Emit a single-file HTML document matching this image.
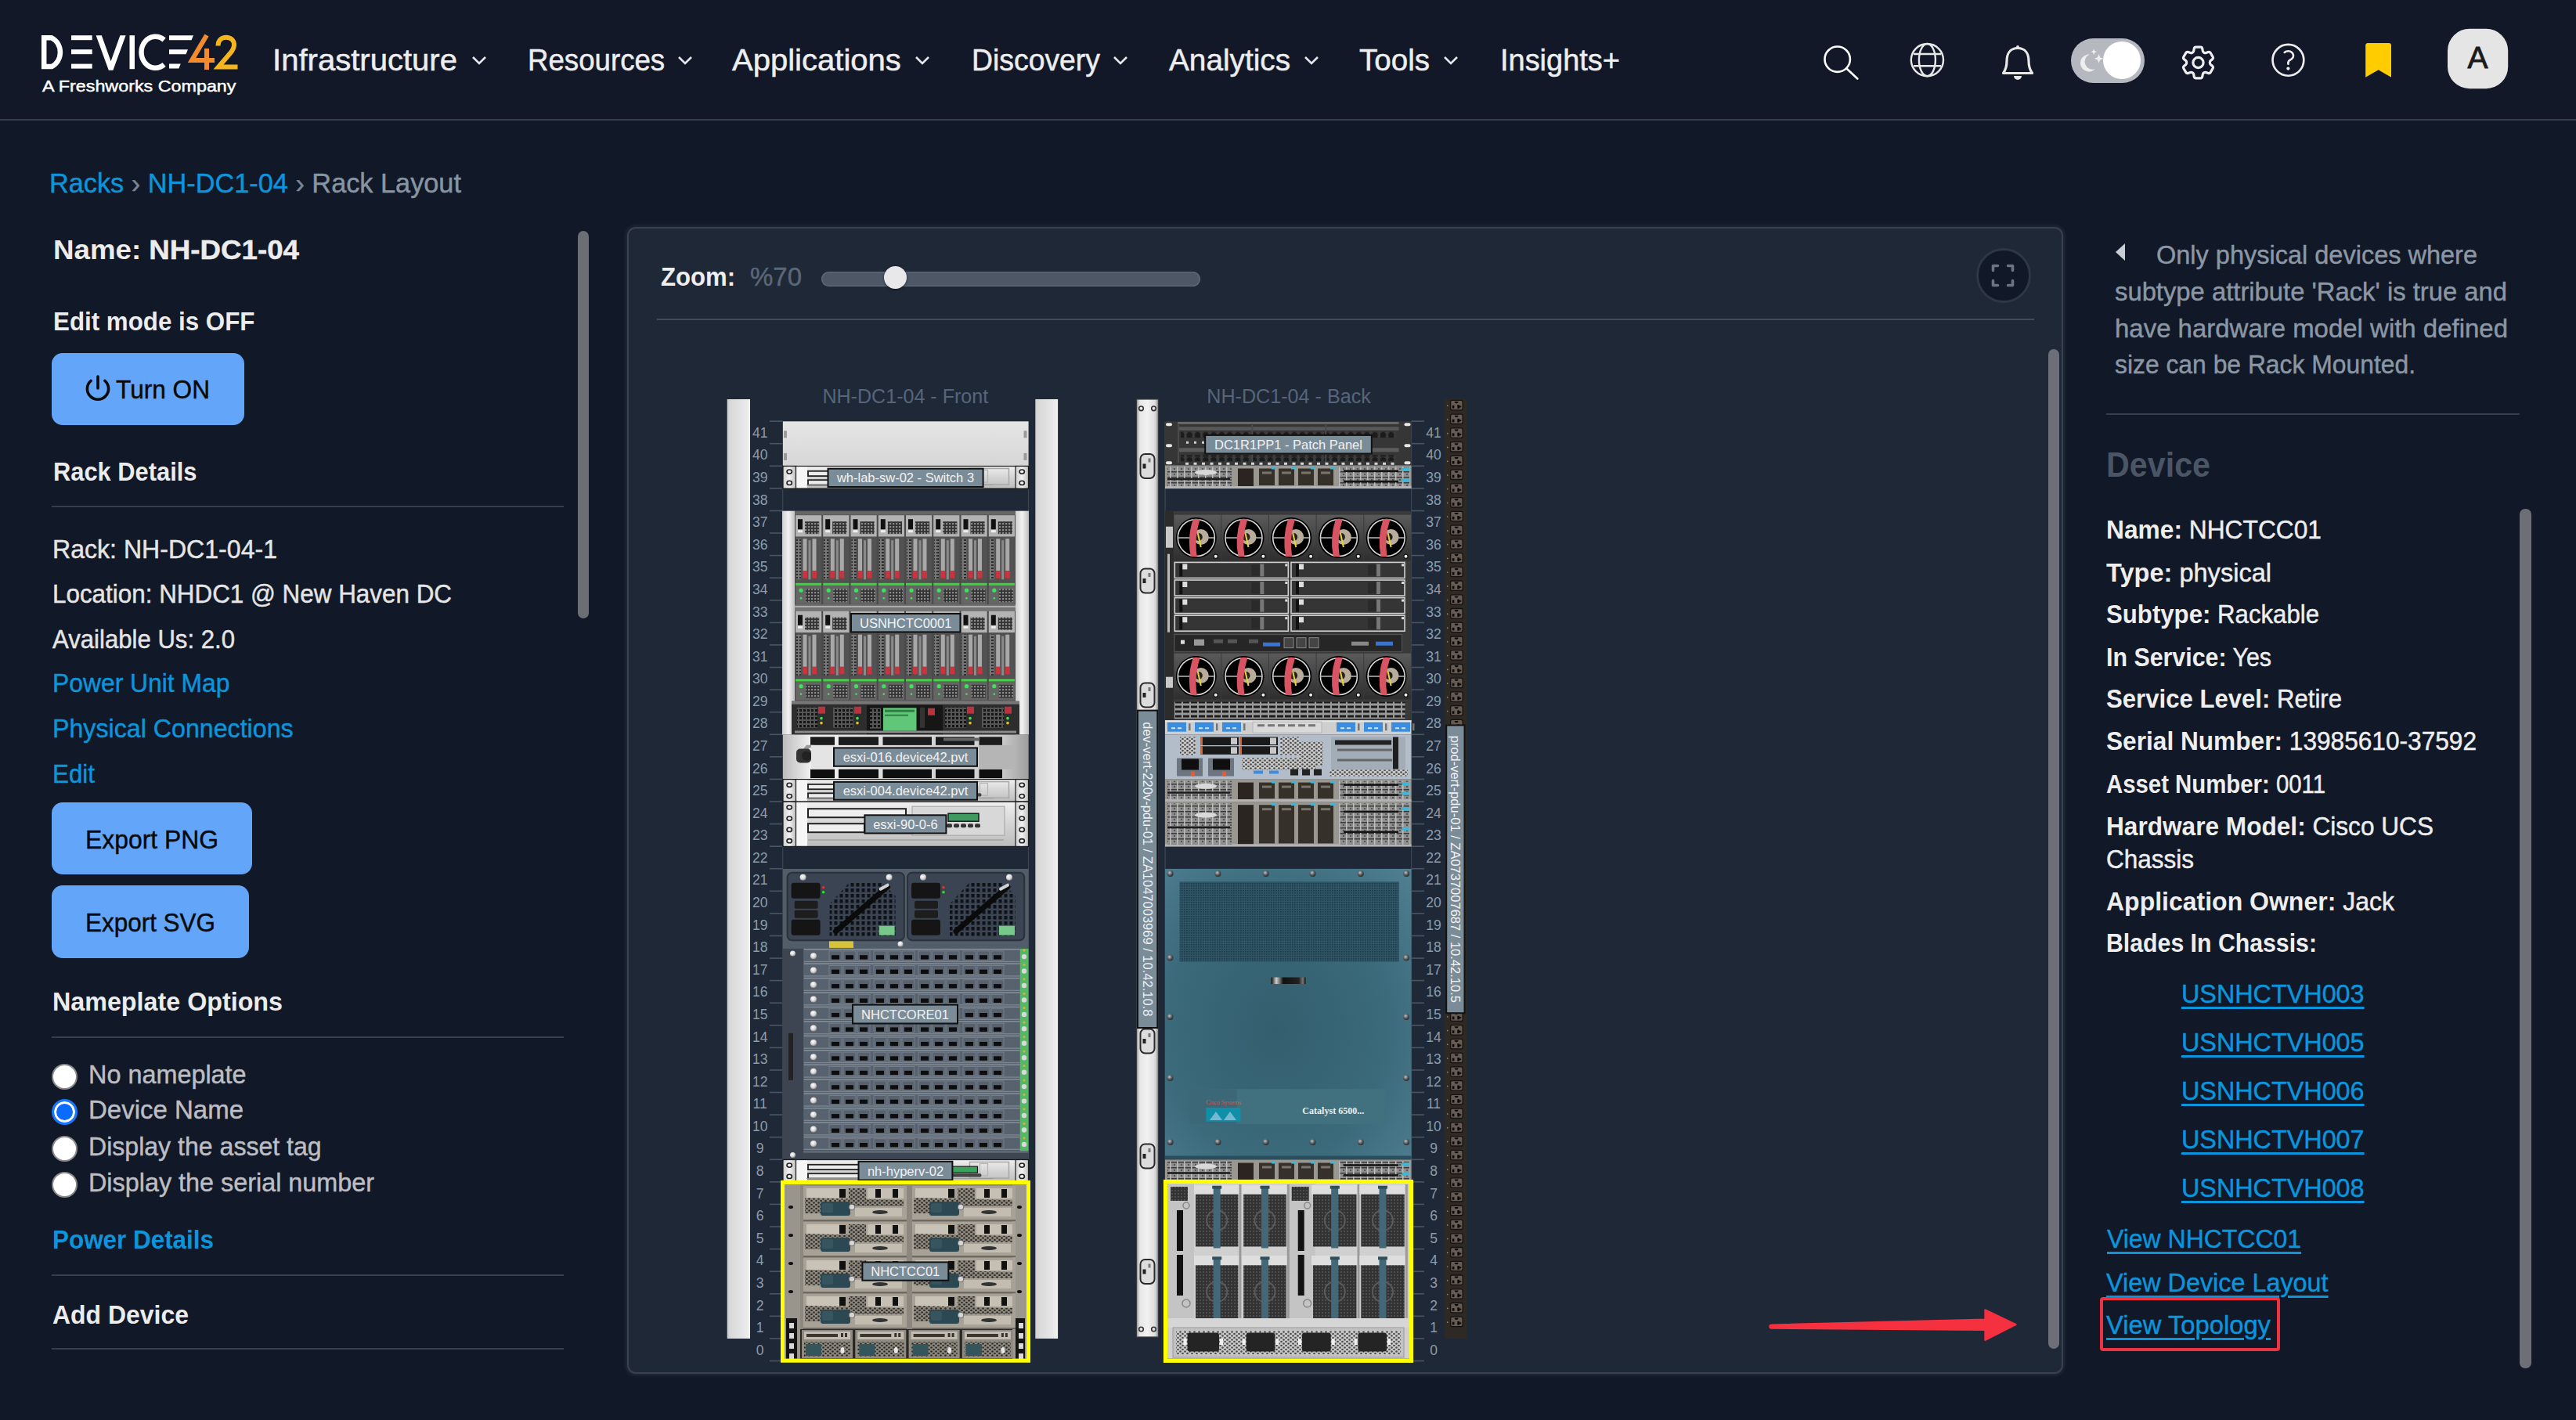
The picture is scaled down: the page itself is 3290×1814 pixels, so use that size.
<!DOCTYPE html><html><head><meta charset="utf-8"><style>
html,body{margin:0;padding:0;}
body{width:3290px;height:1814px;overflow:hidden;background:#111827;position:relative;font-family:"Liberation Sans",sans-serif;}
.abs{position:absolute;}
.t{position:absolute;white-space:nowrap;transform-origin:0 0;-webkit-text-stroke:0.45px currentColor;}
.t b{-webkit-text-stroke:0;}
#hdr{position:absolute;left:0;top:0;width:3290px;height:152px;background:#121828;}
.btn{background:#63a5f9;border-radius:14px;}
.hr{height:2px;background:#363d4b;}
#mid{background:#1f2837;border-radius:11px;box-sizing:border-box;border:2px solid #394150;box-shadow:0 0 4px 2px rgba(58,66,80,.45);}
</style></head><body>
<div id="hdr"></div><svg class="abs" style="left:50px;top:40px" width="260" height="85" viewBox="50 40 260 85">
<defs><linearGradient id="g42" x1="0" x2="1" y1="0" y2="0"><stop offset="0" stop-color="#f47f2f"/><stop offset="0.5" stop-color="#f4902a"/><stop offset="1" stop-color="#f7c218"/></linearGradient></defs>
<g fill="none" stroke="#fff" stroke-width="6.5">
<path d="M56.2 48.3 H66 A19.5 20.5 0 0 1 66 85.1 H56.2 Z" />
</g>
<g fill="#fff">
<rect x="91" y="45.2" width="26.7" height="6"/><rect x="91" y="63.2" width="26.7" height="6"/><rect x="91" y="81.6" width="26.7" height="6"/>
<path d="M122.6 45.2 h7.2 l11.8 33 l11.8 -33 h7.2 l-16.2 44.6 h-5.6 z"/>
<rect x="165.5" y="45.2" width="6.5" height="43"/>
</g>
<path d="M209.6 51 A18 20 0 1 0 209.6 82.5" fill="none" stroke="#fff" stroke-width="6.5"/>
<g fill="#fff"><path d="M216 45.2 h31 l-2.5 6 h-28.5 z"/><path d="M216 63.2 h24 l-2.5 6 h-21.5 z"/><path d="M216 81.6 h14.8 l-2.5 6 h-12.3 z"/></g>
<path d="M264 45 L245 77 H274 M264 62 V89" fill="none" stroke="#f38a2b" stroke-width="6"/>
<path d="M278.5 58.5 C278.5 51.5 283 47.7 288.8 47.7 C295 47.7 299 51.8 299 57.5 C299 61.5 297 64.5 294 68 L279 85.5 H303.5" fill="none" stroke="#f6b51c" stroke-width="6" stroke-linejoin="miter"/>
</svg><div class="t" style="transform:scaleX(1.1103);left:54px;top:98.6px;font-size:21px;line-height:21px;color:#ffffff;font-weight:normal;white-space:nowrap;-webkit-text-stroke:0.45px #fff">A Freshworks Company</div>
<div class="t" style="transform:scaleX(1.0271);left:348px;top:57.4px;font-size:39px;line-height:39px;color:#eeeeee;font-weight:normal;white-space:nowrap;-webkit-text-stroke:0.5px #eeeeee">Infrastructure</div>
<svg class="abs" style="left:602px;top:70px" width="20" height="16" viewBox="0 0 20 16"><path d="M2 3 L10 11 L18 3" fill="none" stroke="#e5e7eb" stroke-width="2.6"/></svg><div class="t" style="transform:scaleX(0.9398);left:673.8px;top:57.4px;font-size:39px;line-height:39px;color:#eeeeee;font-weight:normal;white-space:nowrap;-webkit-text-stroke:0.5px #eeeeee">Resources</div>
<svg class="abs" style="left:864.7px;top:70px" width="20" height="16" viewBox="0 0 20 16"><path d="M2 3 L10 11 L18 3" fill="none" stroke="#e5e7eb" stroke-width="2.6"/></svg><div class="t" style="transform:scaleX(1.0262);left:935.2px;top:57.4px;font-size:39px;line-height:39px;color:#eeeeee;font-weight:normal;white-space:nowrap;-webkit-text-stroke:0.5px #eeeeee">Applications</div>
<svg class="abs" style="left:1167.5px;top:70px" width="20" height="16" viewBox="0 0 20 16"><path d="M2 3 L10 11 L18 3" fill="none" stroke="#e5e7eb" stroke-width="2.6"/></svg><div class="t" style="transform:scaleX(0.9579);left:1241px;top:57.4px;font-size:39px;line-height:39px;color:#eeeeee;font-weight:normal;white-space:nowrap;-webkit-text-stroke:0.5px #eeeeee">Discovery</div>
<svg class="abs" style="left:1421px;top:70px" width="20" height="16" viewBox="0 0 20 16"><path d="M2 3 L10 11 L18 3" fill="none" stroke="#e5e7eb" stroke-width="2.6"/></svg><div class="t" style="transform:scaleX(0.9932);left:1493px;top:57.4px;font-size:39px;line-height:39px;color:#eeeeee;font-weight:normal;white-space:nowrap;-webkit-text-stroke:0.5px #eeeeee">Analytics</div>
<svg class="abs" style="left:1664.5px;top:70px" width="20" height="16" viewBox="0 0 20 16"><path d="M2 3 L10 11 L18 3" fill="none" stroke="#e5e7eb" stroke-width="2.6"/></svg><div class="t" style="transform:scaleX(0.9885);left:1736px;top:57.4px;font-size:39px;line-height:39px;color:#eeeeee;font-weight:normal;white-space:nowrap;-webkit-text-stroke:0.5px #eeeeee">Tools</div>
<svg class="abs" style="left:1843px;top:70px" width="20" height="16" viewBox="0 0 20 16"><path d="M2 3 L10 11 L18 3" fill="none" stroke="#e5e7eb" stroke-width="2.6"/></svg><div class="t" style="transform:scaleX(0.9727);left:1915.6px;top:57.4px;font-size:39px;line-height:39px;color:#eeeeee;font-weight:normal;white-space:nowrap;-webkit-text-stroke:0.5px #eeeeee">Insights+</div>
<svg class="abs" style="left:2320px;top:30px" width="920" height="90" viewBox="2320 30 920 90">
<g fill="none" stroke="#ffffff" stroke-width="2.6">
<circle cx="2346.7" cy="75.7" r="16.2"/><path d="M2358.9 88 L2372.3 100.5" stroke-linecap="round"/>
</g>
<g fill="none" stroke="#e8e8e8" stroke-width="2.4">
<circle cx="2461.4" cy="76.6" r="20.6"/><ellipse cx="2461.4" cy="76.6" rx="10.5" ry="20.6"/><path d="M2444 69 H2479 M2444 84.2 H2479"/>
</g>
<path d="M2577 61.5 C2567 61.5 2563 69 2563 78 C2563 86 2561 90 2558.5 93.5 H2595.5 C2593 90 2591 86 2591 78 C2591 69 2587 61.5 2577 61.5 Z" fill="none" stroke="#e8e8e8" stroke-width="3.2" stroke-linejoin="round"/>
<path d="M2572 97 h10 a5 5 0 0 1 -10 0 z" fill="#e8e8e8"/><rect x="2575" y="58" width="4" height="5" rx="2" fill="#e8e8e8"/>
<rect x="2645" y="49" width="94" height="57" rx="28.5" fill="#b5b8bf"/>
<circle cx="2710" cy="77" r="24" fill="#ffffff"/>
<path d="M2669 69.5 A11 11 0 1 0 2676 88 A9 9 0 0 1 2669 69.5 Z" fill="#eeeeee"/>
<path d="M2680.6 69 l1.6 4.2 4.2 1.6 -4.2 1.6 -1.6 4.2 -1.6 -4.2 -4.2 -1.6 4.2 -1.6 z" fill="#eeeeee"/>
<path d="M2674.2 62.5 l1.1 2.6 2.6 1.1 -2.6 1.1 -1.1 2.6 -1.1 -2.6 -2.6 -1.1 2.6 -1.1 z" fill="#eeeeee"/>
<g transform="translate(2781.1,53.6) scale(2.2)" fill="none" stroke="#eeeeee" stroke-width="1.45" stroke-linejoin="round">
<path d="M9.594 3.94c.09-.542.56-.94 1.11-.94h2.593c.55 0 1.02.398 1.11.94l.213 1.281c.063.374.313.686.645.87.074.04.147.083.22.127.325.196.72.257 1.075.124l1.217-.456a1.125 1.125 0 0 1 1.37.49l1.296 2.247a1.125 1.125 0 0 1-.26 1.431l-1.003.827c-.293.241-.438.613-.43.992a7.723 7.723 0 0 1 0 .255c-.008.378.137.75.43.991l1.004.827c.424.35.534.955.26 1.43l-1.298 2.247a1.125 1.125 0 0 1-1.369.491l-1.217-.456c-.355-.133-.75-.072-1.076.124a6.470 6.470 0 0 1-.22.128c-.331.183-.581.495-.644.869l-.213 1.281c-.09.543-.56.94-1.11.94h-2.594c-.55 0-1.019-.398-1.110-.94l-.213-1.281c-.062-.374-.312-.686-.644-.87a6.520 6.520 0 0 1-.22-.127c-.325-.196-.72-.257-1.076-.124l-1.217.456a1.125 1.125 0 0 1-1.369-.49l-1.297-2.247a1.125 1.125 0 0 1 .26-1.431l1.004-.827c.292-.24.437-.613.43-.991a6.932 6.932 0 0 1 0-.255c.007-.38-.138-.751-.43-.992l-1.004-.827a1.125 1.125 0 0 1-.26-1.43l1.297-2.247a1.125 1.125 0 0 1 1.37-.491l1.216.456c.356.133.751.072 1.076-.124.072-.044.146-.086.22-.128.332-.183.582-.495.644-.869l.214-1.28Z"/>
<circle cx="12" cy="12" r="3"/>
</g>
<g transform="translate(2895.9,50.3) scale(2.21)" fill="none" stroke="#eeeeee" stroke-width="1.2" stroke-linecap="round" stroke-linejoin="round">
<path d="M9.879 7.519c1.171-1.025 3.071-1.025 4.242 0 1.172 1.025 1.172 2.687 0 3.712-.203.179-.43.326-.67.442-.745.361-1.45.999-1.45 1.827v.75"/>
<circle cx="12" cy="12" r="9"/>
</g>
<circle cx="2922.4" cy="87.6" r="2.1" fill="#eeeeee"/>
<path d="M3024.2 54.9 h26.8 a3 3 0 0 1 3 3 v40.9 l-16.3 -9.6 l-16.5 9.6 v-40.9 a3 3 0 0 1 3 -3 z" fill="#ffcc00"/>
<rect x="3126" y="36.7" width="77.2" height="76.5" rx="28" fill="#e5e5e5"/>
</svg><div class="t " style="left:3151.5px;top:54.1px;font-size:39px;line-height:39px;color:#1a1a1a;font-weight:normal;-webkit-text-stroke:0.9px #1a1a1a">A</div>
<div class="abs" style="left:0;top:152px;width:3290px;height:2px;background:#363d4b"></div><div class="t" style="transform:scaleX(0.9797);left:62.8px;top:215.6px;font-size:35px;line-height:35px;white-space:nowrap"><span style="color:#0b95dc">Racks</span> <span style="color:#7a8796">›</span> <span style="color:#0b95dc">NH-DC1-04</span> <span style="color:#7a8796">›</span> <span style="color:#8795a3">Rack Layout</span></div><div class="t" style="transform:scaleX(1.0483);left:67.5px;top:301.2px;font-size:35px;line-height:35px;color:#ececec;font-weight:normal;white-space:nowrap"><b>Name:</b> <span style="font-weight:bold">NH-DC1-04</span></div>
<div class="t" style="transform:scaleX(0.9210);left:67.5px;top:393.1px;font-size:34px;line-height:34px;color:#ececec;font-weight:bold;white-space:nowrap;-webkit-text-stroke:0">Edit mode is OFF</div>
<div class="abs btn" style="left:66px;top:451px;width:246px;height:92px"></div><svg class="abs" style="left:105px;top:476px" width="40" height="40" viewBox="0 0 40 40"><path d="M11 10.5 A13.6 13.6 0 1 0 29 10.5" fill="none" stroke="#0a0a0a" stroke-width="3.6" stroke-linecap="round"/><path d="M20 5 V20" stroke="#0a0a0a" stroke-width="3.6" stroke-linecap="round"/></svg><div class="t" style="transform:scaleX(0.9296);left:148px;top:480.1px;font-size:34px;line-height:34px;color:#0a0a0a;font-weight:normal;white-space:nowrap">Turn ON</div>
<div class="t" style="transform:scaleX(0.9074);left:67.5px;top:584.5px;font-size:34px;line-height:34px;color:#ececec;font-weight:bold;white-space:nowrap;-webkit-text-stroke:0">Rack Details</div>
<div class="abs hr" style="left:66px;top:646px;width:654px"></div><div class="t" style="transform:scaleX(0.9721);left:67.4px;top:685.0px;font-size:33px;line-height:33px;color:#e5e5e5;font-weight:normal;white-space:nowrap">Rack: NH-DC1-04-1</div>
<div class="t" style="transform:scaleX(0.9514);left:67.4px;top:742.0px;font-size:33px;line-height:33px;color:#e5e5e5;font-weight:normal;white-space:nowrap">Location: NHDC1 @ New Haven DC</div>
<div class="t" style="transform:scaleX(0.9431);left:67.4px;top:800.0px;font-size:33px;line-height:33px;color:#e5e5e5;font-weight:normal;white-space:nowrap">Available Us: 2.0</div>
<div class="t" style="transform:scaleX(0.9648);left:67.4px;top:856.0px;font-size:33px;line-height:33px;color:#0b95dc;font-weight:normal;white-space:nowrap">Power Unit Map</div>
<div class="t" style="transform:scaleX(0.9750);left:67.4px;top:914.0px;font-size:33px;line-height:33px;color:#0b95dc;font-weight:normal;white-space:nowrap">Physical Connections</div>
<div class="t" style="transform:scaleX(0.9495);left:67.4px;top:971.7px;font-size:33px;line-height:33px;color:#0b95dc;font-weight:normal;white-space:nowrap">Edit</div>
<div class="abs btn" style="left:66px;top:1025px;width:256px;height:92px"></div><div class="t" style="transform:scaleX(0.9656);left:109px;top:1055.5px;font-size:33px;line-height:33px;color:#0a0a0a;font-weight:normal;white-space:nowrap">Export PNG</div>
<div class="abs btn" style="left:66px;top:1131px;width:252px;height:93px"></div><div class="t" style="transform:scaleX(0.9527);left:109px;top:1162.0px;font-size:33px;line-height:33px;color:#0a0a0a;font-weight:normal;white-space:nowrap">Export SVG</div>
<div class="t" style="transform:scaleX(0.9489);left:67px;top:1262.1px;font-size:34px;line-height:34px;color:#ececec;font-weight:bold;white-space:nowrap;-webkit-text-stroke:0">Nameplate Options</div>
<div class="abs hr" style="left:66px;top:1324px;width:654px"></div><div class="abs" style="left:66px;top:1358.5px;width:33px;height:33px;border-radius:50%;background:#fff;box-sizing:border-box;border:2.5px solid #8a8a8a"></div><div class="t" style="transform:scaleX(0.9812);left:113px;top:1355.5px;font-size:33px;line-height:33px;color:#bdbec3;font-weight:normal;white-space:nowrap">No nameplate</div>
<div class="abs" style="left:66px;top:1404.0px;width:33px;height:33px;border-radius:50%;background:#0a6cff;box-sizing:border-box;border:3px solid #1778ff;box-shadow:inset 0 0 0 3px #fff"></div><div class="t " style="left:113px;top:1401.0px;font-size:33px;line-height:33px;color:#bdbec3;font-weight:normal;white-space:nowrap">Device Name</div>
<div class="abs" style="left:66px;top:1450.5px;width:33px;height:33px;border-radius:50%;background:#fff;box-sizing:border-box;border:2.5px solid #8a8a8a"></div><div class="t" style="transform:scaleX(0.9718);left:113px;top:1448.0px;font-size:33px;line-height:33px;color:#bdbec3;font-weight:normal;white-space:nowrap">Display the asset tag</div>
<div class="abs" style="left:66px;top:1496.5px;width:33px;height:33px;border-radius:50%;background:#fff;box-sizing:border-box;border:2.5px solid #8a8a8a"></div><div class="t" style="transform:scaleX(0.9803);left:113px;top:1494.0px;font-size:33px;line-height:33px;color:#bdbec3;font-weight:normal;white-space:nowrap">Display the serial number</div>
<div class="t" style="transform:scaleX(0.9238);left:66.6px;top:1566.1px;font-size:34px;line-height:34px;color:#0b95dc;font-weight:bold;white-space:nowrap;-webkit-text-stroke:0">Power Details</div>
<div class="abs hr" style="left:66px;top:1628px;width:654px"></div><div class="t" style="transform:scaleX(0.9396);left:66.6px;top:1662.1px;font-size:34px;line-height:34px;color:#ececec;font-weight:bold;white-space:nowrap;-webkit-text-stroke:0">Add Device</div>
<div class="abs hr" style="left:66px;top:1722px;width:654px"></div><div class="abs" style="left:738px;top:295px;width:14px;height:495px;border-radius:7px;background:#6b6e75"></div><div class="abs" id="mid" style="left:801px;top:290px;width:1834px;height:1465px"></div><div class="t" style="transform:scaleX(0.9147);left:843.6px;top:335.7px;font-size:34px;line-height:34px;color:#eeeeee;font-weight:bold;white-space:nowrap;-webkit-text-stroke:0">Zoom:</div>
<div class="t" style="transform:scaleX(0.9697);left:957.5px;top:335.7px;font-size:34px;line-height:34px;color:#5b6778;font-weight:normal;white-space:nowrap">%70</div>
<div class="abs" style="left:1049px;top:347px;width:484px;height:19px;border-radius:10px;background:#4d5766;box-shadow:inset 0 0 0 1.5px #5d6776"></div><div class="abs" style="left:1128.5px;top:340px;width:29px;height:29px;border-radius:50%;background:#e8e8ea;box-shadow:0 1px 3px rgba(0,0,0,.5)"></div><div class="abs" style="left:2523.5px;top:316.5px;width:70px;height:70px;border-radius:50%;background:#111827;box-sizing:border-box;border:3.5px solid #2e3746"></div><svg class="abs" style="left:2540px;top:334px" width="36" height="36" viewBox="0 0 36 36"><g fill="none" stroke="#6b7482" stroke-width="3.6"><path d="M5.5 11.5 V5.5 H11.5 M24.5 5.5 H30.5 V11.5 M30.5 24.5 V30.5 H24.5 M11.5 30.5 H5.5 V24.5" stroke-linecap="round" stroke-linejoin="round"/></g></svg><div class="abs" style="left:839px;top:407px;width:1759px;height:2px;background:#414b59"></div><div class="abs" style="left:2615.5px;top:446px;width:14.5px;height:1277px;border-radius:7px;background:#6c6f78"></div><svg class="abs" style="left:2250px;top:1660px" width="340" height="60" viewBox="2250 1660 340 60"><path d="M2262.5 1692.6 L2535.5 1685.8 L2535.5 1673.5 L2574.5 1692 L2535.5 1711.8 L2535.5 1698.8 L2262.5 1696.6 A2 2 0 0 1 2262.5 1692.6 Z" fill="#f5303f" stroke="#f5303f" stroke-width="2.4" stroke-linejoin="round"/></svg><svg class="abs" style="left:900px;top:480px" width="1000" height="1290" viewBox="900 480 1000 1290">
<defs>
<linearGradient id="rail" x1="0" x2="1"><stop offset="0" stop-color="#cfcfcf"/><stop offset="0.15" stop-color="#d9d9d9"/><stop offset="0.6" stop-color="#e3e3e3"/><stop offset="0.9" stop-color="#ececec"/><stop offset="1" stop-color="#f6f6f6"/></linearGradient>
<linearGradient id="silver" x1="0" x2="0" y1="0" y2="1"><stop offset="0" stop-color="#f0f0f0"/><stop offset="0.5" stop-color="#d4d4d4"/><stop offset="1" stop-color="#bdbdbd"/></linearGradient>
<linearGradient id="silverH" x1="0" x2="1"><stop offset="0" stop-color="#bdbdbd"/><stop offset="0.12" stop-color="#f4f4f4"/><stop offset="0.5" stop-color="#d6d6d6"/><stop offset="0.88" stop-color="#cfcfcf"/><stop offset="1" stop-color="#9e9e9e"/></linearGradient>
<linearGradient id="blank" x1="0" x2="0" y1="0" y2="1"><stop offset="0" stop-color="#e6e6e6"/><stop offset="1" stop-color="#d6d6d6"/></linearGradient>
<linearGradient id="ear" x1="0" x2="1"><stop offset="0" stop-color="#cfcfcf"/><stop offset="0.5" stop-color="#f2f2f2"/><stop offset="1" stop-color="#bfbfbf"/></linearGradient>
<linearGradient id="teal" x1="0" x2="1" y1="0" y2="1"><stop offset="0" stop-color="#467789"/><stop offset="0.5" stop-color="#3c6b7d"/><stop offset="1" stop-color="#355f70"/></linearGradient>
<linearGradient id="pdul" x1="0" x2="1"><stop offset="0" stop-color="#9c9c9c"/><stop offset="0.15" stop-color="#e6e6e6"/><stop offset="0.5" stop-color="#f2f2f2"/><stop offset="0.85" stop-color="#dcdcdc"/><stop offset="1" stop-color="#8c8c8c"/></linearGradient>
<linearGradient id="fanmod" x1="0" x2="0" y1="0" y2="1"><stop offset="0" stop-color="#5a5a5a"/><stop offset="1" stop-color="#2e2e2e"/></linearGradient>
<pattern id="grid4" width="4" height="4" patternUnits="userSpaceOnUse"><rect width="4" height="4" fill="#333"/><rect x="0" y="0" width="2.2" height="2.2" fill="#8a8a8a"/></pattern>
<pattern id="vgridB" width="5" height="4" patternUnits="userSpaceOnUse"><rect width="5" height="4" fill="#777"/><rect x="1" y="1" width="3" height="2" fill="#2a2a2a"/></pattern>
<pattern id="vgrid" width="5" height="5" patternUnits="userSpaceOnUse"><rect width="5" height="5" fill="#555"/><rect x="1" y="1" width="3" height="3" fill="#141414"/></pattern>
<pattern id="psugrid" width="7" height="7" patternUnits="userSpaceOnUse"><rect width="7" height="7" fill="#3a4452"/><rect x="1.5" y="1" width="4" height="4.5" fill="#0e1216"/></pattern>
<pattern id="mesh" width="3" height="3" patternUnits="userSpaceOnUse"><rect width="3" height="3" fill="#2f5566"/><rect x="0" y="0" width="1.6" height="1.6" fill="#1d3a47"/></pattern>
<pattern id="hexmesh" width="6" height="5" patternUnits="userSpaceOnUse"><rect width="6" height="5" fill="#c9c9c9"/><circle cx="1.5" cy="1.5" r="1.3" fill="#4a4a4a"/><circle cx="4.5" cy="4" r="1.3" fill="#4a4a4a"/></pattern>
<pattern id="hexbeige" width="6" height="5" patternUnits="userSpaceOnUse"><rect width="6" height="5" fill="#8d887e"/><circle cx="1.5" cy="1.5" r="1.3" fill="#2e2c28"/><circle cx="4.5" cy="4" r="1.3" fill="#2e2c28"/></pattern>
<pattern id="darkmesh" width="4" height="4" patternUnits="userSpaceOnUse"><rect width="4" height="4" fill="#333"/><rect width="2" height="2" fill="#4e4e4e"/></pattern>
<pattern id="grill" width="10" height="6" patternUnits="userSpaceOnUse"><rect width="10" height="6" fill="#9a9a9a"/><rect x="1" y="1.5" width="8" height="3" fill="#1c1c1c"/></pattern>
<pattern id="photo" width="9" height="7" patternUnits="userSpaceOnUse"><rect width="9" height="7" fill="#8f8f8f"/><rect x="0" y="0" width="9" height="1.5" fill="#3a3a3a"/><rect x="0" y="0" width="1.5" height="7" fill="#bdbdbd"/><rect x="5" y="3" width="2" height="2" fill="#555"/></pattern>
<pattern id="ppRow" width="10.3" height="8" patternUnits="userSpaceOnUse"><rect width="10.3" height="8" fill="#3c3c3c"/><path d="M1.5 7.5 V3 a3.6 3 0 0 1 7.2 0 V7.5 Z" fill="#1c1c1c"/></pattern>
<pattern id="pportsP" width="13" height="12" patternUnits="userSpaceOnUse"><rect width="13" height="12" fill="#252525"/><rect x="2" y="3" width="9" height="7" fill="#4a4a4a"/><rect x="4" y="5" width="5" height="4" fill="#151515"/></pattern>
<radialGradient id="tealR" cx="0.45" cy="0.55" r="0.75"><stop offset="0" stop-color="#335e6e"/><stop offset="0.6" stop-color="#3b6a7b"/><stop offset="1" stop-color="#4e7e90"/></radialGradient>
<linearGradient id="handleG" x1="0" x2="1"><stop offset="0" stop-color="#0a0a0a"/><stop offset="0.15" stop-color="#cfcfcf"/><stop offset="0.35" stop-color="#111"/><stop offset="0.8" stop-color="#222"/><stop offset="0.92" stop-color="#777"/><stop offset="1" stop-color="#111"/></linearGradient>
<radialGradient id="bolt" cx="0.4" cy="0.35" r="0.7"><stop offset="0" stop-color="#bfc5c8"/><stop offset="0.5" stop-color="#5a6064"/><stop offset="1" stop-color="#222"/></radialGradient>
<radialGradient id="screwW" cx="0.4" cy="0.35" r="0.7"><stop offset="0" stop-color="#ffffff"/><stop offset="0.6" stop-color="#d6d6d6"/><stop offset="1" stop-color="#8a8a8a"/></radialGradient>
</defs>
<text x="1050.4" y="514.6" font-size="26" fill="#56657a" font-family="Liberation Sans" textLength="211.8" lengthAdjust="spacingAndGlyphs">NH-DC1-04 - Front</text><text x="1541.3" y="514.6" font-size="26" fill="#56657a" font-family="Liberation Sans" textLength="209.5" lengthAdjust="spacingAndGlyphs">NH-DC1-04 - Back</text><rect x="928.7" y="510.0" width="29.3" height="1200.0" fill="url(#rail)" /><rect x="1322.3" y="510.0" width="28.8" height="1200.0" fill="url(#rail)" /><rect x="983" y="1737.7" width="16.600000000000023" height="1.6" fill="#4a5563"/><rect x="983" y="1709.1" width="16.600000000000023" height="1.6" fill="#4a5563"/><rect x="983" y="1680.5" width="16.600000000000023" height="1.6" fill="#4a5563"/><rect x="983" y="1652.0" width="16.600000000000023" height="1.6" fill="#4a5563"/><rect x="983" y="1623.4" width="16.600000000000023" height="1.6" fill="#4a5563"/><rect x="983" y="1594.8" width="16.600000000000023" height="1.6" fill="#4a5563"/><rect x="983" y="1566.2" width="16.600000000000023" height="1.6" fill="#4a5563"/><rect x="983" y="1537.6" width="16.600000000000023" height="1.6" fill="#4a5563"/><rect x="983" y="1509.1" width="16.600000000000023" height="1.6" fill="#4a5563"/><rect x="983" y="1480.5" width="16.600000000000023" height="1.6" fill="#4a5563"/><rect x="983" y="1451.9" width="16.600000000000023" height="1.6" fill="#4a5563"/><rect x="983" y="1423.3" width="16.600000000000023" height="1.6" fill="#4a5563"/><rect x="983" y="1394.7" width="16.600000000000023" height="1.6" fill="#4a5563"/><rect x="983" y="1366.2" width="16.600000000000023" height="1.6" fill="#4a5563"/><rect x="983" y="1337.6" width="16.600000000000023" height="1.6" fill="#4a5563"/><rect x="983" y="1309.0" width="16.600000000000023" height="1.6" fill="#4a5563"/><rect x="983" y="1280.4" width="16.600000000000023" height="1.6" fill="#4a5563"/><rect x="983" y="1251.8" width="16.600000000000023" height="1.6" fill="#4a5563"/><rect x="983" y="1223.3" width="16.600000000000023" height="1.6" fill="#4a5563"/><rect x="983" y="1194.7" width="16.600000000000023" height="1.6" fill="#4a5563"/><rect x="983" y="1166.1" width="16.600000000000023" height="1.6" fill="#4a5563"/><rect x="983" y="1137.5" width="16.600000000000023" height="1.6" fill="#4a5563"/><rect x="983" y="1108.9" width="16.600000000000023" height="1.6" fill="#4a5563"/><rect x="983" y="1080.4" width="16.600000000000023" height="1.6" fill="#4a5563"/><rect x="983" y="1051.8" width="16.600000000000023" height="1.6" fill="#4a5563"/><rect x="983" y="1023.2" width="16.600000000000023" height="1.6" fill="#4a5563"/><rect x="983" y="994.6" width="16.600000000000023" height="1.6" fill="#4a5563"/><rect x="983" y="966.0" width="16.600000000000023" height="1.6" fill="#4a5563"/><rect x="983" y="937.5" width="16.600000000000023" height="1.6" fill="#4a5563"/><rect x="983" y="908.9" width="16.600000000000023" height="1.6" fill="#4a5563"/><rect x="983" y="880.3" width="16.600000000000023" height="1.6" fill="#4a5563"/><rect x="983" y="851.7" width="16.600000000000023" height="1.6" fill="#4a5563"/><rect x="983" y="823.1" width="16.600000000000023" height="1.6" fill="#4a5563"/><rect x="983" y="794.6" width="16.600000000000023" height="1.6" fill="#4a5563"/><rect x="983" y="766.0" width="16.600000000000023" height="1.6" fill="#4a5563"/><rect x="983" y="737.4" width="16.600000000000023" height="1.6" fill="#4a5563"/><rect x="983" y="708.8" width="16.600000000000023" height="1.6" fill="#4a5563"/><rect x="983" y="680.2" width="16.600000000000023" height="1.6" fill="#4a5563"/><rect x="983" y="651.7" width="16.600000000000023" height="1.6" fill="#4a5563"/><rect x="983" y="623.1" width="16.600000000000023" height="1.6" fill="#4a5563"/><rect x="983" y="594.5" width="16.600000000000023" height="1.6" fill="#4a5563"/><rect x="983" y="565.9" width="16.600000000000023" height="1.6" fill="#4a5563"/><rect x="983" y="537.3" width="16.600000000000023" height="1.6" fill="#4a5563"/><text x="970.7" y="1730.6" font-size="17.5" fill="#8d9cab" text-anchor="middle" font-family="Liberation Sans">0</text><text x="970.7" y="1702.0" font-size="17.5" fill="#8d9cab" text-anchor="middle" font-family="Liberation Sans">1</text><text x="970.7" y="1673.5" font-size="17.5" fill="#8d9cab" text-anchor="middle" font-family="Liberation Sans">2</text><text x="970.7" y="1644.9" font-size="17.5" fill="#8d9cab" text-anchor="middle" font-family="Liberation Sans">3</text><text x="970.7" y="1616.3" font-size="17.5" fill="#8d9cab" text-anchor="middle" font-family="Liberation Sans">4</text><text x="970.7" y="1587.7" font-size="17.5" fill="#8d9cab" text-anchor="middle" font-family="Liberation Sans">5</text><text x="970.7" y="1559.1" font-size="17.5" fill="#8d9cab" text-anchor="middle" font-family="Liberation Sans">6</text><text x="970.7" y="1530.6" font-size="17.5" fill="#8d9cab" text-anchor="middle" font-family="Liberation Sans">7</text><text x="970.7" y="1502.0" font-size="17.5" fill="#8d9cab" text-anchor="middle" font-family="Liberation Sans">8</text><text x="970.7" y="1473.4" font-size="17.5" fill="#8d9cab" text-anchor="middle" font-family="Liberation Sans">9</text><text x="970.7" y="1444.8" font-size="17.5" fill="#8d9cab" text-anchor="middle" font-family="Liberation Sans">10</text><text x="970.7" y="1416.2" font-size="17.5" fill="#8d9cab" text-anchor="middle" font-family="Liberation Sans">11</text><text x="970.7" y="1387.7" font-size="17.5" fill="#8d9cab" text-anchor="middle" font-family="Liberation Sans">12</text><text x="970.7" y="1359.1" font-size="17.5" fill="#8d9cab" text-anchor="middle" font-family="Liberation Sans">13</text><text x="970.7" y="1330.5" font-size="17.5" fill="#8d9cab" text-anchor="middle" font-family="Liberation Sans">14</text><text x="970.7" y="1301.9" font-size="17.5" fill="#8d9cab" text-anchor="middle" font-family="Liberation Sans">15</text><text x="970.7" y="1273.3" font-size="17.5" fill="#8d9cab" text-anchor="middle" font-family="Liberation Sans">16</text><text x="970.7" y="1244.8" font-size="17.5" fill="#8d9cab" text-anchor="middle" font-family="Liberation Sans">17</text><text x="970.7" y="1216.2" font-size="17.5" fill="#8d9cab" text-anchor="middle" font-family="Liberation Sans">18</text><text x="970.7" y="1187.6" font-size="17.5" fill="#8d9cab" text-anchor="middle" font-family="Liberation Sans">19</text><text x="970.7" y="1159.0" font-size="17.5" fill="#8d9cab" text-anchor="middle" font-family="Liberation Sans">20</text><text x="970.7" y="1130.4" font-size="17.5" fill="#8d9cab" text-anchor="middle" font-family="Liberation Sans">21</text><text x="970.7" y="1101.9" font-size="17.5" fill="#8d9cab" text-anchor="middle" font-family="Liberation Sans">22</text><text x="970.7" y="1073.3" font-size="17.5" fill="#8d9cab" text-anchor="middle" font-family="Liberation Sans">23</text><text x="970.7" y="1044.7" font-size="17.5" fill="#8d9cab" text-anchor="middle" font-family="Liberation Sans">24</text><text x="970.7" y="1016.1" font-size="17.5" fill="#8d9cab" text-anchor="middle" font-family="Liberation Sans">25</text><text x="970.7" y="987.5" font-size="17.5" fill="#8d9cab" text-anchor="middle" font-family="Liberation Sans">26</text><text x="970.7" y="959.0" font-size="17.5" fill="#8d9cab" text-anchor="middle" font-family="Liberation Sans">27</text><text x="970.7" y="930.4" font-size="17.5" fill="#8d9cab" text-anchor="middle" font-family="Liberation Sans">28</text><text x="970.7" y="901.8" font-size="17.5" fill="#8d9cab" text-anchor="middle" font-family="Liberation Sans">29</text><text x="970.7" y="873.2" font-size="17.5" fill="#8d9cab" text-anchor="middle" font-family="Liberation Sans">30</text><text x="970.7" y="844.6" font-size="17.5" fill="#8d9cab" text-anchor="middle" font-family="Liberation Sans">31</text><text x="970.7" y="816.1" font-size="17.5" fill="#8d9cab" text-anchor="middle" font-family="Liberation Sans">32</text><text x="970.7" y="787.5" font-size="17.5" fill="#8d9cab" text-anchor="middle" font-family="Liberation Sans">33</text><text x="970.7" y="758.9" font-size="17.5" fill="#8d9cab" text-anchor="middle" font-family="Liberation Sans">34</text><text x="970.7" y="730.3" font-size="17.5" fill="#8d9cab" text-anchor="middle" font-family="Liberation Sans">35</text><text x="970.7" y="701.7" font-size="17.5" fill="#8d9cab" text-anchor="middle" font-family="Liberation Sans">36</text><text x="970.7" y="673.2" font-size="17.5" fill="#8d9cab" text-anchor="middle" font-family="Liberation Sans">37</text><text x="970.7" y="644.6" font-size="17.5" fill="#8d9cab" text-anchor="middle" font-family="Liberation Sans">38</text><text x="970.7" y="616.0" font-size="17.5" fill="#8d9cab" text-anchor="middle" font-family="Liberation Sans">39</text><text x="970.7" y="587.4" font-size="17.5" fill="#8d9cab" text-anchor="middle" font-family="Liberation Sans">40</text><text x="970.7" y="558.8" font-size="17.5" fill="#8d9cab" text-anchor="middle" font-family="Liberation Sans">41</text><rect x="999.1" y="538.3" width="1.2" height="1200.4" fill="#3b4655"/><rect x="1312.9" y="538.3" width="1.2" height="1200.4" fill="#3b4655"/><rect x="1000.0" y="538.3" width="313.5" height="57.2" fill="url(#blank)" /><rect x="1001" y="550.3" width="4" height="9" fill="#9a9a9a"/><rect x="1307.5" y="550.3" width="4" height="9" fill="#9a9a9a"/><rect x="1001" y="578.9" width="4" height="9" fill="#9a9a9a"/><rect x="1307.5" y="578.9" width="4" height="9" fill="#9a9a9a"/><rect x="1000.0" y="595.5" width="313.5" height="28.6" fill="url(#silver)" stroke="#1b1b1b" stroke-width="1.2"/><rect x="1017.0" y="596.5" width="14.0" height="26.6" fill="#f6f6f6" /><rect x="1000.0" y="595.5" width="16.5" height="28.6" fill="url(#ear)" stroke="#1b1b1b" stroke-width="1.2"/><ellipse cx="1008.2" cy="602.6" rx="3.2" ry="2.6" fill="none" stroke="#222" stroke-width="1.6"/><ellipse cx="1008.2" cy="616.9" rx="3.2" ry="2.6" fill="none" stroke="#222" stroke-width="1.6"/><rect x="1297.0" y="595.5" width="16.5" height="28.6" fill="url(#ear)" stroke="#1b1b1b" stroke-width="1.2"/><ellipse cx="1305.2" cy="602.6" rx="3.2" ry="2.6" fill="none" stroke="#222" stroke-width="1.6"/><ellipse cx="1305.2" cy="616.9" rx="3.2" ry="2.6" fill="none" stroke="#222" stroke-width="1.6"/><rect x="1032" y="601.8" width="45" height="6.3" fill="#ececec" stroke="#222" stroke-width="1.8"/><rect x="1032" y="613.2" width="45" height="6.3" fill="#ececec" stroke="#222" stroke-width="1.8"/><rect x="1238.5" y="598.5000000000002" width="50" height="20.6" fill="none" stroke="#a8a8a8" stroke-width="1.5"/><rect x="1251.5" y="600.5000000000002" width="10" height="15.6" fill="none" stroke="#b5b5b5" stroke-width="1.2"/><rect x="1030" y="619.1" width="238.5" height="1" fill="#9a9a9a"/><rect x="1057.5" y="598.7" width="198.1" height="23.3" fill="#7b8c99" stroke="#111" stroke-width="2"/><text x="1156.5" y="616.3" font-size="16.5" fill="#f2f2f2" text-anchor="middle" font-family="Liberation Sans">wh-lab-sw-02 - Switch 3</text><rect x="999.0" y="652.7" width="315.0" height="285.8" fill="#4a4a4a" /><rect x="999.0" y="652.7" width="16.0" height="285.8" fill="url(#ear)" /><rect x="1297.0" y="652.7" width="17.0" height="285.8" fill="url(#ear)" /><rect x="1015.0" y="652.7" width="282.0" height="5.0" fill="#666" /><rect x="1016.0" y="658.2" width="33.2" height="27.5" fill="#b3b3b3" /><rect x="1019.0" y="663.2" width="6.0" height="13.0" fill="#111" /><rect x="1019.0" y="677.2" width="6.0" height="3.0" fill="#eee" /><rect x="1028.0" y="666.1600000000001" width="18.2" height="16" fill="url(#grid4)"/><rect x="1016.0" y="685.7" width="33.2" height="58.0" fill="#525252" /><rect x="1017.0" y="688.1600000000001" width="6" height="52" fill="url(#vgridB)"/><rect x="1025.5" y="688.2" width="5.0" height="41.0" fill="#a8a8a8" /><rect x="1037.5" y="688.2" width="5.0" height="41.0" fill="#a8a8a8" /><rect x="1032.5" y="690.2" width="3.0" height="50.0" fill="#8a8a8a" /><rect x="1025.0" y="729.7" width="6.0" height="9.0" fill="#c9343f" /><rect x="1037.0" y="729.7" width="6.0" height="9.0" fill="#c9343f" /><rect x="1016.0" y="744.7" width="33.2" height="3.4" fill="#40d040" /><rect x="1016.0" y="748.7" width="33.2" height="23.0" fill="#666666" /><circle cx="1023.0" cy="754.1600000000001" r="2.6" fill="#3fe05a"/><circle cx="1023.0" cy="764.1600000000001" r="1.3" fill="#3fe05a"/><rect x="1029.0" y="752.1600000000001" width="18.2" height="17" fill="url(#grid4)"/><rect x="1051.2" y="658.2" width="33.2" height="27.5" fill="#b3b3b3" /><rect x="1054.2" y="663.2" width="6.0" height="13.0" fill="#111" /><rect x="1054.2" y="677.2" width="6.0" height="3.0" fill="#eee" /><rect x="1063.2" y="666.1600000000001" width="18.2" height="16" fill="url(#grid4)"/><rect x="1051.2" y="685.7" width="33.2" height="58.0" fill="#525252" /><rect x="1052.2" y="688.1600000000001" width="6" height="52" fill="url(#vgridB)"/><rect x="1060.8" y="688.2" width="5.0" height="41.0" fill="#a8a8a8" /><rect x="1072.8" y="688.2" width="5.0" height="41.0" fill="#a8a8a8" /><rect x="1067.8" y="690.2" width="3.0" height="50.0" fill="#8a8a8a" /><rect x="1060.2" y="729.7" width="6.0" height="9.0" fill="#c9343f" /><rect x="1072.2" y="729.7" width="6.0" height="9.0" fill="#c9343f" /><rect x="1051.2" y="744.7" width="33.2" height="3.4" fill="#40d040" /><rect x="1051.2" y="748.7" width="33.2" height="23.0" fill="#666666" /><circle cx="1058.2" cy="754.1600000000001" r="2.6" fill="#3fe05a"/><circle cx="1058.2" cy="764.1600000000001" r="1.3" fill="#3fe05a"/><rect x="1064.2" y="752.1600000000001" width="18.2" height="17" fill="url(#grid4)"/><rect x="1086.5" y="658.2" width="33.2" height="27.5" fill="#b3b3b3" /><rect x="1089.5" y="663.2" width="6.0" height="13.0" fill="#111" /><rect x="1089.5" y="677.2" width="6.0" height="3.0" fill="#eee" /><rect x="1098.5" y="666.1600000000001" width="18.2" height="16" fill="url(#grid4)"/><rect x="1086.5" y="685.7" width="33.2" height="58.0" fill="#525252" /><rect x="1087.5" y="688.1600000000001" width="6" height="52" fill="url(#vgridB)"/><rect x="1096.0" y="688.2" width="5.0" height="41.0" fill="#a8a8a8" /><rect x="1108.0" y="688.2" width="5.0" height="41.0" fill="#a8a8a8" /><rect x="1103.0" y="690.2" width="3.0" height="50.0" fill="#8a8a8a" /><rect x="1095.5" y="729.7" width="6.0" height="9.0" fill="#c9343f" /><rect x="1107.5" y="729.7" width="6.0" height="9.0" fill="#c9343f" /><rect x="1086.5" y="744.7" width="33.2" height="3.4" fill="#40d040" /><rect x="1086.5" y="748.7" width="33.2" height="23.0" fill="#666666" /><circle cx="1093.5" cy="754.1600000000001" r="2.6" fill="#3fe05a"/><circle cx="1093.5" cy="764.1600000000001" r="1.3" fill="#3fe05a"/><rect x="1099.5" y="752.1600000000001" width="18.2" height="17" fill="url(#grid4)"/><rect x="1121.8" y="658.2" width="33.2" height="27.5" fill="#b3b3b3" /><rect x="1124.8" y="663.2" width="6.0" height="13.0" fill="#111" /><rect x="1124.8" y="677.2" width="6.0" height="3.0" fill="#eee" /><rect x="1133.8" y="666.1600000000001" width="18.2" height="16" fill="url(#grid4)"/><rect x="1121.8" y="685.7" width="33.2" height="58.0" fill="#525252" /><rect x="1122.8" y="688.1600000000001" width="6" height="52" fill="url(#vgridB)"/><rect x="1131.2" y="688.2" width="5.0" height="41.0" fill="#a8a8a8" /><rect x="1143.2" y="688.2" width="5.0" height="41.0" fill="#a8a8a8" /><rect x="1138.2" y="690.2" width="3.0" height="50.0" fill="#8a8a8a" /><rect x="1130.8" y="729.7" width="6.0" height="9.0" fill="#c9343f" /><rect x="1142.8" y="729.7" width="6.0" height="9.0" fill="#c9343f" /><rect x="1121.8" y="744.7" width="33.2" height="3.4" fill="#40d040" /><rect x="1121.8" y="748.7" width="33.2" height="23.0" fill="#666666" /><circle cx="1128.8" cy="754.1600000000001" r="2.6" fill="#3fe05a"/><circle cx="1128.8" cy="764.1600000000001" r="1.3" fill="#3fe05a"/><rect x="1134.8" y="752.1600000000001" width="18.2" height="17" fill="url(#grid4)"/><rect x="1157.0" y="658.2" width="33.2" height="27.5" fill="#b3b3b3" /><rect x="1160.0" y="663.2" width="6.0" height="13.0" fill="#111" /><rect x="1160.0" y="677.2" width="6.0" height="3.0" fill="#eee" /><rect x="1169.0" y="666.1600000000001" width="18.2" height="16" fill="url(#grid4)"/><rect x="1157.0" y="685.7" width="33.2" height="58.0" fill="#525252" /><rect x="1158.0" y="688.1600000000001" width="6" height="52" fill="url(#vgridB)"/><rect x="1166.5" y="688.2" width="5.0" height="41.0" fill="#a8a8a8" /><rect x="1178.5" y="688.2" width="5.0" height="41.0" fill="#a8a8a8" /><rect x="1173.5" y="690.2" width="3.0" height="50.0" fill="#8a8a8a" /><rect x="1166.0" y="729.7" width="6.0" height="9.0" fill="#c9343f" /><rect x="1178.0" y="729.7" width="6.0" height="9.0" fill="#c9343f" /><rect x="1157.0" y="744.7" width="33.2" height="3.4" fill="#40d040" /><rect x="1157.0" y="748.7" width="33.2" height="23.0" fill="#666666" /><circle cx="1164.0" cy="754.1600000000001" r="2.6" fill="#3fe05a"/><circle cx="1164.0" cy="764.1600000000001" r="1.3" fill="#3fe05a"/><rect x="1170.0" y="752.1600000000001" width="18.2" height="17" fill="url(#grid4)"/><rect x="1192.2" y="658.2" width="33.2" height="27.5" fill="#b3b3b3" /><rect x="1195.2" y="663.2" width="6.0" height="13.0" fill="#111" /><rect x="1195.2" y="677.2" width="6.0" height="3.0" fill="#eee" /><rect x="1204.2" y="666.1600000000001" width="18.2" height="16" fill="url(#grid4)"/><rect x="1192.2" y="685.7" width="33.2" height="58.0" fill="#525252" /><rect x="1193.2" y="688.1600000000001" width="6" height="52" fill="url(#vgridB)"/><rect x="1201.8" y="688.2" width="5.0" height="41.0" fill="#a8a8a8" /><rect x="1213.8" y="688.2" width="5.0" height="41.0" fill="#a8a8a8" /><rect x="1208.8" y="690.2" width="3.0" height="50.0" fill="#8a8a8a" /><rect x="1201.2" y="729.7" width="6.0" height="9.0" fill="#c9343f" /><rect x="1213.2" y="729.7" width="6.0" height="9.0" fill="#c9343f" /><rect x="1192.2" y="744.7" width="33.2" height="3.4" fill="#40d040" /><rect x="1192.2" y="748.7" width="33.2" height="23.0" fill="#666666" /><circle cx="1199.2" cy="754.1600000000001" r="2.6" fill="#3fe05a"/><circle cx="1199.2" cy="764.1600000000001" r="1.3" fill="#3fe05a"/><rect x="1205.2" y="752.1600000000001" width="18.2" height="17" fill="url(#grid4)"/><rect x="1227.5" y="658.2" width="33.2" height="27.5" fill="#b3b3b3" /><rect x="1230.5" y="663.2" width="6.0" height="13.0" fill="#111" /><rect x="1230.5" y="677.2" width="6.0" height="3.0" fill="#eee" /><rect x="1239.5" y="666.1600000000001" width="18.2" height="16" fill="url(#grid4)"/><rect x="1227.5" y="685.7" width="33.2" height="58.0" fill="#525252" /><rect x="1228.5" y="688.1600000000001" width="6" height="52" fill="url(#vgridB)"/><rect x="1237.0" y="688.2" width="5.0" height="41.0" fill="#a8a8a8" /><rect x="1249.0" y="688.2" width="5.0" height="41.0" fill="#a8a8a8" /><rect x="1244.0" y="690.2" width="3.0" height="50.0" fill="#8a8a8a" /><rect x="1236.5" y="729.7" width="6.0" height="9.0" fill="#c9343f" /><rect x="1248.5" y="729.7" width="6.0" height="9.0" fill="#c9343f" /><rect x="1227.5" y="744.7" width="33.2" height="3.4" fill="#40d040" /><rect x="1227.5" y="748.7" width="33.2" height="23.0" fill="#666666" /><circle cx="1234.5" cy="754.1600000000001" r="2.6" fill="#3fe05a"/><circle cx="1234.5" cy="764.1600000000001" r="1.3" fill="#3fe05a"/><rect x="1240.5" y="752.1600000000001" width="18.2" height="17" fill="url(#grid4)"/><rect x="1262.8" y="658.2" width="33.2" height="27.5" fill="#b3b3b3" /><rect x="1265.8" y="663.2" width="6.0" height="13.0" fill="#111" /><rect x="1265.8" y="677.2" width="6.0" height="3.0" fill="#eee" /><rect x="1274.8" y="666.1600000000001" width="18.2" height="16" fill="url(#grid4)"/><rect x="1262.8" y="685.7" width="33.2" height="58.0" fill="#525252" /><rect x="1263.8" y="688.1600000000001" width="6" height="52" fill="url(#vgridB)"/><rect x="1272.2" y="688.2" width="5.0" height="41.0" fill="#a8a8a8" /><rect x="1284.2" y="688.2" width="5.0" height="41.0" fill="#a8a8a8" /><rect x="1279.2" y="690.2" width="3.0" height="50.0" fill="#8a8a8a" /><rect x="1271.8" y="729.7" width="6.0" height="9.0" fill="#c9343f" /><rect x="1283.8" y="729.7" width="6.0" height="9.0" fill="#c9343f" /><rect x="1262.8" y="744.7" width="33.2" height="3.4" fill="#40d040" /><rect x="1262.8" y="748.7" width="33.2" height="23.0" fill="#666666" /><circle cx="1269.8" cy="754.1600000000001" r="2.6" fill="#3fe05a"/><circle cx="1269.8" cy="764.1600000000001" r="1.3" fill="#3fe05a"/><rect x="1275.8" y="752.1600000000001" width="18.2" height="17" fill="url(#grid4)"/><rect x="1015.0" y="772.2" width="282.0" height="8.5" fill="#747474" /><rect x="1015.0" y="774.2" width="282.0" height="1.5" fill="#bdbdbd" /><rect x="1016.0" y="780.7" width="33.2" height="27.5" fill="#b3b3b3" /><rect x="1019.0" y="785.7" width="6.0" height="13.0" fill="#111" /><rect x="1019.0" y="799.7" width="6.0" height="3.0" fill="#eee" /><rect x="1028.0" y="788.6600000000001" width="18.2" height="16" fill="url(#grid4)"/><rect x="1016.0" y="808.2" width="33.2" height="58.0" fill="#525252" /><rect x="1017.0" y="810.6600000000001" width="6" height="52" fill="url(#vgridB)"/><rect x="1025.5" y="810.7" width="5.0" height="41.0" fill="#a8a8a8" /><rect x="1037.5" y="810.7" width="5.0" height="41.0" fill="#a8a8a8" /><rect x="1032.5" y="812.7" width="3.0" height="50.0" fill="#8a8a8a" /><rect x="1025.0" y="852.2" width="6.0" height="9.0" fill="#c9343f" /><rect x="1037.0" y="852.2" width="6.0" height="9.0" fill="#c9343f" /><rect x="1016.0" y="867.2" width="33.2" height="3.4" fill="#40d040" /><rect x="1016.0" y="871.2" width="33.2" height="23.0" fill="#666666" /><circle cx="1023.0" cy="876.6600000000001" r="2.6" fill="#3fe05a"/><circle cx="1023.0" cy="886.6600000000001" r="1.3" fill="#3fe05a"/><rect x="1029.0" y="874.6600000000001" width="18.2" height="17" fill="url(#grid4)"/><rect x="1051.2" y="780.7" width="33.2" height="27.5" fill="#b3b3b3" /><rect x="1054.2" y="785.7" width="6.0" height="13.0" fill="#111" /><rect x="1054.2" y="799.7" width="6.0" height="3.0" fill="#eee" /><rect x="1063.2" y="788.6600000000001" width="18.2" height="16" fill="url(#grid4)"/><rect x="1051.2" y="808.2" width="33.2" height="58.0" fill="#525252" /><rect x="1052.2" y="810.6600000000001" width="6" height="52" fill="url(#vgridB)"/><rect x="1060.8" y="810.7" width="5.0" height="41.0" fill="#a8a8a8" /><rect x="1072.8" y="810.7" width="5.0" height="41.0" fill="#a8a8a8" /><rect x="1067.8" y="812.7" width="3.0" height="50.0" fill="#8a8a8a" /><rect x="1060.2" y="852.2" width="6.0" height="9.0" fill="#c9343f" /><rect x="1072.2" y="852.2" width="6.0" height="9.0" fill="#c9343f" /><rect x="1051.2" y="867.2" width="33.2" height="3.4" fill="#40d040" /><rect x="1051.2" y="871.2" width="33.2" height="23.0" fill="#666666" /><circle cx="1058.2" cy="876.6600000000001" r="2.6" fill="#3fe05a"/><circle cx="1058.2" cy="886.6600000000001" r="1.3" fill="#3fe05a"/><rect x="1064.2" y="874.6600000000001" width="18.2" height="17" fill="url(#grid4)"/><rect x="1086.5" y="780.7" width="33.2" height="27.5" fill="#b3b3b3" /><rect x="1089.5" y="785.7" width="6.0" height="13.0" fill="#111" /><rect x="1089.5" y="799.7" width="6.0" height="3.0" fill="#eee" /><rect x="1098.5" y="788.6600000000001" width="18.2" height="16" fill="url(#grid4)"/><rect x="1086.5" y="808.2" width="33.2" height="58.0" fill="#525252" /><rect x="1087.5" y="810.6600000000001" width="6" height="52" fill="url(#vgridB)"/><rect x="1096.0" y="810.7" width="5.0" height="41.0" fill="#a8a8a8" /><rect x="1108.0" y="810.7" width="5.0" height="41.0" fill="#a8a8a8" /><rect x="1103.0" y="812.7" width="3.0" height="50.0" fill="#8a8a8a" /><rect x="1095.5" y="852.2" width="6.0" height="9.0" fill="#c9343f" /><rect x="1107.5" y="852.2" width="6.0" height="9.0" fill="#c9343f" /><rect x="1086.5" y="867.2" width="33.2" height="3.4" fill="#40d040" /><rect x="1086.5" y="871.2" width="33.2" height="23.0" fill="#666666" /><circle cx="1093.5" cy="876.6600000000001" r="2.6" fill="#3fe05a"/><circle cx="1093.5" cy="886.6600000000001" r="1.3" fill="#3fe05a"/><rect x="1099.5" y="874.6600000000001" width="18.2" height="17" fill="url(#grid4)"/><rect x="1121.8" y="780.7" width="33.2" height="27.5" fill="#b3b3b3" /><rect x="1124.8" y="785.7" width="6.0" height="13.0" fill="#111" /><rect x="1124.8" y="799.7" width="6.0" height="3.0" fill="#eee" /><rect x="1133.8" y="788.6600000000001" width="18.2" height="16" fill="url(#grid4)"/><rect x="1121.8" y="808.2" width="33.2" height="58.0" fill="#525252" /><rect x="1122.8" y="810.6600000000001" width="6" height="52" fill="url(#vgridB)"/><rect x="1131.2" y="810.7" width="5.0" height="41.0" fill="#a8a8a8" /><rect x="1143.2" y="810.7" width="5.0" height="41.0" fill="#a8a8a8" /><rect x="1138.2" y="812.7" width="3.0" height="50.0" fill="#8a8a8a" /><rect x="1130.8" y="852.2" width="6.0" height="9.0" fill="#c9343f" /><rect x="1142.8" y="852.2" width="6.0" height="9.0" fill="#c9343f" /><rect x="1121.8" y="867.2" width="33.2" height="3.4" fill="#40d040" /><rect x="1121.8" y="871.2" width="33.2" height="23.0" fill="#666666" /><circle cx="1128.8" cy="876.6600000000001" r="2.6" fill="#3fe05a"/><circle cx="1128.8" cy="886.6600000000001" r="1.3" fill="#3fe05a"/><rect x="1134.8" y="874.6600000000001" width="18.2" height="17" fill="url(#grid4)"/><rect x="1157.0" y="780.7" width="33.2" height="27.5" fill="#b3b3b3" /><rect x="1160.0" y="785.7" width="6.0" height="13.0" fill="#111" /><rect x="1160.0" y="799.7" width="6.0" height="3.0" fill="#eee" /><rect x="1169.0" y="788.6600000000001" width="18.2" height="16" fill="url(#grid4)"/><rect x="1157.0" y="808.2" width="33.2" height="58.0" fill="#525252" /><rect x="1158.0" y="810.6600000000001" width="6" height="52" fill="url(#vgridB)"/><rect x="1166.5" y="810.7" width="5.0" height="41.0" fill="#a8a8a8" /><rect x="1178.5" y="810.7" width="5.0" height="41.0" fill="#a8a8a8" /><rect x="1173.5" y="812.7" width="3.0" height="50.0" fill="#8a8a8a" /><rect x="1166.0" y="852.2" width="6.0" height="9.0" fill="#c9343f" /><rect x="1178.0" y="852.2" width="6.0" height="9.0" fill="#c9343f" /><rect x="1157.0" y="867.2" width="33.2" height="3.4" fill="#40d040" /><rect x="1157.0" y="871.2" width="33.2" height="23.0" fill="#666666" /><circle cx="1164.0" cy="876.6600000000001" r="2.6" fill="#3fe05a"/><circle cx="1164.0" cy="886.6600000000001" r="1.3" fill="#3fe05a"/><rect x="1170.0" y="874.6600000000001" width="18.2" height="17" fill="url(#grid4)"/><rect x="1192.2" y="780.7" width="33.2" height="27.5" fill="#b3b3b3" /><rect x="1195.2" y="785.7" width="6.0" height="13.0" fill="#111" /><rect x="1195.2" y="799.7" width="6.0" height="3.0" fill="#eee" /><rect x="1204.2" y="788.6600000000001" width="18.2" height="16" fill="url(#grid4)"/><rect x="1192.2" y="808.2" width="33.2" height="58.0" fill="#525252" /><rect x="1193.2" y="810.6600000000001" width="6" height="52" fill="url(#vgridB)"/><rect x="1201.8" y="810.7" width="5.0" height="41.0" fill="#a8a8a8" /><rect x="1213.8" y="810.7" width="5.0" height="41.0" fill="#a8a8a8" /><rect x="1208.8" y="812.7" width="3.0" height="50.0" fill="#8a8a8a" /><rect x="1201.2" y="852.2" width="6.0" height="9.0" fill="#c9343f" /><rect x="1213.2" y="852.2" width="6.0" height="9.0" fill="#c9343f" /><rect x="1192.2" y="867.2" width="33.2" height="3.4" fill="#40d040" /><rect x="1192.2" y="871.2" width="33.2" height="23.0" fill="#666666" /><circle cx="1199.2" cy="876.6600000000001" r="2.6" fill="#3fe05a"/><circle cx="1199.2" cy="886.6600000000001" r="1.3" fill="#3fe05a"/><rect x="1205.2" y="874.6600000000001" width="18.2" height="17" fill="url(#grid4)"/><rect x="1227.5" y="780.7" width="33.2" height="27.5" fill="#b3b3b3" /><rect x="1230.5" y="785.7" width="6.0" height="13.0" fill="#111" /><rect x="1230.5" y="799.7" width="6.0" height="3.0" fill="#eee" /><rect x="1239.5" y="788.6600000000001" width="18.2" height="16" fill="url(#grid4)"/><rect x="1227.5" y="808.2" width="33.2" height="58.0" fill="#525252" /><rect x="1228.5" y="810.6600000000001" width="6" height="52" fill="url(#vgridB)"/><rect x="1237.0" y="810.7" width="5.0" height="41.0" fill="#a8a8a8" /><rect x="1249.0" y="810.7" width="5.0" height="41.0" fill="#a8a8a8" /><rect x="1244.0" y="812.7" width="3.0" height="50.0" fill="#8a8a8a" /><rect x="1236.5" y="852.2" width="6.0" height="9.0" fill="#c9343f" /><rect x="1248.5" y="852.2" width="6.0" height="9.0" fill="#c9343f" /><rect x="1227.5" y="867.2" width="33.2" height="3.4" fill="#40d040" /><rect x="1227.5" y="871.2" width="33.2" height="23.0" fill="#666666" /><circle cx="1234.5" cy="876.6600000000001" r="2.6" fill="#3fe05a"/><circle cx="1234.5" cy="886.6600000000001" r="1.3" fill="#3fe05a"/><rect x="1240.5" y="874.6600000000001" width="18.2" height="17" fill="url(#grid4)"/><rect x="1262.8" y="780.7" width="33.2" height="27.5" fill="#b3b3b3" /><rect x="1265.8" y="785.7" width="6.0" height="13.0" fill="#111" /><rect x="1265.8" y="799.7" width="6.0" height="3.0" fill="#eee" /><rect x="1274.8" y="788.6600000000001" width="18.2" height="16" fill="url(#grid4)"/><rect x="1262.8" y="808.2" width="33.2" height="58.0" fill="#525252" /><rect x="1263.8" y="810.6600000000001" width="6" height="52" fill="url(#vgridB)"/><rect x="1272.2" y="810.7" width="5.0" height="41.0" fill="#a8a8a8" /><rect x="1284.2" y="810.7" width="5.0" height="41.0" fill="#a8a8a8" /><rect x="1279.2" y="812.7" width="3.0" height="50.0" fill="#8a8a8a" /><rect x="1271.8" y="852.2" width="6.0" height="9.0" fill="#c9343f" /><rect x="1283.8" y="852.2" width="6.0" height="9.0" fill="#c9343f" /><rect x="1262.8" y="867.2" width="33.2" height="3.4" fill="#40d040" /><rect x="1262.8" y="871.2" width="33.2" height="23.0" fill="#666666" /><circle cx="1269.8" cy="876.6600000000001" r="2.6" fill="#3fe05a"/><circle cx="1269.8" cy="886.6600000000001" r="1.3" fill="#3fe05a"/><rect x="1275.8" y="874.6600000000001" width="18.2" height="17" fill="url(#grid4)"/><rect x="1015.0" y="894.7" width="282.0" height="8.5" fill="#747474" /><rect x="1015.0" y="896.7" width="282.0" height="1.5" fill="#bdbdbd" /><rect x="1011.0" y="895.7" width="291.0" height="42.8" fill="#2d2d2d" /><rect x="1011.0" y="895.7" width="291.0" height="4.0" fill="#777" /><rect x="1018" y="903.6600000000001" width="26" height="26" fill="url(#vgrid)"/><rect x="1045.0" y="902.7" width="9.0" height="9.0" fill="#b8333c" /><circle cx="1049" cy="917.6600000000001" r="1.8" fill="#3fe05a"/><circle cx="1049" cy="923.6600000000001" r="1.8" fill="#d9c23a"/><rect x="1064" y="903.6600000000001" width="26" height="26" fill="url(#vgrid)"/><rect x="1091.0" y="902.7" width="9.0" height="9.0" fill="#b8333c" /><circle cx="1095" cy="917.6600000000001" r="1.8" fill="#3fe05a"/><circle cx="1095" cy="923.6600000000001" r="1.8" fill="#d9c23a"/><rect x="1207" y="903.6600000000001" width="27" height="26" fill="url(#vgrid)"/><rect x="1235.0" y="902.7" width="9.0" height="9.0" fill="#b8333c" /><circle cx="1239" cy="917.6600000000001" r="1.8" fill="#3fe05a"/><circle cx="1239" cy="923.6600000000001" r="1.8" fill="#d9c23a"/><rect x="1254" y="903.6600000000001" width="28" height="26" fill="url(#vgrid)"/><rect x="1283.0" y="902.7" width="9.0" height="9.0" fill="#b8333c" /><circle cx="1287" cy="917.6600000000001" r="1.8" fill="#3fe05a"/><circle cx="1287" cy="923.6600000000001" r="1.8" fill="#d9c23a"/><rect x="1107.0" y="900.7" width="97.0" height="37.8" fill="#161616" /><rect x="1111" y="904.6600000000001" width="14" height="26" fill="url(#vgrid)"/><rect x="1128.0" y="904.3" width="42.5" height="29.4" fill="#5fc777" /><rect x="1130.0" y="906.7" width="38.0" height="3.0" fill="#2f7d45" /><rect x="1130.0" y="912.7" width="30.0" height="2.0" fill="#2f7d45" /><rect x="1175.0" y="903.7" width="6.0" height="26.0" fill="#333" /><rect x="1185.0" y="904.7" width="9.0" height="9.0" fill="#b8333c" /><rect x="1015.0" y="933.5" width="283.0" height="3.0" fill="#8a8a8a" /><rect x="1087.0" y="784.0" width="139.4" height="23.4" fill="#7b8c99" stroke="#111" stroke-width="2"/><text x="1156.7" y="801.6" font-size="16.5" fill="#f2f2f2" text-anchor="middle" font-family="Liberation Sans">USNHCTC0001</text><rect x="1000.0" y="938.5" width="313.5" height="57.2" fill="url(#silverH)" /><rect x="1035.0" y="941.3" width="31.0" height="10.6" fill="#1c1c1c" /><rect x="1035.0" y="982.7" width="31.0" height="11.4" fill="#0f0f0f" /><rect x="1071.0" y="941.3" width="51.0" height="10.6" fill="#1c1c1c" /><rect x="1071.0" y="982.7" width="51.0" height="11.4" fill="#0f0f0f" /><rect x="1127.5" y="941.3" width="62.5" height="10.6" fill="#1c1c1c" /><rect x="1127.5" y="982.7" width="62.5" height="11.4" fill="#0f0f0f" /><rect x="1195.0" y="941.3" width="49.5" height="10.6" fill="#1c1c1c" /><rect x="1195.0" y="982.7" width="49.5" height="11.4" fill="#0f0f0f" /><rect x="1250.5" y="941.3" width="29.5" height="10.6" fill="#1c1c1c" /><rect x="1250.5" y="982.7" width="29.5" height="11.4" fill="#0f0f0f" /><path d="M1030 951.86 L1040 951.86 L1018 966.46 Z" fill="#9a9a9a"/><rect x="1017" y="956.46" width="19" height="18" rx="5" fill="#333"/><circle cx="1030" cy="965.46" r="6" fill="#222"/><rect x="1036.0" y="951.9" width="30.0" height="30.8" fill="#e4e4e4" /><rect x="1250.0" y="951.9" width="45.0" height="30.8" fill="#b5b5b5" /><rect x="1205.0" y="942.5" width="45.0" height="4.0" fill="#666" /><rect x="1065.0" y="955.4" width="183.0" height="23.4" fill="#7b8c99" stroke="#111" stroke-width="2"/><text x="1156.5" y="973.0" font-size="16.5" fill="#f2f2f2" text-anchor="middle" font-family="Liberation Sans">esxi-016.device42.pvt</text><rect x="1000.0" y="995.6" width="313.5" height="28.6" fill="url(#silver)" stroke="#1b1b1b" stroke-width="1.2"/><rect x="1017.0" y="996.6" width="14.0" height="26.6" fill="#f6f6f6" /><rect x="1000.0" y="995.6" width="16.5" height="28.6" fill="url(#ear)" stroke="#1b1b1b" stroke-width="1.2"/><ellipse cx="1008.2" cy="1002.8" rx="3.2" ry="2.6" fill="none" stroke="#222" stroke-width="1.6"/><ellipse cx="1008.2" cy="1017.1" rx="3.2" ry="2.6" fill="none" stroke="#222" stroke-width="1.6"/><rect x="1297.0" y="995.6" width="16.5" height="28.6" fill="url(#ear)" stroke="#1b1b1b" stroke-width="1.2"/><ellipse cx="1305.2" cy="1002.8" rx="3.2" ry="2.6" fill="none" stroke="#222" stroke-width="1.6"/><ellipse cx="1305.2" cy="1017.1" rx="3.2" ry="2.6" fill="none" stroke="#222" stroke-width="1.6"/><rect x="1032" y="1001.9" width="65" height="6.3" fill="#ececec" stroke="#222" stroke-width="1.8"/><rect x="1032" y="1013.3" width="65" height="6.3" fill="#ececec" stroke="#222" stroke-width="1.8"/><rect x="1238.5" y="998.6200000000001" width="50" height="20.6" fill="none" stroke="#a8a8a8" stroke-width="1.5"/><rect x="1251.5" y="1000.6200000000001" width="10" height="15.6" fill="none" stroke="#b5b5b5" stroke-width="1.2"/><rect x="1030" y="1019.2" width="238.5" height="1" fill="#9a9a9a"/><rect x="1210.5" y="1004.2" width="38.0" height="8.0" fill="#3aa35a" stroke="#1a1a1a" stroke-width="1.2"/><rect x="1208.5" y="1013.3" width="45" height="4.3" fill="#444" rx="2"/><rect x="1065.0" y="998.9" width="183.0" height="22.8" fill="#7b8c99" stroke="#111" stroke-width="2"/><text x="1156.5" y="1016.2" font-size="16.5" fill="#f2f2f2" text-anchor="middle" font-family="Liberation Sans">esxi-004.device42.pvt</text><rect x="1000.0" y="1024.2" width="313.5" height="57.2" fill="url(#silver)" stroke="#1b1b1b" stroke-width="1.2"/><rect x="1017.0" y="1025.2" width="14.0" height="55.2" fill="#f6f6f6" /><rect x="1000.0" y="1024.2" width="16.5" height="57.2" fill="url(#ear)" stroke="#1b1b1b" stroke-width="1.2"/><ellipse cx="1008.2" cy="1031.3" rx="3.2" ry="2.6" fill="none" stroke="#222" stroke-width="1.6"/><ellipse cx="1008.2" cy="1045.6" rx="3.2" ry="2.6" fill="none" stroke="#222" stroke-width="1.6"/><ellipse cx="1008.2" cy="1059.9" rx="3.2" ry="2.6" fill="none" stroke="#222" stroke-width="1.6"/><ellipse cx="1008.2" cy="1074.2" rx="3.2" ry="2.6" fill="none" stroke="#222" stroke-width="1.6"/><rect x="1297.0" y="1024.2" width="16.5" height="57.2" fill="url(#ear)" stroke="#1b1b1b" stroke-width="1.2"/><ellipse cx="1305.2" cy="1031.3" rx="3.2" ry="2.6" fill="none" stroke="#222" stroke-width="1.6"/><ellipse cx="1305.2" cy="1045.6" rx="3.2" ry="2.6" fill="none" stroke="#222" stroke-width="1.6"/><ellipse cx="1305.2" cy="1059.9" rx="3.2" ry="2.6" fill="none" stroke="#222" stroke-width="1.6"/><ellipse cx="1305.2" cy="1074.2" rx="3.2" ry="2.6" fill="none" stroke="#222" stroke-width="1.6"/><rect x="1032" y="1033.2" width="125" height="11" fill="#efefef" stroke="#222" stroke-width="2"/><rect x="1032" y="1052.2" width="72" height="11" fill="#efefef" stroke="#222" stroke-width="2"/><rect x="1165" y="1030.2" width="118" height="37" fill="#d8d8d8" stroke="#aaa" stroke-width="1.2"/><rect x="1211.0" y="1039.2" width="39.0" height="10.0" fill="#3f9a62" stroke="#1a1a1a" stroke-width="1.5"/><rect x="1209" y="1052.2" width="7" height="5" rx="2" fill="#333"/><rect x="1218" y="1052.2" width="7" height="5" rx="2" fill="#333"/><rect x="1227" y="1052.2" width="7" height="5" rx="2" fill="#333"/><rect x="1236" y="1052.2" width="7" height="5" rx="2" fill="#333"/><rect x="1245" y="1052.2" width="7" height="5" rx="2" fill="#333"/><rect x="1032" y="1072.4" width="250" height="1.2" fill="#999"/><rect x="1104.4" y="1041.3" width="104.0" height="23.2" fill="#7b8c99" stroke="#111" stroke-width="2"/><text x="1156.4" y="1058.8" font-size="16.5" fill="#f2f2f2" text-anchor="middle" font-family="Liberation Sans">esxi-90-0-6</text><rect x="1000.0" y="1109.9" width="313.5" height="371.5" fill="#525d6a" /><rect x="1005.6" y="1114.7" width="149.2" height="86.6" rx="6" fill="#3b4452" stroke="#2a313b" stroke-width="2"/><rect x="1010.6" y="1127.7" width="37" height="20" rx="3" fill="#151515"/><rect x="1014.6" y="1150.7" width="30" height="10" rx="2" fill="#1d1d1d"/><rect x="1014.6" y="1162.7" width="30" height="10" rx="2" fill="#1d1d1d"/><rect x="1010.6" y="1174.7" width="37" height="20" rx="3" fill="#151515"/><path d="M1059.6 1154.7 L1085.6 1126.7 H1125.6 L1143.6 1144.7 V1196.7 H1059.6 Z" fill="url(#psugrid)"/><line x1="1067.6" y1="1189.7" x2="1133.6" y2="1132.7" stroke="#0b0b0b" stroke-width="7" stroke-linecap="round"/><line x1="1124.6" y1="1135.7" x2="1133.6" y2="1130.7" stroke="#cfd2d4" stroke-width="4" stroke-linecap="round"/><rect x="1122.6" y="1182.7" width="20.0" height="12.0" fill="#77c98a" /><circle cx="1025.6" cy="1120.7" r="4" fill="url(#screwW)"/><circle cx="1135.6" cy="1120.7" r="4" fill="url(#screwW)"/><circle cx="1051.6" cy="1133.7" r="1.8" fill="#d33"/><circle cx="1051.6" cy="1139.7" r="1.8" fill="#3d3"/><rect x="1159.0" y="1114.7" width="149.2" height="86.6" rx="6" fill="#3b4452" stroke="#2a313b" stroke-width="2"/><rect x="1164.0" y="1127.7" width="37" height="20" rx="3" fill="#151515"/><rect x="1168.0" y="1150.7" width="30" height="10" rx="2" fill="#1d1d1d"/><rect x="1168.0" y="1162.7" width="30" height="10" rx="2" fill="#1d1d1d"/><rect x="1164.0" y="1174.7" width="37" height="20" rx="3" fill="#151515"/><path d="M1213.0 1154.7 L1239.0 1126.7 H1279.0 L1297.0 1144.7 V1196.7 H1213.0 Z" fill="url(#psugrid)"/><line x1="1221.0" y1="1189.7" x2="1287.0" y2="1132.7" stroke="#0b0b0b" stroke-width="7" stroke-linecap="round"/><line x1="1278.0" y1="1135.7" x2="1287.0" y2="1130.7" stroke="#cfd2d4" stroke-width="4" stroke-linecap="round"/><rect x="1276.0" y="1182.7" width="20.0" height="12.0" fill="#77c98a" /><circle cx="1179.0" cy="1120.7" r="4" fill="url(#screwW)"/><circle cx="1289.0" cy="1120.7" r="4" fill="url(#screwW)"/><circle cx="1205.0" cy="1133.7" r="1.8" fill="#d33"/><circle cx="1205.0" cy="1139.7" r="1.8" fill="#3d3"/><rect x="1059.0" y="1202.4" width="31.0" height="8.5" fill="#d6c53a" /><circle cx="1150" cy="1205.94" r="3.5" fill="url(#screwW)"/><rect x="1000.0" y="1211.9" width="26.0" height="269.5" fill="#3c4551" /><circle cx="1012.5" cy="1217.94" r="3.5" fill="url(#screwW)"/><circle cx="1012.5" cy="1475.48" r="3.5" fill="url(#screwW)"/><rect x="1007.0" y="1319.9" width="6.0" height="60.0" fill="#222" /><rect x="1026.0" y="1471.0" width="287.5" height="10.5" fill="#3d4652" /><rect x="1026.0" y="1471.0" width="287.5" height="1.5" fill="#6a737d" /><rect x="1026.7" y="1211.9" width="276.0" height="17.2" fill="#58626f" /><rect x="1026.7" y="1211.9" width="276.0" height="1.4" fill="#8a949e" /><rect x="1026.7" y="1227.8" width="276.0" height="1.4" fill="#7b858f" /><circle cx="1039" cy="1221.2" r="4" fill="url(#screwW)"/><rect x="1062.0" y="1220.2" width="10.0" height="5.5" fill="#0d0d0d" /><rect x="1059" y="1214.9" width="16" height="11.4" fill="none" stroke="#7c8590" stroke-width="0.8"/><rect x="1080.0" y="1220.2" width="10.0" height="5.5" fill="#0d0d0d" /><rect x="1077" y="1214.9" width="16" height="11.4" fill="none" stroke="#7c8590" stroke-width="0.8"/><rect x="1098.0" y="1220.2" width="10.0" height="5.5" fill="#0d0d0d" /><rect x="1095" y="1214.9" width="16" height="11.4" fill="none" stroke="#7c8590" stroke-width="0.8"/><rect x="1119.0" y="1220.2" width="10.0" height="5.5" fill="#0d0d0d" /><rect x="1116" y="1214.9" width="16" height="11.4" fill="none" stroke="#7c8590" stroke-width="0.8"/><rect x="1137.0" y="1220.2" width="10.0" height="5.5" fill="#0d0d0d" /><rect x="1134" y="1214.9" width="16" height="11.4" fill="none" stroke="#7c8590" stroke-width="0.8"/><rect x="1155.0" y="1220.2" width="10.0" height="5.5" fill="#0d0d0d" /><rect x="1152" y="1214.9" width="16" height="11.4" fill="none" stroke="#7c8590" stroke-width="0.8"/><rect x="1176.0" y="1220.2" width="10.0" height="5.5" fill="#0d0d0d" /><rect x="1173" y="1214.9" width="16" height="11.4" fill="none" stroke="#7c8590" stroke-width="0.8"/><rect x="1194.0" y="1220.2" width="10.0" height="5.5" fill="#0d0d0d" /><rect x="1191" y="1214.9" width="16" height="11.4" fill="none" stroke="#7c8590" stroke-width="0.8"/><rect x="1212.0" y="1220.2" width="10.0" height="5.5" fill="#0d0d0d" /><rect x="1209" y="1214.9" width="16" height="11.4" fill="none" stroke="#7c8590" stroke-width="0.8"/><rect x="1233.0" y="1220.2" width="10.0" height="5.5" fill="#0d0d0d" /><rect x="1230" y="1214.9" width="16" height="11.4" fill="none" stroke="#7c8590" stroke-width="0.8"/><rect x="1251.0" y="1220.2" width="10.0" height="5.5" fill="#0d0d0d" /><rect x="1248" y="1214.9" width="16" height="11.4" fill="none" stroke="#7c8590" stroke-width="0.8"/><rect x="1269.0" y="1220.2" width="10.0" height="5.5" fill="#0d0d0d" /><rect x="1266" y="1214.9" width="16" height="11.4" fill="none" stroke="#7c8590" stroke-width="0.8"/><rect x="1026.7" y="1230.4" width="276.0" height="17.2" fill="#58626f" /><rect x="1026.7" y="1230.4" width="276.0" height="1.4" fill="#8a949e" /><rect x="1026.7" y="1246.2" width="276.0" height="1.4" fill="#7b858f" /><circle cx="1039" cy="1239.6" r="4" fill="url(#screwW)"/><rect x="1062.0" y="1238.6" width="10.0" height="5.5" fill="#0d0d0d" /><rect x="1059" y="1233.4" width="16" height="11.4" fill="none" stroke="#7c8590" stroke-width="0.8"/><rect x="1080.0" y="1238.6" width="10.0" height="5.5" fill="#0d0d0d" /><rect x="1077" y="1233.4" width="16" height="11.4" fill="none" stroke="#7c8590" stroke-width="0.8"/><rect x="1098.0" y="1238.6" width="10.0" height="5.5" fill="#0d0d0d" /><rect x="1095" y="1233.4" width="16" height="11.4" fill="none" stroke="#7c8590" stroke-width="0.8"/><rect x="1119.0" y="1238.6" width="10.0" height="5.5" fill="#0d0d0d" /><rect x="1116" y="1233.4" width="16" height="11.4" fill="none" stroke="#7c8590" stroke-width="0.8"/><rect x="1137.0" y="1238.6" width="10.0" height="5.5" fill="#0d0d0d" /><rect x="1134" y="1233.4" width="16" height="11.4" fill="none" stroke="#7c8590" stroke-width="0.8"/><rect x="1155.0" y="1238.6" width="10.0" height="5.5" fill="#0d0d0d" /><rect x="1152" y="1233.4" width="16" height="11.4" fill="none" stroke="#7c8590" stroke-width="0.8"/><rect x="1176.0" y="1238.6" width="10.0" height="5.5" fill="#0d0d0d" /><rect x="1173" y="1233.4" width="16" height="11.4" fill="none" stroke="#7c8590" stroke-width="0.8"/><rect x="1194.0" y="1238.6" width="10.0" height="5.5" fill="#0d0d0d" /><rect x="1191" y="1233.4" width="16" height="11.4" fill="none" stroke="#7c8590" stroke-width="0.8"/><rect x="1212.0" y="1238.6" width="10.0" height="5.5" fill="#0d0d0d" /><rect x="1209" y="1233.4" width="16" height="11.4" fill="none" stroke="#7c8590" stroke-width="0.8"/><rect x="1233.0" y="1238.6" width="10.0" height="5.5" fill="#0d0d0d" /><rect x="1230" y="1233.4" width="16" height="11.4" fill="none" stroke="#7c8590" stroke-width="0.8"/><rect x="1251.0" y="1238.6" width="10.0" height="5.5" fill="#0d0d0d" /><rect x="1248" y="1233.4" width="16" height="11.4" fill="none" stroke="#7c8590" stroke-width="0.8"/><rect x="1269.0" y="1238.6" width="10.0" height="5.5" fill="#0d0d0d" /><rect x="1266" y="1233.4" width="16" height="11.4" fill="none" stroke="#7c8590" stroke-width="0.8"/><rect x="1026.7" y="1248.8" width="276.0" height="17.2" fill="#58626f" /><rect x="1026.7" y="1248.8" width="276.0" height="1.4" fill="#8a949e" /><rect x="1026.7" y="1264.7" width="276.0" height="1.4" fill="#7b858f" /><circle cx="1039" cy="1258.1" r="4" fill="url(#screwW)"/><rect x="1062.0" y="1257.1" width="10.0" height="5.5" fill="#0d0d0d" /><rect x="1059" y="1251.8" width="16" height="11.4" fill="none" stroke="#7c8590" stroke-width="0.8"/><rect x="1080.0" y="1257.1" width="10.0" height="5.5" fill="#0d0d0d" /><rect x="1077" y="1251.8" width="16" height="11.4" fill="none" stroke="#7c8590" stroke-width="0.8"/><rect x="1098.0" y="1257.1" width="10.0" height="5.5" fill="#0d0d0d" /><rect x="1095" y="1251.8" width="16" height="11.4" fill="none" stroke="#7c8590" stroke-width="0.8"/><rect x="1119.0" y="1257.1" width="10.0" height="5.5" fill="#0d0d0d" /><rect x="1116" y="1251.8" width="16" height="11.4" fill="none" stroke="#7c8590" stroke-width="0.8"/><rect x="1137.0" y="1257.1" width="10.0" height="5.5" fill="#0d0d0d" /><rect x="1134" y="1251.8" width="16" height="11.4" fill="none" stroke="#7c8590" stroke-width="0.8"/><rect x="1155.0" y="1257.1" width="10.0" height="5.5" fill="#0d0d0d" /><rect x="1152" y="1251.8" width="16" height="11.4" fill="none" stroke="#7c8590" stroke-width="0.8"/><rect x="1176.0" y="1257.1" width="10.0" height="5.5" fill="#0d0d0d" /><rect x="1173" y="1251.8" width="16" height="11.4" fill="none" stroke="#7c8590" stroke-width="0.8"/><rect x="1194.0" y="1257.1" width="10.0" height="5.5" fill="#0d0d0d" /><rect x="1191" y="1251.8" width="16" height="11.4" fill="none" stroke="#7c8590" stroke-width="0.8"/><rect x="1212.0" y="1257.1" width="10.0" height="5.5" fill="#0d0d0d" /><rect x="1209" y="1251.8" width="16" height="11.4" fill="none" stroke="#7c8590" stroke-width="0.8"/><rect x="1233.0" y="1257.1" width="10.0" height="5.5" fill="#0d0d0d" /><rect x="1230" y="1251.8" width="16" height="11.4" fill="none" stroke="#7c8590" stroke-width="0.8"/><rect x="1251.0" y="1257.1" width="10.0" height="5.5" fill="#0d0d0d" /><rect x="1248" y="1251.8" width="16" height="11.4" fill="none" stroke="#7c8590" stroke-width="0.8"/><rect x="1269.0" y="1257.1" width="10.0" height="5.5" fill="#0d0d0d" /><rect x="1266" y="1251.8" width="16" height="11.4" fill="none" stroke="#7c8590" stroke-width="0.8"/><rect x="1026.7" y="1267.3" width="276.0" height="17.2" fill="#58626f" /><rect x="1026.7" y="1267.3" width="276.0" height="1.4" fill="#8a949e" /><rect x="1026.7" y="1283.1" width="276.0" height="1.4" fill="#7b858f" /><circle cx="1039" cy="1276.5" r="4" fill="url(#screwW)"/><rect x="1062.0" y="1275.5" width="10.0" height="5.5" fill="#0d0d0d" /><rect x="1059" y="1270.3" width="16" height="11.4" fill="none" stroke="#7c8590" stroke-width="0.8"/><rect x="1080.0" y="1275.5" width="10.0" height="5.5" fill="#0d0d0d" /><rect x="1077" y="1270.3" width="16" height="11.4" fill="none" stroke="#7c8590" stroke-width="0.8"/><rect x="1098.0" y="1275.5" width="10.0" height="5.5" fill="#0d0d0d" /><rect x="1095" y="1270.3" width="16" height="11.4" fill="none" stroke="#7c8590" stroke-width="0.8"/><rect x="1119.0" y="1275.5" width="10.0" height="5.5" fill="#0d0d0d" /><rect x="1116" y="1270.3" width="16" height="11.4" fill="none" stroke="#7c8590" stroke-width="0.8"/><rect x="1137.0" y="1275.5" width="10.0" height="5.5" fill="#0d0d0d" /><rect x="1134" y="1270.3" width="16" height="11.4" fill="none" stroke="#7c8590" stroke-width="0.8"/><rect x="1155.0" y="1275.5" width="10.0" height="5.5" fill="#0d0d0d" /><rect x="1152" y="1270.3" width="16" height="11.4" fill="none" stroke="#7c8590" stroke-width="0.8"/><rect x="1176.0" y="1275.5" width="10.0" height="5.5" fill="#0d0d0d" /><rect x="1173" y="1270.3" width="16" height="11.4" fill="none" stroke="#7c8590" stroke-width="0.8"/><rect x="1194.0" y="1275.5" width="10.0" height="5.5" fill="#0d0d0d" /><rect x="1191" y="1270.3" width="16" height="11.4" fill="none" stroke="#7c8590" stroke-width="0.8"/><rect x="1212.0" y="1275.5" width="10.0" height="5.5" fill="#0d0d0d" /><rect x="1209" y="1270.3" width="16" height="11.4" fill="none" stroke="#7c8590" stroke-width="0.8"/><rect x="1233.0" y="1275.5" width="10.0" height="5.5" fill="#0d0d0d" /><rect x="1230" y="1270.3" width="16" height="11.4" fill="none" stroke="#7c8590" stroke-width="0.8"/><rect x="1251.0" y="1275.5" width="10.0" height="5.5" fill="#0d0d0d" /><rect x="1248" y="1270.3" width="16" height="11.4" fill="none" stroke="#7c8590" stroke-width="0.8"/><rect x="1269.0" y="1275.5" width="10.0" height="5.5" fill="#0d0d0d" /><rect x="1266" y="1270.3" width="16" height="11.4" fill="none" stroke="#7c8590" stroke-width="0.8"/><rect x="1026.7" y="1285.7" width="276.0" height="17.2" fill="#58626f" /><rect x="1026.7" y="1285.7" width="276.0" height="1.4" fill="#8a949e" /><rect x="1026.7" y="1301.6" width="276.0" height="1.4" fill="#7b858f" /><circle cx="1039" cy="1295.0" r="4" fill="url(#screwW)"/><rect x="1062.0" y="1294.0" width="10.0" height="5.5" fill="#0d0d0d" /><rect x="1059" y="1288.7" width="16" height="11.4" fill="none" stroke="#7c8590" stroke-width="0.8"/><rect x="1080.0" y="1294.0" width="10.0" height="5.5" fill="#0d0d0d" /><rect x="1077" y="1288.7" width="16" height="11.4" fill="none" stroke="#7c8590" stroke-width="0.8"/><rect x="1098.0" y="1294.0" width="10.0" height="5.5" fill="#0d0d0d" /><rect x="1095" y="1288.7" width="16" height="11.4" fill="none" stroke="#7c8590" stroke-width="0.8"/><rect x="1119.0" y="1294.0" width="10.0" height="5.5" fill="#0d0d0d" /><rect x="1116" y="1288.7" width="16" height="11.4" fill="none" stroke="#7c8590" stroke-width="0.8"/><rect x="1137.0" y="1294.0" width="10.0" height="5.5" fill="#0d0d0d" /><rect x="1134" y="1288.7" width="16" height="11.4" fill="none" stroke="#7c8590" stroke-width="0.8"/><rect x="1155.0" y="1294.0" width="10.0" height="5.5" fill="#0d0d0d" /><rect x="1152" y="1288.7" width="16" height="11.4" fill="none" stroke="#7c8590" stroke-width="0.8"/><rect x="1176.0" y="1294.0" width="10.0" height="5.5" fill="#0d0d0d" /><rect x="1173" y="1288.7" width="16" height="11.4" fill="none" stroke="#7c8590" stroke-width="0.8"/><rect x="1194.0" y="1294.0" width="10.0" height="5.5" fill="#0d0d0d" /><rect x="1191" y="1288.7" width="16" height="11.4" fill="none" stroke="#7c8590" stroke-width="0.8"/><rect x="1212.0" y="1294.0" width="10.0" height="5.5" fill="#0d0d0d" /><rect x="1209" y="1288.7" width="16" height="11.4" fill="none" stroke="#7c8590" stroke-width="0.8"/><rect x="1233.0" y="1294.0" width="10.0" height="5.5" fill="#0d0d0d" /><rect x="1230" y="1288.7" width="16" height="11.4" fill="none" stroke="#7c8590" stroke-width="0.8"/><rect x="1251.0" y="1294.0" width="10.0" height="5.5" fill="#0d0d0d" /><rect x="1248" y="1288.7" width="16" height="11.4" fill="none" stroke="#7c8590" stroke-width="0.8"/><rect x="1269.0" y="1294.0" width="10.0" height="5.5" fill="#0d0d0d" /><rect x="1266" y="1288.7" width="16" height="11.4" fill="none" stroke="#7c8590" stroke-width="0.8"/><rect x="1026.7" y="1304.2" width="276.0" height="17.2" fill="#58626f" /><rect x="1026.7" y="1304.2" width="276.0" height="1.4" fill="#8a949e" /><rect x="1026.7" y="1320.0" width="276.0" height="1.4" fill="#7b858f" /><circle cx="1039" cy="1313.4" r="4" fill="url(#screwW)"/><rect x="1062.0" y="1312.4" width="10.0" height="5.5" fill="#0d0d0d" /><rect x="1059" y="1307.2" width="16" height="11.4" fill="none" stroke="#7c8590" stroke-width="0.8"/><rect x="1080.0" y="1312.4" width="10.0" height="5.5" fill="#0d0d0d" /><rect x="1077" y="1307.2" width="16" height="11.4" fill="none" stroke="#7c8590" stroke-width="0.8"/><rect x="1098.0" y="1312.4" width="10.0" height="5.5" fill="#0d0d0d" /><rect x="1095" y="1307.2" width="16" height="11.4" fill="none" stroke="#7c8590" stroke-width="0.8"/><rect x="1119.0" y="1312.4" width="10.0" height="5.5" fill="#0d0d0d" /><rect x="1116" y="1307.2" width="16" height="11.4" fill="none" stroke="#7c8590" stroke-width="0.8"/><rect x="1137.0" y="1312.4" width="10.0" height="5.5" fill="#0d0d0d" /><rect x="1134" y="1307.2" width="16" height="11.4" fill="none" stroke="#7c8590" stroke-width="0.8"/><rect x="1155.0" y="1312.4" width="10.0" height="5.5" fill="#0d0d0d" /><rect x="1152" y="1307.2" width="16" height="11.4" fill="none" stroke="#7c8590" stroke-width="0.8"/><rect x="1176.0" y="1312.4" width="10.0" height="5.5" fill="#0d0d0d" /><rect x="1173" y="1307.2" width="16" height="11.4" fill="none" stroke="#7c8590" stroke-width="0.8"/><rect x="1194.0" y="1312.4" width="10.0" height="5.5" fill="#0d0d0d" /><rect x="1191" y="1307.2" width="16" height="11.4" fill="none" stroke="#7c8590" stroke-width="0.8"/><rect x="1212.0" y="1312.4" width="10.0" height="5.5" fill="#0d0d0d" /><rect x="1209" y="1307.2" width="16" height="11.4" fill="none" stroke="#7c8590" stroke-width="0.8"/><rect x="1233.0" y="1312.4" width="10.0" height="5.5" fill="#0d0d0d" /><rect x="1230" y="1307.2" width="16" height="11.4" fill="none" stroke="#7c8590" stroke-width="0.8"/><rect x="1251.0" y="1312.4" width="10.0" height="5.5" fill="#0d0d0d" /><rect x="1248" y="1307.2" width="16" height="11.4" fill="none" stroke="#7c8590" stroke-width="0.8"/><rect x="1269.0" y="1312.4" width="10.0" height="5.5" fill="#0d0d0d" /><rect x="1266" y="1307.2" width="16" height="11.4" fill="none" stroke="#7c8590" stroke-width="0.8"/><rect x="1026.7" y="1322.6" width="276.0" height="17.2" fill="#58626f" /><rect x="1026.7" y="1322.6" width="276.0" height="1.4" fill="#8a949e" /><rect x="1026.7" y="1338.5" width="276.0" height="1.4" fill="#7b858f" /><circle cx="1039" cy="1331.9" r="4" fill="url(#screwW)"/><rect x="1062.0" y="1330.9" width="10.0" height="5.5" fill="#0d0d0d" /><rect x="1059" y="1325.6" width="16" height="11.4" fill="none" stroke="#7c8590" stroke-width="0.8"/><rect x="1080.0" y="1330.9" width="10.0" height="5.5" fill="#0d0d0d" /><rect x="1077" y="1325.6" width="16" height="11.4" fill="none" stroke="#7c8590" stroke-width="0.8"/><rect x="1098.0" y="1330.9" width="10.0" height="5.5" fill="#0d0d0d" /><rect x="1095" y="1325.6" width="16" height="11.4" fill="none" stroke="#7c8590" stroke-width="0.8"/><rect x="1119.0" y="1330.9" width="10.0" height="5.5" fill="#0d0d0d" /><rect x="1116" y="1325.6" width="16" height="11.4" fill="none" stroke="#7c8590" stroke-width="0.8"/><rect x="1137.0" y="1330.9" width="10.0" height="5.5" fill="#0d0d0d" /><rect x="1134" y="1325.6" width="16" height="11.4" fill="none" stroke="#7c8590" stroke-width="0.8"/><rect x="1155.0" y="1330.9" width="10.0" height="5.5" fill="#0d0d0d" /><rect x="1152" y="1325.6" width="16" height="11.4" fill="none" stroke="#7c8590" stroke-width="0.8"/><rect x="1176.0" y="1330.9" width="10.0" height="5.5" fill="#0d0d0d" /><rect x="1173" y="1325.6" width="16" height="11.4" fill="none" stroke="#7c8590" stroke-width="0.8"/><rect x="1194.0" y="1330.9" width="10.0" height="5.5" fill="#0d0d0d" /><rect x="1191" y="1325.6" width="16" height="11.4" fill="none" stroke="#7c8590" stroke-width="0.8"/><rect x="1212.0" y="1330.9" width="10.0" height="5.5" fill="#0d0d0d" /><rect x="1209" y="1325.6" width="16" height="11.4" fill="none" stroke="#7c8590" stroke-width="0.8"/><rect x="1233.0" y="1330.9" width="10.0" height="5.5" fill="#0d0d0d" /><rect x="1230" y="1325.6" width="16" height="11.4" fill="none" stroke="#7c8590" stroke-width="0.8"/><rect x="1251.0" y="1330.9" width="10.0" height="5.5" fill="#0d0d0d" /><rect x="1248" y="1325.6" width="16" height="11.4" fill="none" stroke="#7c8590" stroke-width="0.8"/><rect x="1269.0" y="1330.9" width="10.0" height="5.5" fill="#0d0d0d" /><rect x="1266" y="1325.6" width="16" height="11.4" fill="none" stroke="#7c8590" stroke-width="0.8"/><rect x="1026.7" y="1341.1" width="276.0" height="17.2" fill="#58626f" /><rect x="1026.7" y="1341.1" width="276.0" height="1.4" fill="#8a949e" /><rect x="1026.7" y="1356.9" width="276.0" height="1.4" fill="#7b858f" /><circle cx="1039" cy="1350.3" r="4" fill="url(#screwW)"/><rect x="1062.0" y="1349.3" width="10.0" height="5.5" fill="#0d0d0d" /><rect x="1059" y="1344.1" width="16" height="11.4" fill="none" stroke="#7c8590" stroke-width="0.8"/><rect x="1080.0" y="1349.3" width="10.0" height="5.5" fill="#0d0d0d" /><rect x="1077" y="1344.1" width="16" height="11.4" fill="none" stroke="#7c8590" stroke-width="0.8"/><rect x="1098.0" y="1349.3" width="10.0" height="5.5" fill="#0d0d0d" /><rect x="1095" y="1344.1" width="16" height="11.4" fill="none" stroke="#7c8590" stroke-width="0.8"/><rect x="1119.0" y="1349.3" width="10.0" height="5.5" fill="#0d0d0d" /><rect x="1116" y="1344.1" width="16" height="11.4" fill="none" stroke="#7c8590" stroke-width="0.8"/><rect x="1137.0" y="1349.3" width="10.0" height="5.5" fill="#0d0d0d" /><rect x="1134" y="1344.1" width="16" height="11.4" fill="none" stroke="#7c8590" stroke-width="0.8"/><rect x="1155.0" y="1349.3" width="10.0" height="5.5" fill="#0d0d0d" /><rect x="1152" y="1344.1" width="16" height="11.4" fill="none" stroke="#7c8590" stroke-width="0.8"/><rect x="1176.0" y="1349.3" width="10.0" height="5.5" fill="#0d0d0d" /><rect x="1173" y="1344.1" width="16" height="11.4" fill="none" stroke="#7c8590" stroke-width="0.8"/><rect x="1194.0" y="1349.3" width="10.0" height="5.5" fill="#0d0d0d" /><rect x="1191" y="1344.1" width="16" height="11.4" fill="none" stroke="#7c8590" stroke-width="0.8"/><rect x="1212.0" y="1349.3" width="10.0" height="5.5" fill="#0d0d0d" /><rect x="1209" y="1344.1" width="16" height="11.4" fill="none" stroke="#7c8590" stroke-width="0.8"/><rect x="1233.0" y="1349.3" width="10.0" height="5.5" fill="#0d0d0d" /><rect x="1230" y="1344.1" width="16" height="11.4" fill="none" stroke="#7c8590" stroke-width="0.8"/><rect x="1251.0" y="1349.3" width="10.0" height="5.5" fill="#0d0d0d" /><rect x="1248" y="1344.1" width="16" height="11.4" fill="none" stroke="#7c8590" stroke-width="0.8"/><rect x="1269.0" y="1349.3" width="10.0" height="5.5" fill="#0d0d0d" /><rect x="1266" y="1344.1" width="16" height="11.4" fill="none" stroke="#7c8590" stroke-width="0.8"/><rect x="1026.7" y="1359.5" width="276.0" height="17.2" fill="#58626f" /><rect x="1026.7" y="1359.5" width="276.0" height="1.4" fill="#8a949e" /><rect x="1026.7" y="1375.4" width="276.0" height="1.4" fill="#7b858f" /><circle cx="1039" cy="1368.8" r="4" fill="url(#screwW)"/><rect x="1062.0" y="1367.8" width="10.0" height="5.5" fill="#0d0d0d" /><rect x="1059" y="1362.5" width="16" height="11.4" fill="none" stroke="#7c8590" stroke-width="0.8"/><rect x="1080.0" y="1367.8" width="10.0" height="5.5" fill="#0d0d0d" /><rect x="1077" y="1362.5" width="16" height="11.4" fill="none" stroke="#7c8590" stroke-width="0.8"/><rect x="1098.0" y="1367.8" width="10.0" height="5.5" fill="#0d0d0d" /><rect x="1095" y="1362.5" width="16" height="11.4" fill="none" stroke="#7c8590" stroke-width="0.8"/><rect x="1119.0" y="1367.8" width="10.0" height="5.5" fill="#0d0d0d" /><rect x="1116" y="1362.5" width="16" height="11.4" fill="none" stroke="#7c8590" stroke-width="0.8"/><rect x="1137.0" y="1367.8" width="10.0" height="5.5" fill="#0d0d0d" /><rect x="1134" y="1362.5" width="16" height="11.4" fill="none" stroke="#7c8590" stroke-width="0.8"/><rect x="1155.0" y="1367.8" width="10.0" height="5.5" fill="#0d0d0d" /><rect x="1152" y="1362.5" width="16" height="11.4" fill="none" stroke="#7c8590" stroke-width="0.8"/><rect x="1176.0" y="1367.8" width="10.0" height="5.5" fill="#0d0d0d" /><rect x="1173" y="1362.5" width="16" height="11.4" fill="none" stroke="#7c8590" stroke-width="0.8"/><rect x="1194.0" y="1367.8" width="10.0" height="5.5" fill="#0d0d0d" /><rect x="1191" y="1362.5" width="16" height="11.4" fill="none" stroke="#7c8590" stroke-width="0.8"/><rect x="1212.0" y="1367.8" width="10.0" height="5.5" fill="#0d0d0d" /><rect x="1209" y="1362.5" width="16" height="11.4" fill="none" stroke="#7c8590" stroke-width="0.8"/><rect x="1233.0" y="1367.8" width="10.0" height="5.5" fill="#0d0d0d" /><rect x="1230" y="1362.5" width="16" height="11.4" fill="none" stroke="#7c8590" stroke-width="0.8"/><rect x="1251.0" y="1367.8" width="10.0" height="5.5" fill="#0d0d0d" /><rect x="1248" y="1362.5" width="16" height="11.4" fill="none" stroke="#7c8590" stroke-width="0.8"/><rect x="1269.0" y="1367.8" width="10.0" height="5.5" fill="#0d0d0d" /><rect x="1266" y="1362.5" width="16" height="11.4" fill="none" stroke="#7c8590" stroke-width="0.8"/><rect x="1026.7" y="1378.0" width="276.0" height="17.2" fill="#58626f" /><rect x="1026.7" y="1378.0" width="276.0" height="1.4" fill="#8a949e" /><rect x="1026.7" y="1393.8" width="276.0" height="1.4" fill="#7b858f" /><circle cx="1039" cy="1387.2" r="4" fill="url(#screwW)"/><rect x="1062.0" y="1386.2" width="10.0" height="5.5" fill="#0d0d0d" /><rect x="1059" y="1381.0" width="16" height="11.4" fill="none" stroke="#7c8590" stroke-width="0.8"/><rect x="1080.0" y="1386.2" width="10.0" height="5.5" fill="#0d0d0d" /><rect x="1077" y="1381.0" width="16" height="11.4" fill="none" stroke="#7c8590" stroke-width="0.8"/><rect x="1098.0" y="1386.2" width="10.0" height="5.5" fill="#0d0d0d" /><rect x="1095" y="1381.0" width="16" height="11.4" fill="none" stroke="#7c8590" stroke-width="0.8"/><rect x="1119.0" y="1386.2" width="10.0" height="5.5" fill="#0d0d0d" /><rect x="1116" y="1381.0" width="16" height="11.4" fill="none" stroke="#7c8590" stroke-width="0.8"/><rect x="1137.0" y="1386.2" width="10.0" height="5.5" fill="#0d0d0d" /><rect x="1134" y="1381.0" width="16" height="11.4" fill="none" stroke="#7c8590" stroke-width="0.8"/><rect x="1155.0" y="1386.2" width="10.0" height="5.5" fill="#0d0d0d" /><rect x="1152" y="1381.0" width="16" height="11.4" fill="none" stroke="#7c8590" stroke-width="0.8"/><rect x="1176.0" y="1386.2" width="10.0" height="5.5" fill="#0d0d0d" /><rect x="1173" y="1381.0" width="16" height="11.4" fill="none" stroke="#7c8590" stroke-width="0.8"/><rect x="1194.0" y="1386.2" width="10.0" height="5.5" fill="#0d0d0d" /><rect x="1191" y="1381.0" width="16" height="11.4" fill="none" stroke="#7c8590" stroke-width="0.8"/><rect x="1212.0" y="1386.2" width="10.0" height="5.5" fill="#0d0d0d" /><rect x="1209" y="1381.0" width="16" height="11.4" fill="none" stroke="#7c8590" stroke-width="0.8"/><rect x="1233.0" y="1386.2" width="10.0" height="5.5" fill="#0d0d0d" /><rect x="1230" y="1381.0" width="16" height="11.4" fill="none" stroke="#7c8590" stroke-width="0.8"/><rect x="1251.0" y="1386.2" width="10.0" height="5.5" fill="#0d0d0d" /><rect x="1248" y="1381.0" width="16" height="11.4" fill="none" stroke="#7c8590" stroke-width="0.8"/><rect x="1269.0" y="1386.2" width="10.0" height="5.5" fill="#0d0d0d" /><rect x="1266" y="1381.0" width="16" height="11.4" fill="none" stroke="#7c8590" stroke-width="0.8"/><rect x="1026.7" y="1396.4" width="276.0" height="17.2" fill="#58626f" /><rect x="1026.7" y="1396.4" width="276.0" height="1.4" fill="#8a949e" /><rect x="1026.7" y="1412.3" width="276.0" height="1.4" fill="#7b858f" /><circle cx="1039" cy="1405.7" r="4" fill="url(#screwW)"/><rect x="1062.0" y="1404.7" width="10.0" height="5.5" fill="#0d0d0d" /><rect x="1059" y="1399.4" width="16" height="11.4" fill="none" stroke="#7c8590" stroke-width="0.8"/><rect x="1080.0" y="1404.7" width="10.0" height="5.5" fill="#0d0d0d" /><rect x="1077" y="1399.4" width="16" height="11.4" fill="none" stroke="#7c8590" stroke-width="0.8"/><rect x="1098.0" y="1404.7" width="10.0" height="5.5" fill="#0d0d0d" /><rect x="1095" y="1399.4" width="16" height="11.4" fill="none" stroke="#7c8590" stroke-width="0.8"/><rect x="1119.0" y="1404.7" width="10.0" height="5.5" fill="#0d0d0d" /><rect x="1116" y="1399.4" width="16" height="11.4" fill="none" stroke="#7c8590" stroke-width="0.8"/><rect x="1137.0" y="1404.7" width="10.0" height="5.5" fill="#0d0d0d" /><rect x="1134" y="1399.4" width="16" height="11.4" fill="none" stroke="#7c8590" stroke-width="0.8"/><rect x="1155.0" y="1404.7" width="10.0" height="5.5" fill="#0d0d0d" /><rect x="1152" y="1399.4" width="16" height="11.4" fill="none" stroke="#7c8590" stroke-width="0.8"/><rect x="1176.0" y="1404.7" width="10.0" height="5.5" fill="#0d0d0d" /><rect x="1173" y="1399.4" width="16" height="11.4" fill="none" stroke="#7c8590" stroke-width="0.8"/><rect x="1194.0" y="1404.7" width="10.0" height="5.5" fill="#0d0d0d" /><rect x="1191" y="1399.4" width="16" height="11.4" fill="none" stroke="#7c8590" stroke-width="0.8"/><rect x="1212.0" y="1404.7" width="10.0" height="5.5" fill="#0d0d0d" /><rect x="1209" y="1399.4" width="16" height="11.4" fill="none" stroke="#7c8590" stroke-width="0.8"/><rect x="1233.0" y="1404.7" width="10.0" height="5.5" fill="#0d0d0d" /><rect x="1230" y="1399.4" width="16" height="11.4" fill="none" stroke="#7c8590" stroke-width="0.8"/><rect x="1251.0" y="1404.7" width="10.0" height="5.5" fill="#0d0d0d" /><rect x="1248" y="1399.4" width="16" height="11.4" fill="none" stroke="#7c8590" stroke-width="0.8"/><rect x="1269.0" y="1404.7" width="10.0" height="5.5" fill="#0d0d0d" /><rect x="1266" y="1399.4" width="16" height="11.4" fill="none" stroke="#7c8590" stroke-width="0.8"/><rect x="1026.7" y="1414.9" width="276.0" height="17.2" fill="#58626f" /><rect x="1026.7" y="1414.9" width="276.0" height="1.4" fill="#8a949e" /><rect x="1026.7" y="1430.7" width="276.0" height="1.4" fill="#7b858f" /><circle cx="1039" cy="1424.1" r="4" fill="url(#screwW)"/><rect x="1062.0" y="1423.1" width="10.0" height="5.5" fill="#0d0d0d" /><rect x="1059" y="1417.9" width="16" height="11.4" fill="none" stroke="#7c8590" stroke-width="0.8"/><rect x="1080.0" y="1423.1" width="10.0" height="5.5" fill="#0d0d0d" /><rect x="1077" y="1417.9" width="16" height="11.4" fill="none" stroke="#7c8590" stroke-width="0.8"/><rect x="1098.0" y="1423.1" width="10.0" height="5.5" fill="#0d0d0d" /><rect x="1095" y="1417.9" width="16" height="11.4" fill="none" stroke="#7c8590" stroke-width="0.8"/><rect x="1119.0" y="1423.1" width="10.0" height="5.5" fill="#0d0d0d" /><rect x="1116" y="1417.9" width="16" height="11.4" fill="none" stroke="#7c8590" stroke-width="0.8"/><rect x="1137.0" y="1423.1" width="10.0" height="5.5" fill="#0d0d0d" /><rect x="1134" y="1417.9" width="16" height="11.4" fill="none" stroke="#7c8590" stroke-width="0.8"/><rect x="1155.0" y="1423.1" width="10.0" height="5.5" fill="#0d0d0d" /><rect x="1152" y="1417.9" width="16" height="11.4" fill="none" stroke="#7c8590" stroke-width="0.8"/><rect x="1176.0" y="1423.1" width="10.0" height="5.5" fill="#0d0d0d" /><rect x="1173" y="1417.9" width="16" height="11.4" fill="none" stroke="#7c8590" stroke-width="0.8"/><rect x="1194.0" y="1423.1" width="10.0" height="5.5" fill="#0d0d0d" /><rect x="1191" y="1417.9" width="16" height="11.4" fill="none" stroke="#7c8590" stroke-width="0.8"/><rect x="1212.0" y="1423.1" width="10.0" height="5.5" fill="#0d0d0d" /><rect x="1209" y="1417.9" width="16" height="11.4" fill="none" stroke="#7c8590" stroke-width="0.8"/><rect x="1233.0" y="1423.1" width="10.0" height="5.5" fill="#0d0d0d" /><rect x="1230" y="1417.9" width="16" height="11.4" fill="none" stroke="#7c8590" stroke-width="0.8"/><rect x="1251.0" y="1423.1" width="10.0" height="5.5" fill="#0d0d0d" /><rect x="1248" y="1417.9" width="16" height="11.4" fill="none" stroke="#7c8590" stroke-width="0.8"/><rect x="1269.0" y="1423.1" width="10.0" height="5.5" fill="#0d0d0d" /><rect x="1266" y="1417.9" width="16" height="11.4" fill="none" stroke="#7c8590" stroke-width="0.8"/><rect x="1026.7" y="1433.3" width="276.0" height="17.2" fill="#58626f" /><rect x="1026.7" y="1433.3" width="276.0" height="1.4" fill="#8a949e" /><rect x="1026.7" y="1449.2" width="276.0" height="1.4" fill="#7b858f" /><circle cx="1039" cy="1442.6" r="4" fill="url(#screwW)"/><rect x="1062.0" y="1441.6" width="10.0" height="5.5" fill="#0d0d0d" /><rect x="1059" y="1436.3" width="16" height="11.4" fill="none" stroke="#7c8590" stroke-width="0.8"/><rect x="1080.0" y="1441.6" width="10.0" height="5.5" fill="#0d0d0d" /><rect x="1077" y="1436.3" width="16" height="11.4" fill="none" stroke="#7c8590" stroke-width="0.8"/><rect x="1098.0" y="1441.6" width="10.0" height="5.5" fill="#0d0d0d" /><rect x="1095" y="1436.3" width="16" height="11.4" fill="none" stroke="#7c8590" stroke-width="0.8"/><rect x="1119.0" y="1441.6" width="10.0" height="5.5" fill="#0d0d0d" /><rect x="1116" y="1436.3" width="16" height="11.4" fill="none" stroke="#7c8590" stroke-width="0.8"/><rect x="1137.0" y="1441.6" width="10.0" height="5.5" fill="#0d0d0d" /><rect x="1134" y="1436.3" width="16" height="11.4" fill="none" stroke="#7c8590" stroke-width="0.8"/><rect x="1155.0" y="1441.6" width="10.0" height="5.5" fill="#0d0d0d" /><rect x="1152" y="1436.3" width="16" height="11.4" fill="none" stroke="#7c8590" stroke-width="0.8"/><rect x="1176.0" y="1441.6" width="10.0" height="5.5" fill="#0d0d0d" /><rect x="1173" y="1436.3" width="16" height="11.4" fill="none" stroke="#7c8590" stroke-width="0.8"/><rect x="1194.0" y="1441.6" width="10.0" height="5.5" fill="#0d0d0d" /><rect x="1191" y="1436.3" width="16" height="11.4" fill="none" stroke="#7c8590" stroke-width="0.8"/><rect x="1212.0" y="1441.6" width="10.0" height="5.5" fill="#0d0d0d" /><rect x="1209" y="1436.3" width="16" height="11.4" fill="none" stroke="#7c8590" stroke-width="0.8"/><rect x="1233.0" y="1441.6" width="10.0" height="5.5" fill="#0d0d0d" /><rect x="1230" y="1436.3" width="16" height="11.4" fill="none" stroke="#7c8590" stroke-width="0.8"/><rect x="1251.0" y="1441.6" width="10.0" height="5.5" fill="#0d0d0d" /><rect x="1248" y="1436.3" width="16" height="11.4" fill="none" stroke="#7c8590" stroke-width="0.8"/><rect x="1269.0" y="1441.6" width="10.0" height="5.5" fill="#0d0d0d" /><rect x="1266" y="1436.3" width="16" height="11.4" fill="none" stroke="#7c8590" stroke-width="0.8"/><rect x="1026.7" y="1451.8" width="276.0" height="17.2" fill="#58626f" /><rect x="1026.7" y="1451.8" width="276.0" height="1.4" fill="#8a949e" /><rect x="1026.7" y="1467.6" width="276.0" height="1.4" fill="#7b858f" /><circle cx="1039" cy="1461.0" r="4" fill="url(#screwW)"/><rect x="1062.0" y="1460.0" width="10.0" height="5.5" fill="#0d0d0d" /><rect x="1059" y="1454.8" width="16" height="11.4" fill="none" stroke="#7c8590" stroke-width="0.8"/><rect x="1080.0" y="1460.0" width="10.0" height="5.5" fill="#0d0d0d" /><rect x="1077" y="1454.8" width="16" height="11.4" fill="none" stroke="#7c8590" stroke-width="0.8"/><rect x="1098.0" y="1460.0" width="10.0" height="5.5" fill="#0d0d0d" /><rect x="1095" y="1454.8" width="16" height="11.4" fill="none" stroke="#7c8590" stroke-width="0.8"/><rect x="1119.0" y="1460.0" width="10.0" height="5.5" fill="#0d0d0d" /><rect x="1116" y="1454.8" width="16" height="11.4" fill="none" stroke="#7c8590" stroke-width="0.8"/><rect x="1137.0" y="1460.0" width="10.0" height="5.5" fill="#0d0d0d" /><rect x="1134" y="1454.8" width="16" height="11.4" fill="none" stroke="#7c8590" stroke-width="0.8"/><rect x="1155.0" y="1460.0" width="10.0" height="5.5" fill="#0d0d0d" /><rect x="1152" y="1454.8" width="16" height="11.4" fill="none" stroke="#7c8590" stroke-width="0.8"/><rect x="1176.0" y="1460.0" width="10.0" height="5.5" fill="#0d0d0d" /><rect x="1173" y="1454.8" width="16" height="11.4" fill="none" stroke="#7c8590" stroke-width="0.8"/><rect x="1194.0" y="1460.0" width="10.0" height="5.5" fill="#0d0d0d" /><rect x="1191" y="1454.8" width="16" height="11.4" fill="none" stroke="#7c8590" stroke-width="0.8"/><rect x="1212.0" y="1460.0" width="10.0" height="5.5" fill="#0d0d0d" /><rect x="1209" y="1454.8" width="16" height="11.4" fill="none" stroke="#7c8590" stroke-width="0.8"/><rect x="1233.0" y="1460.0" width="10.0" height="5.5" fill="#0d0d0d" /><rect x="1230" y="1454.8" width="16" height="11.4" fill="none" stroke="#7c8590" stroke-width="0.8"/><rect x="1251.0" y="1460.0" width="10.0" height="5.5" fill="#0d0d0d" /><rect x="1248" y="1454.8" width="16" height="11.4" fill="none" stroke="#7c8590" stroke-width="0.8"/><rect x="1269.0" y="1460.0" width="10.0" height="5.5" fill="#0d0d0d" /><rect x="1266" y="1454.8" width="16" height="11.4" fill="none" stroke="#7c8590" stroke-width="0.8"/><rect x="1302.7" y="1211.9" width="10.8" height="258.3" fill="#55b865" /><circle cx="1308" cy="1222.1" r="3.2" fill="#d8d8d8"/><circle cx="1308" cy="1213.9" r="1.6" fill="#d4b43a"/><circle cx="1308" cy="1240.5" r="3.2" fill="#d8d8d8"/><circle cx="1308" cy="1232.4" r="1.6" fill="#d4b43a"/><circle cx="1308" cy="1259.0" r="3.2" fill="#d8d8d8"/><circle cx="1308" cy="1250.8" r="1.6" fill="#d4b43a"/><circle cx="1308" cy="1277.4" r="3.2" fill="#d8d8d8"/><circle cx="1308" cy="1269.3" r="1.6" fill="#d4b43a"/><circle cx="1308" cy="1295.9" r="3.2" fill="#d8d8d8"/><circle cx="1308" cy="1287.7" r="1.6" fill="#d4b43a"/><circle cx="1308" cy="1314.3" r="3.2" fill="#d8d8d8"/><circle cx="1308" cy="1306.2" r="1.6" fill="#d4b43a"/><circle cx="1308" cy="1332.8" r="3.2" fill="#d8d8d8"/><circle cx="1308" cy="1324.6" r="1.6" fill="#d4b43a"/><circle cx="1308" cy="1351.2" r="3.2" fill="#d8d8d8"/><circle cx="1308" cy="1343.1" r="1.6" fill="#d4b43a"/><circle cx="1308" cy="1369.7" r="3.2" fill="#d8d8d8"/><circle cx="1308" cy="1361.5" r="1.6" fill="#d4b43a"/><circle cx="1308" cy="1388.1" r="3.2" fill="#d8d8d8"/><circle cx="1308" cy="1380.0" r="1.6" fill="#d4b43a"/><circle cx="1308" cy="1406.6" r="3.2" fill="#d8d8d8"/><circle cx="1308" cy="1398.4" r="1.6" fill="#d4b43a"/><circle cx="1308" cy="1425.0" r="3.2" fill="#d8d8d8"/><circle cx="1308" cy="1416.9" r="1.6" fill="#d4b43a"/><circle cx="1308" cy="1443.5" r="3.2" fill="#d8d8d8"/><circle cx="1308" cy="1435.3" r="1.6" fill="#d4b43a"/><circle cx="1308" cy="1461.9" r="3.2" fill="#d8d8d8"/><circle cx="1308" cy="1453.8" r="1.6" fill="#d4b43a"/><rect x="1089.0" y="1283.6" width="134.0" height="23.9" fill="#7b8c99" stroke="#111" stroke-width="2"/><text x="1156.0" y="1301.5" font-size="16.5" fill="#f2f2f2" text-anchor="middle" font-family="Liberation Sans">NHCTCORE01</text><rect x="1000.0" y="1481.5" width="313.5" height="28.6" fill="url(#silver)" stroke="#1b1b1b" stroke-width="1.2"/><rect x="1017.0" y="1482.5" width="14.0" height="26.6" fill="#f6f6f6" /><rect x="1000.0" y="1481.5" width="16.5" height="28.6" fill="url(#ear)" stroke="#1b1b1b" stroke-width="1.2"/><ellipse cx="1008.2" cy="1488.6" rx="3.2" ry="2.6" fill="none" stroke="#222" stroke-width="1.6"/><ellipse cx="1008.2" cy="1502.9" rx="3.2" ry="2.6" fill="none" stroke="#222" stroke-width="1.6"/><rect x="1297.0" y="1481.5" width="16.5" height="28.6" fill="url(#ear)" stroke="#1b1b1b" stroke-width="1.2"/><ellipse cx="1305.2" cy="1488.6" rx="3.2" ry="2.6" fill="none" stroke="#222" stroke-width="1.6"/><ellipse cx="1305.2" cy="1502.9" rx="3.2" ry="2.6" fill="none" stroke="#222" stroke-width="1.6"/><rect x="1032" y="1487.8" width="65" height="6.3" fill="#ececec" stroke="#222" stroke-width="1.8"/><rect x="1032" y="1499.2" width="65" height="6.3" fill="#ececec" stroke="#222" stroke-width="1.8"/><rect x="1238.5" y="1484.48" width="50" height="20.6" fill="none" stroke="#a8a8a8" stroke-width="1.5"/><rect x="1251.5" y="1486.48" width="10" height="15.6" fill="none" stroke="#b5b5b5" stroke-width="1.2"/><rect x="1030" y="1505.1" width="238.5" height="1" fill="#9a9a9a"/><rect x="1210.5" y="1490.1" width="38.0" height="8.0" fill="#3aa35a" stroke="#1a1a1a" stroke-width="1.2"/><rect x="1208.5" y="1499.2" width="45" height="4.3" fill="#444" rx="2"/><rect x="1096.5" y="1483.8" width="119.9" height="23.7" fill="#7b8c99" stroke="#111" stroke-width="2"/><text x="1156.5" y="1501.6" font-size="16.5" fill="#f2f2f2" text-anchor="middle" font-family="Liberation Sans">nh-hyperv-02</text><rect x="1002.0" y="1512.0" width="309.0" height="223.7" fill="#8d887f" /><rect x="1002.0" y="1512.0" width="20.0" height="223.7" fill="#9a958c" /><rect x="1293.0" y="1512.0" width="18.0" height="223.7" fill="#9c978e" /><ellipse cx="1010" cy="1542" rx="3" ry="2" fill="#111"/><ellipse cx="1302" cy="1542" rx="3" ry="2" fill="#111"/><ellipse cx="1010" cy="1578" rx="3" ry="2" fill="#111"/><ellipse cx="1302" cy="1578" rx="3" ry="2" fill="#111"/><ellipse cx="1010" cy="1614" rx="3" ry="2" fill="#111"/><ellipse cx="1302" cy="1614" rx="3" ry="2" fill="#111"/><ellipse cx="1010" cy="1650" rx="3" ry="2" fill="#111"/><ellipse cx="1302" cy="1650" rx="3" ry="2" fill="#111"/><ellipse cx="1010" cy="1686" rx="3" ry="2" fill="#111"/><ellipse cx="1302" cy="1686" rx="3" ry="2" fill="#111"/><rect x="1004.0" y="1684.0" width="14.0" height="51.7" fill="#151515" /><rect x="1297.0" y="1684.0" width="12.0" height="51.7" fill="#151515" /><rect x="1008.0" y="1690.0" width="6.0" height="7.0" fill="#d8d8d8" /><rect x="1301.0" y="1690.0" width="6.0" height="7.0" fill="#d8d8d8" /><rect x="1008.0" y="1703.0" width="6.0" height="7.0" fill="#d8d8d8" /><rect x="1301.0" y="1703.0" width="6.0" height="7.0" fill="#d8d8d8" /><rect x="1008.0" y="1716.0" width="6.0" height="7.0" fill="#d8d8d8" /><rect x="1301.0" y="1716.0" width="6.0" height="7.0" fill="#d8d8d8" /><rect x="1008.0" y="1729.0" width="6.0" height="7.0" fill="#d8d8d8" /><rect x="1301.0" y="1729.0" width="6.0" height="7.0" fill="#d8d8d8" /><rect x="1026.0" y="1515.0" width="132.0" height="44.0" fill="#a7a196" /><rect x="1030.0" y="1518.0" width="42.0" height="13.0" fill="#c9c3b7" /><rect x="1072.0" y="1519.0" width="8.0" height="11.0" fill="#111" /><rect x="1084" y="1518" width="22" height="14" fill="url(#hexbeige)"/><rect x="1108.0" y="1518.0" width="46.0" height="13.0" fill="#c6c0b4" /><rect x="1118.0" y="1519.0" width="7.0" height="11.0" fill="#111" /><rect x="1140.0" y="1519.0" width="7.0" height="11.0" fill="#111" /><path d="M1028 1530 L1154 1533 V1541 H1088 L1076 1550 H1028 Z" fill="url(#hexbeige)"/><rect x="1048" y="1535" width="38" height="18" rx="3" fill="#2c4853"/><rect x="1050" y="1537" width="14" height="12" rx="2" fill="#36555f"/><circle cx="1088" cy="1542" r="3.8" fill="#d6d6d6" stroke="#555" stroke-width="0.8"/><rect x="1092.0" y="1543.0" width="60.0" height="11.0" fill="#c3bdb1" /><ellipse cx="1124" cy="1548.5" rx="10" ry="2.6" fill="#333"/><rect x="1026.0" y="1558.0" width="132.0" height="2.0" fill="#6e6a62" /><rect x="1165.0" y="1515.0" width="132.0" height="44.0" fill="#a7a196" /><rect x="1169.0" y="1518.0" width="42.0" height="13.0" fill="#c9c3b7" /><rect x="1211.0" y="1519.0" width="8.0" height="11.0" fill="#111" /><rect x="1223" y="1518" width="22" height="14" fill="url(#hexbeige)"/><rect x="1247.0" y="1518.0" width="46.0" height="13.0" fill="#c6c0b4" /><rect x="1257.0" y="1519.0" width="7.0" height="11.0" fill="#111" /><rect x="1279.0" y="1519.0" width="7.0" height="11.0" fill="#111" /><path d="M1167 1530 L1293 1533 V1541 H1227 L1215 1550 H1167 Z" fill="url(#hexbeige)"/><rect x="1187" y="1535" width="38" height="18" rx="3" fill="#2c4853"/><rect x="1189" y="1537" width="14" height="12" rx="2" fill="#36555f"/><circle cx="1227" cy="1542" r="3.8" fill="#d6d6d6" stroke="#555" stroke-width="0.8"/><rect x="1231.0" y="1543.0" width="60.0" height="11.0" fill="#c3bdb1" /><ellipse cx="1263" cy="1548.5" rx="10" ry="2.6" fill="#333"/><rect x="1165.0" y="1558.0" width="132.0" height="2.0" fill="#6e6a62" /><rect x="1026.0" y="1561.0" width="132.0" height="44.0" fill="#a7a196" /><rect x="1030.0" y="1564.0" width="42.0" height="13.0" fill="#c9c3b7" /><rect x="1072.0" y="1565.0" width="8.0" height="11.0" fill="#111" /><rect x="1084" y="1564" width="22" height="14" fill="url(#hexbeige)"/><rect x="1108.0" y="1564.0" width="46.0" height="13.0" fill="#c6c0b4" /><rect x="1118.0" y="1565.0" width="7.0" height="11.0" fill="#111" /><rect x="1140.0" y="1565.0" width="7.0" height="11.0" fill="#111" /><path d="M1028 1576 L1154 1579 V1587 H1088 L1076 1596 H1028 Z" fill="url(#hexbeige)"/><rect x="1048" y="1581" width="38" height="18" rx="3" fill="#2c4853"/><rect x="1050" y="1583" width="14" height="12" rx="2" fill="#36555f"/><circle cx="1088" cy="1588" r="3.8" fill="#d6d6d6" stroke="#555" stroke-width="0.8"/><rect x="1092.0" y="1589.0" width="60.0" height="11.0" fill="#c3bdb1" /><ellipse cx="1124" cy="1594.5" rx="10" ry="2.6" fill="#333"/><rect x="1026.0" y="1604.0" width="132.0" height="2.0" fill="#6e6a62" /><rect x="1165.0" y="1561.0" width="132.0" height="44.0" fill="#a7a196" /><rect x="1169.0" y="1564.0" width="42.0" height="13.0" fill="#c9c3b7" /><rect x="1211.0" y="1565.0" width="8.0" height="11.0" fill="#111" /><rect x="1223" y="1564" width="22" height="14" fill="url(#hexbeige)"/><rect x="1247.0" y="1564.0" width="46.0" height="13.0" fill="#c6c0b4" /><rect x="1257.0" y="1565.0" width="7.0" height="11.0" fill="#111" /><rect x="1279.0" y="1565.0" width="7.0" height="11.0" fill="#111" /><path d="M1167 1576 L1293 1579 V1587 H1227 L1215 1596 H1167 Z" fill="url(#hexbeige)"/><rect x="1187" y="1581" width="38" height="18" rx="3" fill="#2c4853"/><rect x="1189" y="1583" width="14" height="12" rx="2" fill="#36555f"/><circle cx="1227" cy="1588" r="3.8" fill="#d6d6d6" stroke="#555" stroke-width="0.8"/><rect x="1231.0" y="1589.0" width="60.0" height="11.0" fill="#c3bdb1" /><ellipse cx="1263" cy="1594.5" rx="10" ry="2.6" fill="#333"/><rect x="1165.0" y="1604.0" width="132.0" height="2.0" fill="#6e6a62" /><rect x="1026.0" y="1607.0" width="132.0" height="44.0" fill="#a7a196" /><rect x="1030.0" y="1610.0" width="42.0" height="13.0" fill="#c9c3b7" /><rect x="1072.0" y="1611.0" width="8.0" height="11.0" fill="#111" /><rect x="1084" y="1610" width="22" height="14" fill="url(#hexbeige)"/><rect x="1108.0" y="1610.0" width="46.0" height="13.0" fill="#c6c0b4" /><rect x="1118.0" y="1611.0" width="7.0" height="11.0" fill="#111" /><rect x="1140.0" y="1611.0" width="7.0" height="11.0" fill="#111" /><path d="M1028 1622 L1154 1625 V1633 H1088 L1076 1642 H1028 Z" fill="url(#hexbeige)"/><rect x="1048" y="1627" width="38" height="18" rx="3" fill="#2c4853"/><rect x="1050" y="1629" width="14" height="12" rx="2" fill="#36555f"/><circle cx="1088" cy="1634" r="3.8" fill="#d6d6d6" stroke="#555" stroke-width="0.8"/><rect x="1092.0" y="1635.0" width="60.0" height="11.0" fill="#c3bdb1" /><ellipse cx="1124" cy="1640.5" rx="10" ry="2.6" fill="#333"/><rect x="1026.0" y="1650.0" width="132.0" height="2.0" fill="#6e6a62" /><rect x="1165.0" y="1607.0" width="132.0" height="44.0" fill="#a7a196" /><rect x="1169.0" y="1610.0" width="42.0" height="13.0" fill="#c9c3b7" /><rect x="1211.0" y="1611.0" width="8.0" height="11.0" fill="#111" /><rect x="1223" y="1610" width="22" height="14" fill="url(#hexbeige)"/><rect x="1247.0" y="1610.0" width="46.0" height="13.0" fill="#c6c0b4" /><rect x="1257.0" y="1611.0" width="7.0" height="11.0" fill="#111" /><rect x="1279.0" y="1611.0" width="7.0" height="11.0" fill="#111" /><path d="M1167 1622 L1293 1625 V1633 H1227 L1215 1642 H1167 Z" fill="url(#hexbeige)"/><rect x="1187" y="1627" width="38" height="18" rx="3" fill="#2c4853"/><rect x="1189" y="1629" width="14" height="12" rx="2" fill="#36555f"/><circle cx="1227" cy="1634" r="3.8" fill="#d6d6d6" stroke="#555" stroke-width="0.8"/><rect x="1231.0" y="1635.0" width="60.0" height="11.0" fill="#c3bdb1" /><ellipse cx="1263" cy="1640.5" rx="10" ry="2.6" fill="#333"/><rect x="1165.0" y="1650.0" width="132.0" height="2.0" fill="#6e6a62" /><rect x="1026.0" y="1653.0" width="132.0" height="44.0" fill="#a7a196" /><rect x="1030.0" y="1656.0" width="42.0" height="13.0" fill="#c9c3b7" /><rect x="1072.0" y="1657.0" width="8.0" height="11.0" fill="#111" /><rect x="1084" y="1656" width="22" height="14" fill="url(#hexbeige)"/><rect x="1108.0" y="1656.0" width="46.0" height="13.0" fill="#c6c0b4" /><rect x="1118.0" y="1657.0" width="7.0" height="11.0" fill="#111" /><rect x="1140.0" y="1657.0" width="7.0" height="11.0" fill="#111" /><path d="M1028 1668 L1154 1671 V1679 H1088 L1076 1688 H1028 Z" fill="url(#hexbeige)"/><rect x="1048" y="1673" width="38" height="18" rx="3" fill="#2c4853"/><rect x="1050" y="1675" width="14" height="12" rx="2" fill="#36555f"/><circle cx="1088" cy="1680" r="3.8" fill="#d6d6d6" stroke="#555" stroke-width="0.8"/><rect x="1092.0" y="1681.0" width="60.0" height="11.0" fill="#c3bdb1" /><ellipse cx="1124" cy="1686.5" rx="10" ry="2.6" fill="#333"/><rect x="1026.0" y="1696.0" width="132.0" height="2.0" fill="#6e6a62" /><rect x="1165.0" y="1653.0" width="132.0" height="44.0" fill="#a7a196" /><rect x="1169.0" y="1656.0" width="42.0" height="13.0" fill="#c9c3b7" /><rect x="1211.0" y="1657.0" width="8.0" height="11.0" fill="#111" /><rect x="1223" y="1656" width="22" height="14" fill="url(#hexbeige)"/><rect x="1247.0" y="1656.0" width="46.0" height="13.0" fill="#c6c0b4" /><rect x="1257.0" y="1657.0" width="7.0" height="11.0" fill="#111" /><rect x="1279.0" y="1657.0" width="7.0" height="11.0" fill="#111" /><path d="M1167 1668 L1293 1671 V1679 H1227 L1215 1688 H1167 Z" fill="url(#hexbeige)"/><rect x="1187" y="1673" width="38" height="18" rx="3" fill="#2c4853"/><rect x="1189" y="1675" width="14" height="12" rx="2" fill="#36555f"/><circle cx="1227" cy="1680" r="3.8" fill="#d6d6d6" stroke="#555" stroke-width="0.8"/><rect x="1231.0" y="1681.0" width="60.0" height="11.0" fill="#c3bdb1" /><ellipse cx="1263" cy="1686.5" rx="10" ry="2.6" fill="#333"/><rect x="1165.0" y="1696.0" width="132.0" height="2.0" fill="#6e6a62" /><rect x="1022.0" y="1698.0" width="271.0" height="37.7" fill="#2a2826" /><rect x="1024.0" y="1699.0" width="65.0" height="36.0" fill="#8f8a80" /><rect x="1027.0" y="1701.0" width="59.0" height="10.0" fill="#c2bcb1" /><rect x="1030.0" y="1704" width="40" height="4" fill="#3a3733"/><rect x="1074.0" y="1703.0" width="3.0" height="5.0" fill="#333" /><rect x="1079.0" y="1703.0" width="3.0" height="5.0" fill="#333" /><rect x="1027.0" y="1714" width="59" height="19" fill="url(#hexbeige)"/><rect x="1029.0" y="1717.0" width="20.0" height="15.0" fill="#34555c" /><ellipse cx="1076.0" cy="1725" rx="2.5" ry="4" fill="#e6e6e6"/><rect x="1092.3" y="1699.0" width="65.0" height="36.0" fill="#8f8a80" /><rect x="1095.3" y="1701.0" width="59.0" height="10.0" fill="#c2bcb1" /><rect x="1098.3" y="1704" width="40" height="4" fill="#3a3733"/><rect x="1142.3" y="1703.0" width="3.0" height="5.0" fill="#333" /><rect x="1147.3" y="1703.0" width="3.0" height="5.0" fill="#333" /><rect x="1095.3" y="1714" width="59" height="19" fill="url(#hexbeige)"/><rect x="1097.3" y="1717.0" width="20.0" height="15.0" fill="#34555c" /><ellipse cx="1144.3" cy="1725" rx="2.5" ry="4" fill="#e6e6e6"/><rect x="1160.6" y="1699.0" width="65.0" height="36.0" fill="#8f8a80" /><rect x="1163.6" y="1701.0" width="59.0" height="10.0" fill="#c2bcb1" /><rect x="1166.6" y="1704" width="40" height="4" fill="#3a3733"/><rect x="1210.6" y="1703.0" width="3.0" height="5.0" fill="#333" /><rect x="1215.6" y="1703.0" width="3.0" height="5.0" fill="#333" /><rect x="1163.6" y="1714" width="59" height="19" fill="url(#hexbeige)"/><rect x="1165.6" y="1717.0" width="20.0" height="15.0" fill="#34555c" /><ellipse cx="1212.6" cy="1725" rx="2.5" ry="4" fill="#e6e6e6"/><rect x="1228.9" y="1699.0" width="65.0" height="36.0" fill="#8f8a80" /><rect x="1231.9" y="1701.0" width="59.0" height="10.0" fill="#c2bcb1" /><rect x="1234.9" y="1704" width="40" height="4" fill="#3a3733"/><rect x="1278.9" y="1703.0" width="3.0" height="5.0" fill="#333" /><rect x="1283.9" y="1703.0" width="3.0" height="5.0" fill="#333" /><rect x="1231.9" y="1714" width="59" height="19" fill="url(#hexbeige)"/><rect x="1233.9" y="1717.0" width="20.0" height="15.0" fill="#34555c" /><ellipse cx="1280.9" cy="1725" rx="2.5" ry="4" fill="#e6e6e6"/><rect x="999.5" y="1510.4" width="314" height="227.8" fill="none" stroke="#ffff00" stroke-width="5"/><rect x="1101.4" y="1612.4" width="109.9" height="23.3" fill="#7b8c99" stroke="#111" stroke-width="2"/><text x="1156.3" y="1630.0" font-size="16.5" fill="#f2f2f2" text-anchor="middle" font-family="Liberation Sans">NHCTCC01</text><rect x="1451.5" y="510.0" width="28.0" height="1198.0" fill="url(#pdul)" stroke="#3a3a3a" stroke-width="1.2"/><circle cx="1457.5" cy="521.8" r="2.8" fill="none" stroke="#333" stroke-width="1.6"/><circle cx="1473.5" cy="521.8" r="2.8" fill="none" stroke="#333" stroke-width="1.6"/><circle cx="1457.5" cy="1698" r="2.8" fill="none" stroke="#333" stroke-width="1.6"/><circle cx="1473.5" cy="1698" r="2.8" fill="none" stroke="#333" stroke-width="1.6"/><rect x="1456.5" y="580.0" width="18" height="31" rx="6" fill="#dcdcdc" stroke="#2a2a2a" stroke-width="2"/><rect x="1459.5" y="592.5" width="4" height="6" fill="#222"/><rect x="1466.5" y="585.5" width="3" height="5" fill="#777"/><rect x="1456.5" y="726.5" width="18" height="31" rx="6" fill="#dcdcdc" stroke="#2a2a2a" stroke-width="2"/><rect x="1459.5" y="739" width="4" height="6" fill="#222"/><rect x="1466.5" y="732" width="3" height="5" fill="#777"/><rect x="1456.5" y="872.5" width="18" height="31" rx="6" fill="#dcdcdc" stroke="#2a2a2a" stroke-width="2"/><rect x="1459.5" y="885" width="4" height="6" fill="#222"/><rect x="1466.5" y="878" width="3" height="5" fill="#777"/><rect x="1456.5" y="1019.5" width="18" height="31" rx="6" fill="#dcdcdc" stroke="#2a2a2a" stroke-width="2"/><rect x="1459.5" y="1032" width="4" height="6" fill="#222"/><rect x="1466.5" y="1025" width="3" height="5" fill="#777"/><rect x="1456.5" y="1166.5" width="18" height="31" rx="6" fill="#dcdcdc" stroke="#2a2a2a" stroke-width="2"/><rect x="1459.5" y="1179" width="4" height="6" fill="#222"/><rect x="1466.5" y="1172" width="3" height="5" fill="#777"/><rect x="1456.5" y="1314.5" width="18" height="31" rx="6" fill="#dcdcdc" stroke="#2a2a2a" stroke-width="2"/><rect x="1459.5" y="1327" width="4" height="6" fill="#222"/><rect x="1466.5" y="1320" width="3" height="5" fill="#777"/><rect x="1456.5" y="1461.5" width="18" height="31" rx="6" fill="#dcdcdc" stroke="#2a2a2a" stroke-width="2"/><rect x="1459.5" y="1474" width="4" height="6" fill="#222"/><rect x="1466.5" y="1467" width="3" height="5" fill="#777"/><rect x="1456.5" y="1609.0" width="18" height="31" rx="6" fill="#dcdcdc" stroke="#2a2a2a" stroke-width="2"/><rect x="1459.5" y="1621.5" width="4" height="6" fill="#222"/><rect x="1466.5" y="1614.5" width="3" height="5" fill="#777"/><rect x="1453" y="907.6" width="25.3" height="405.4" fill="#7b8c99" stroke="#111" stroke-width="2"/><text transform="translate(1459.7,1110.3) rotate(90)" font-size="16.5" fill="#f2f2f2" text-anchor="middle" font-family="Liberation Sans">dev-vert-220v-pdu-01 / ZA1047003969 / 10.42.10.8</text><rect x="1845.0" y="510.0" width="28.0" height="1200.0" fill="#2f2924" /><rect x="1852.6" y="511.4" width="15.5" height="12.4" rx="2" fill="#655b52" stroke="#141110" stroke-width="1.3"/><path d="M1857.6 513.0 h5 a2.5 2.3 0 0 1 -5 0 z" fill="#0c0a09"/><rect x="1854.8" y="518.0" width="2.6" height="3.6" fill="#0c0a09"/><rect x="1861.3" y="517.2" width="2.8" height="4.6" fill="#0c0a09"/><rect x="1864" y="518.6" width="2.2" height="1.8" fill="#0c0a09"/><path d="M1848 517.0 l2.2 1.6 l-2.2 0.6 z" fill="#8a8078"/><rect x="1852.6" y="529.1" width="15.5" height="12.4" rx="2" fill="#655b52" stroke="#141110" stroke-width="1.3"/><path d="M1857.6 530.7 h5 a2.5 2.3 0 0 1 -5 0 z" fill="#0c0a09"/><rect x="1854.8" y="535.7" width="2.6" height="3.6" fill="#0c0a09"/><rect x="1861.3" y="534.9" width="2.8" height="4.6" fill="#0c0a09"/><rect x="1864" y="536.3" width="2.2" height="1.8" fill="#0c0a09"/><path d="M1848 534.7 l2.2 1.6 l-2.2 0.6 z" fill="#8a8078"/><rect x="1852.6" y="546.9" width="15.5" height="12.4" rx="2" fill="#655b52" stroke="#141110" stroke-width="1.3"/><path d="M1857.6 548.5 h5 a2.5 2.3 0 0 1 -5 0 z" fill="#0c0a09"/><rect x="1854.8" y="553.5" width="2.6" height="3.6" fill="#0c0a09"/><rect x="1861.3" y="552.7" width="2.8" height="4.6" fill="#0c0a09"/><rect x="1864" y="554.1" width="2.2" height="1.8" fill="#0c0a09"/><path d="M1848 552.5 l2.2 1.6 l-2.2 0.6 z" fill="#8a8078"/><rect x="1852.6" y="564.6" width="15.5" height="12.4" rx="2" fill="#655b52" stroke="#141110" stroke-width="1.3"/><path d="M1857.6 566.2 h5 a2.5 2.3 0 0 1 -5 0 z" fill="#0c0a09"/><rect x="1854.8" y="571.2" width="2.6" height="3.6" fill="#0c0a09"/><rect x="1861.3" y="570.4" width="2.8" height="4.6" fill="#0c0a09"/><rect x="1864" y="571.8" width="2.2" height="1.8" fill="#0c0a09"/><path d="M1848 570.2 l2.2 1.6 l-2.2 0.6 z" fill="#8a8078"/><rect x="1852.6" y="582.4" width="15.5" height="12.4" rx="2" fill="#655b52" stroke="#141110" stroke-width="1.3"/><path d="M1857.6 584.0 h5 a2.5 2.3 0 0 1 -5 0 z" fill="#0c0a09"/><rect x="1854.8" y="589.0" width="2.6" height="3.6" fill="#0c0a09"/><rect x="1861.3" y="588.2" width="2.8" height="4.6" fill="#0c0a09"/><rect x="1864" y="589.6" width="2.2" height="1.8" fill="#0c0a09"/><path d="M1848 588.0 l2.2 1.6 l-2.2 0.6 z" fill="#8a8078"/><rect x="1852.6" y="600.1" width="15.5" height="12.4" rx="2" fill="#655b52" stroke="#141110" stroke-width="1.3"/><path d="M1857.6 601.7 h5 a2.5 2.3 0 0 1 -5 0 z" fill="#0c0a09"/><rect x="1854.8" y="606.7" width="2.6" height="3.6" fill="#0c0a09"/><rect x="1861.3" y="605.9" width="2.8" height="4.6" fill="#0c0a09"/><rect x="1864" y="607.3" width="2.2" height="1.8" fill="#0c0a09"/><path d="M1848 605.7 l2.2 1.6 l-2.2 0.6 z" fill="#8a8078"/><rect x="1852.6" y="617.8" width="15.5" height="12.4" rx="2" fill="#655b52" stroke="#141110" stroke-width="1.3"/><path d="M1857.6 619.4 h5 a2.5 2.3 0 0 1 -5 0 z" fill="#0c0a09"/><rect x="1854.8" y="624.4" width="2.6" height="3.6" fill="#0c0a09"/><rect x="1861.3" y="623.6" width="2.8" height="4.6" fill="#0c0a09"/><rect x="1864" y="625.0" width="2.2" height="1.8" fill="#0c0a09"/><path d="M1848 623.4 l2.2 1.6 l-2.2 0.6 z" fill="#8a8078"/><rect x="1852.6" y="635.6" width="15.5" height="12.4" rx="2" fill="#655b52" stroke="#141110" stroke-width="1.3"/><path d="M1857.6 637.2 h5 a2.5 2.3 0 0 1 -5 0 z" fill="#0c0a09"/><rect x="1854.8" y="642.2" width="2.6" height="3.6" fill="#0c0a09"/><rect x="1861.3" y="641.4" width="2.8" height="4.6" fill="#0c0a09"/><rect x="1864" y="642.8" width="2.2" height="1.8" fill="#0c0a09"/><path d="M1848 641.2 l2.2 1.6 l-2.2 0.6 z" fill="#8a8078"/><rect x="1852.6" y="653.3" width="15.5" height="12.4" rx="2" fill="#655b52" stroke="#141110" stroke-width="1.3"/><path d="M1857.6 654.9 h5 a2.5 2.3 0 0 1 -5 0 z" fill="#0c0a09"/><rect x="1854.8" y="659.9" width="2.6" height="3.6" fill="#0c0a09"/><rect x="1861.3" y="659.1" width="2.8" height="4.6" fill="#0c0a09"/><rect x="1864" y="660.5" width="2.2" height="1.8" fill="#0c0a09"/><path d="M1848 658.9 l2.2 1.6 l-2.2 0.6 z" fill="#8a8078"/><rect x="1852.6" y="671.1" width="15.5" height="12.4" rx="2" fill="#655b52" stroke="#141110" stroke-width="1.3"/><path d="M1857.6 672.7 h5 a2.5 2.3 0 0 1 -5 0 z" fill="#0c0a09"/><rect x="1854.8" y="677.7" width="2.6" height="3.6" fill="#0c0a09"/><rect x="1861.3" y="676.9" width="2.8" height="4.6" fill="#0c0a09"/><rect x="1864" y="678.3" width="2.2" height="1.8" fill="#0c0a09"/><path d="M1848 676.7 l2.2 1.6 l-2.2 0.6 z" fill="#8a8078"/><rect x="1852.6" y="688.8" width="15.5" height="12.4" rx="2" fill="#655b52" stroke="#141110" stroke-width="1.3"/><path d="M1857.6 690.4 h5 a2.5 2.3 0 0 1 -5 0 z" fill="#0c0a09"/><rect x="1854.8" y="695.4" width="2.6" height="3.6" fill="#0c0a09"/><rect x="1861.3" y="694.6" width="2.8" height="4.6" fill="#0c0a09"/><rect x="1864" y="696.0" width="2.2" height="1.8" fill="#0c0a09"/><path d="M1848 694.4 l2.2 1.6 l-2.2 0.6 z" fill="#8a8078"/><rect x="1852.6" y="706.5" width="15.5" height="12.4" rx="2" fill="#655b52" stroke="#141110" stroke-width="1.3"/><path d="M1857.6 708.1 h5 a2.5 2.3 0 0 1 -5 0 z" fill="#0c0a09"/><rect x="1854.8" y="713.1" width="2.6" height="3.6" fill="#0c0a09"/><rect x="1861.3" y="712.3" width="2.8" height="4.6" fill="#0c0a09"/><rect x="1864" y="713.7" width="2.2" height="1.8" fill="#0c0a09"/><path d="M1848 712.1 l2.2 1.6 l-2.2 0.6 z" fill="#8a8078"/><rect x="1852.6" y="724.3" width="15.5" height="12.4" rx="2" fill="#655b52" stroke="#141110" stroke-width="1.3"/><path d="M1857.6 725.9 h5 a2.5 2.3 0 0 1 -5 0 z" fill="#0c0a09"/><rect x="1854.8" y="730.9" width="2.6" height="3.6" fill="#0c0a09"/><rect x="1861.3" y="730.1" width="2.8" height="4.6" fill="#0c0a09"/><rect x="1864" y="731.5" width="2.2" height="1.8" fill="#0c0a09"/><path d="M1848 729.9 l2.2 1.6 l-2.2 0.6 z" fill="#8a8078"/><rect x="1852.6" y="742.0" width="15.5" height="12.4" rx="2" fill="#655b52" stroke="#141110" stroke-width="1.3"/><path d="M1857.6 743.6 h5 a2.5 2.3 0 0 1 -5 0 z" fill="#0c0a09"/><rect x="1854.8" y="748.6" width="2.6" height="3.6" fill="#0c0a09"/><rect x="1861.3" y="747.8" width="2.8" height="4.6" fill="#0c0a09"/><rect x="1864" y="749.2" width="2.2" height="1.8" fill="#0c0a09"/><path d="M1848 747.6 l2.2 1.6 l-2.2 0.6 z" fill="#8a8078"/><rect x="1852.6" y="759.8" width="15.5" height="12.4" rx="2" fill="#655b52" stroke="#141110" stroke-width="1.3"/><path d="M1857.6 761.4 h5 a2.5 2.3 0 0 1 -5 0 z" fill="#0c0a09"/><rect x="1854.8" y="766.4" width="2.6" height="3.6" fill="#0c0a09"/><rect x="1861.3" y="765.6" width="2.8" height="4.6" fill="#0c0a09"/><rect x="1864" y="767.0" width="2.2" height="1.8" fill="#0c0a09"/><path d="M1848 765.4 l2.2 1.6 l-2.2 0.6 z" fill="#8a8078"/><rect x="1852.6" y="777.5" width="15.5" height="12.4" rx="2" fill="#655b52" stroke="#141110" stroke-width="1.3"/><path d="M1857.6 779.1 h5 a2.5 2.3 0 0 1 -5 0 z" fill="#0c0a09"/><rect x="1854.8" y="784.1" width="2.6" height="3.6" fill="#0c0a09"/><rect x="1861.3" y="783.3" width="2.8" height="4.6" fill="#0c0a09"/><rect x="1864" y="784.7" width="2.2" height="1.8" fill="#0c0a09"/><path d="M1848 783.1 l2.2 1.6 l-2.2 0.6 z" fill="#8a8078"/><rect x="1852.6" y="795.2" width="15.5" height="12.4" rx="2" fill="#655b52" stroke="#141110" stroke-width="1.3"/><path d="M1857.6 796.8 h5 a2.5 2.3 0 0 1 -5 0 z" fill="#0c0a09"/><rect x="1854.8" y="801.8" width="2.6" height="3.6" fill="#0c0a09"/><rect x="1861.3" y="801.0" width="2.8" height="4.6" fill="#0c0a09"/><rect x="1864" y="802.4" width="2.2" height="1.8" fill="#0c0a09"/><path d="M1848 800.8 l2.2 1.6 l-2.2 0.6 z" fill="#8a8078"/><rect x="1852.6" y="813.0" width="15.5" height="12.4" rx="2" fill="#655b52" stroke="#141110" stroke-width="1.3"/><path d="M1857.6 814.6 h5 a2.5 2.3 0 0 1 -5 0 z" fill="#0c0a09"/><rect x="1854.8" y="819.6" width="2.6" height="3.6" fill="#0c0a09"/><rect x="1861.3" y="818.8" width="2.8" height="4.6" fill="#0c0a09"/><rect x="1864" y="820.2" width="2.2" height="1.8" fill="#0c0a09"/><path d="M1848 818.6 l2.2 1.6 l-2.2 0.6 z" fill="#8a8078"/><rect x="1852.6" y="830.7" width="15.5" height="12.4" rx="2" fill="#655b52" stroke="#141110" stroke-width="1.3"/><path d="M1857.6 832.3 h5 a2.5 2.3 0 0 1 -5 0 z" fill="#0c0a09"/><rect x="1854.8" y="837.3" width="2.6" height="3.6" fill="#0c0a09"/><rect x="1861.3" y="836.5" width="2.8" height="4.6" fill="#0c0a09"/><rect x="1864" y="837.9" width="2.2" height="1.8" fill="#0c0a09"/><path d="M1848 836.3 l2.2 1.6 l-2.2 0.6 z" fill="#8a8078"/><rect x="1852.6" y="848.5" width="15.5" height="12.4" rx="2" fill="#655b52" stroke="#141110" stroke-width="1.3"/><path d="M1857.6 850.1 h5 a2.5 2.3 0 0 1 -5 0 z" fill="#0c0a09"/><rect x="1854.8" y="855.1" width="2.6" height="3.6" fill="#0c0a09"/><rect x="1861.3" y="854.3" width="2.8" height="4.6" fill="#0c0a09"/><rect x="1864" y="855.7" width="2.2" height="1.8" fill="#0c0a09"/><path d="M1848 854.1 l2.2 1.6 l-2.2 0.6 z" fill="#8a8078"/><rect x="1852.6" y="866.2" width="15.5" height="12.4" rx="2" fill="#655b52" stroke="#141110" stroke-width="1.3"/><path d="M1857.6 867.8 h5 a2.5 2.3 0 0 1 -5 0 z" fill="#0c0a09"/><rect x="1854.8" y="872.8" width="2.6" height="3.6" fill="#0c0a09"/><rect x="1861.3" y="872.0" width="2.8" height="4.6" fill="#0c0a09"/><rect x="1864" y="873.4" width="2.2" height="1.8" fill="#0c0a09"/><path d="M1848 871.8 l2.2 1.6 l-2.2 0.6 z" fill="#8a8078"/><rect x="1852.6" y="883.9" width="15.5" height="12.4" rx="2" fill="#655b52" stroke="#141110" stroke-width="1.3"/><path d="M1857.6 885.5 h5 a2.5 2.3 0 0 1 -5 0 z" fill="#0c0a09"/><rect x="1854.8" y="890.5" width="2.6" height="3.6" fill="#0c0a09"/><rect x="1861.3" y="889.7" width="2.8" height="4.6" fill="#0c0a09"/><rect x="1864" y="891.1" width="2.2" height="1.8" fill="#0c0a09"/><path d="M1848 889.5 l2.2 1.6 l-2.2 0.6 z" fill="#8a8078"/><rect x="1852.6" y="901.7" width="15.5" height="12.4" rx="2" fill="#655b52" stroke="#141110" stroke-width="1.3"/><path d="M1857.6 903.3 h5 a2.5 2.3 0 0 1 -5 0 z" fill="#0c0a09"/><rect x="1854.8" y="908.3" width="2.6" height="3.6" fill="#0c0a09"/><rect x="1861.3" y="907.5" width="2.8" height="4.6" fill="#0c0a09"/><rect x="1864" y="908.9" width="2.2" height="1.8" fill="#0c0a09"/><path d="M1848 907.3 l2.2 1.6 l-2.2 0.6 z" fill="#8a8078"/><rect x="1852.6" y="919.4" width="15.5" height="12.4" rx="2" fill="#655b52" stroke="#141110" stroke-width="1.3"/><path d="M1857.6 921.0 h5 a2.5 2.3 0 0 1 -5 0 z" fill="#0c0a09"/><rect x="1854.8" y="926.0" width="2.6" height="3.6" fill="#0c0a09"/><rect x="1861.3" y="925.2" width="2.8" height="4.6" fill="#0c0a09"/><rect x="1864" y="926.6" width="2.2" height="1.8" fill="#0c0a09"/><path d="M1848 925.0 l2.2 1.6 l-2.2 0.6 z" fill="#8a8078"/><rect x="1852.6" y="937.2" width="15.5" height="12.4" rx="2" fill="#655b52" stroke="#141110" stroke-width="1.3"/><path d="M1857.6 938.8 h5 a2.5 2.3 0 0 1 -5 0 z" fill="#0c0a09"/><rect x="1854.8" y="943.8" width="2.6" height="3.6" fill="#0c0a09"/><rect x="1861.3" y="943.0" width="2.8" height="4.6" fill="#0c0a09"/><rect x="1864" y="944.4" width="2.2" height="1.8" fill="#0c0a09"/><path d="M1848 942.8 l2.2 1.6 l-2.2 0.6 z" fill="#8a8078"/><rect x="1852.6" y="954.9" width="15.5" height="12.4" rx="2" fill="#655b52" stroke="#141110" stroke-width="1.3"/><path d="M1857.6 956.5 h5 a2.5 2.3 0 0 1 -5 0 z" fill="#0c0a09"/><rect x="1854.8" y="961.5" width="2.6" height="3.6" fill="#0c0a09"/><rect x="1861.3" y="960.7" width="2.8" height="4.6" fill="#0c0a09"/><rect x="1864" y="962.1" width="2.2" height="1.8" fill="#0c0a09"/><path d="M1848 960.5 l2.2 1.6 l-2.2 0.6 z" fill="#8a8078"/><rect x="1852.6" y="972.6" width="15.5" height="12.4" rx="2" fill="#655b52" stroke="#141110" stroke-width="1.3"/><path d="M1857.6 974.2 h5 a2.5 2.3 0 0 1 -5 0 z" fill="#0c0a09"/><rect x="1854.8" y="979.2" width="2.6" height="3.6" fill="#0c0a09"/><rect x="1861.3" y="978.4" width="2.8" height="4.6" fill="#0c0a09"/><rect x="1864" y="979.8" width="2.2" height="1.8" fill="#0c0a09"/><path d="M1848 978.2 l2.2 1.6 l-2.2 0.6 z" fill="#8a8078"/><rect x="1852.6" y="990.4" width="15.5" height="12.4" rx="2" fill="#655b52" stroke="#141110" stroke-width="1.3"/><path d="M1857.6 992.0 h5 a2.5 2.3 0 0 1 -5 0 z" fill="#0c0a09"/><rect x="1854.8" y="997.0" width="2.6" height="3.6" fill="#0c0a09"/><rect x="1861.3" y="996.2" width="2.8" height="4.6" fill="#0c0a09"/><rect x="1864" y="997.6" width="2.2" height="1.8" fill="#0c0a09"/><path d="M1848 996.0 l2.2 1.6 l-2.2 0.6 z" fill="#8a8078"/><rect x="1852.6" y="1008.1" width="15.5" height="12.4" rx="2" fill="#655b52" stroke="#141110" stroke-width="1.3"/><path d="M1857.6 1009.7 h5 a2.5 2.3 0 0 1 -5 0 z" fill="#0c0a09"/><rect x="1854.8" y="1014.7" width="2.6" height="3.6" fill="#0c0a09"/><rect x="1861.3" y="1013.9" width="2.8" height="4.6" fill="#0c0a09"/><rect x="1864" y="1015.3" width="2.2" height="1.8" fill="#0c0a09"/><path d="M1848 1013.7 l2.2 1.6 l-2.2 0.6 z" fill="#8a8078"/><rect x="1852.6" y="1025.9" width="15.5" height="12.4" rx="2" fill="#655b52" stroke="#141110" stroke-width="1.3"/><path d="M1857.6 1027.5 h5 a2.5 2.3 0 0 1 -5 0 z" fill="#0c0a09"/><rect x="1854.8" y="1032.5" width="2.6" height="3.6" fill="#0c0a09"/><rect x="1861.3" y="1031.7" width="2.8" height="4.6" fill="#0c0a09"/><rect x="1864" y="1033.1" width="2.2" height="1.8" fill="#0c0a09"/><path d="M1848 1031.5 l2.2 1.6 l-2.2 0.6 z" fill="#8a8078"/><rect x="1852.6" y="1043.6" width="15.5" height="12.4" rx="2" fill="#655b52" stroke="#141110" stroke-width="1.3"/><path d="M1857.6 1045.2 h5 a2.5 2.3 0 0 1 -5 0 z" fill="#0c0a09"/><rect x="1854.8" y="1050.2" width="2.6" height="3.6" fill="#0c0a09"/><rect x="1861.3" y="1049.4" width="2.8" height="4.6" fill="#0c0a09"/><rect x="1864" y="1050.8" width="2.2" height="1.8" fill="#0c0a09"/><path d="M1848 1049.2 l2.2 1.6 l-2.2 0.6 z" fill="#8a8078"/><rect x="1852.6" y="1061.3" width="15.5" height="12.4" rx="2" fill="#655b52" stroke="#141110" stroke-width="1.3"/><path d="M1857.6 1062.9 h5 a2.5 2.3 0 0 1 -5 0 z" fill="#0c0a09"/><rect x="1854.8" y="1067.9" width="2.6" height="3.6" fill="#0c0a09"/><rect x="1861.3" y="1067.1" width="2.8" height="4.6" fill="#0c0a09"/><rect x="1864" y="1068.5" width="2.2" height="1.8" fill="#0c0a09"/><path d="M1848 1066.9 l2.2 1.6 l-2.2 0.6 z" fill="#8a8078"/><rect x="1852.6" y="1079.1" width="15.5" height="12.4" rx="2" fill="#655b52" stroke="#141110" stroke-width="1.3"/><path d="M1857.6 1080.7 h5 a2.5 2.3 0 0 1 -5 0 z" fill="#0c0a09"/><rect x="1854.8" y="1085.7" width="2.6" height="3.6" fill="#0c0a09"/><rect x="1861.3" y="1084.9" width="2.8" height="4.6" fill="#0c0a09"/><rect x="1864" y="1086.3" width="2.2" height="1.8" fill="#0c0a09"/><path d="M1848 1084.7 l2.2 1.6 l-2.2 0.6 z" fill="#8a8078"/><rect x="1852.6" y="1096.8" width="15.5" height="12.4" rx="2" fill="#655b52" stroke="#141110" stroke-width="1.3"/><path d="M1857.6 1098.4 h5 a2.5 2.3 0 0 1 -5 0 z" fill="#0c0a09"/><rect x="1854.8" y="1103.4" width="2.6" height="3.6" fill="#0c0a09"/><rect x="1861.3" y="1102.6" width="2.8" height="4.6" fill="#0c0a09"/><rect x="1864" y="1104.0" width="2.2" height="1.8" fill="#0c0a09"/><path d="M1848 1102.4 l2.2 1.6 l-2.2 0.6 z" fill="#8a8078"/><rect x="1852.6" y="1114.6" width="15.5" height="12.4" rx="2" fill="#655b52" stroke="#141110" stroke-width="1.3"/><path d="M1857.6 1116.2 h5 a2.5 2.3 0 0 1 -5 0 z" fill="#0c0a09"/><rect x="1854.8" y="1121.2" width="2.6" height="3.6" fill="#0c0a09"/><rect x="1861.3" y="1120.4" width="2.8" height="4.6" fill="#0c0a09"/><rect x="1864" y="1121.8" width="2.2" height="1.8" fill="#0c0a09"/><path d="M1848 1120.2 l2.2 1.6 l-2.2 0.6 z" fill="#8a8078"/><rect x="1852.6" y="1132.3" width="15.5" height="12.4" rx="2" fill="#655b52" stroke="#141110" stroke-width="1.3"/><path d="M1857.6 1133.9 h5 a2.5 2.3 0 0 1 -5 0 z" fill="#0c0a09"/><rect x="1854.8" y="1138.9" width="2.6" height="3.6" fill="#0c0a09"/><rect x="1861.3" y="1138.1" width="2.8" height="4.6" fill="#0c0a09"/><rect x="1864" y="1139.5" width="2.2" height="1.8" fill="#0c0a09"/><path d="M1848 1137.9 l2.2 1.6 l-2.2 0.6 z" fill="#8a8078"/><rect x="1852.6" y="1150.0" width="15.5" height="12.4" rx="2" fill="#655b52" stroke="#141110" stroke-width="1.3"/><path d="M1857.6 1151.6 h5 a2.5 2.3 0 0 1 -5 0 z" fill="#0c0a09"/><rect x="1854.8" y="1156.6" width="2.6" height="3.6" fill="#0c0a09"/><rect x="1861.3" y="1155.8" width="2.8" height="4.6" fill="#0c0a09"/><rect x="1864" y="1157.2" width="2.2" height="1.8" fill="#0c0a09"/><path d="M1848 1155.6 l2.2 1.6 l-2.2 0.6 z" fill="#8a8078"/><rect x="1852.6" y="1167.8" width="15.5" height="12.4" rx="2" fill="#655b52" stroke="#141110" stroke-width="1.3"/><path d="M1857.6 1169.4 h5 a2.5 2.3 0 0 1 -5 0 z" fill="#0c0a09"/><rect x="1854.8" y="1174.4" width="2.6" height="3.6" fill="#0c0a09"/><rect x="1861.3" y="1173.6" width="2.8" height="4.6" fill="#0c0a09"/><rect x="1864" y="1175.0" width="2.2" height="1.8" fill="#0c0a09"/><path d="M1848 1173.4 l2.2 1.6 l-2.2 0.6 z" fill="#8a8078"/><rect x="1852.6" y="1185.5" width="15.5" height="12.4" rx="2" fill="#655b52" stroke="#141110" stroke-width="1.3"/><path d="M1857.6 1187.1 h5 a2.5 2.3 0 0 1 -5 0 z" fill="#0c0a09"/><rect x="1854.8" y="1192.1" width="2.6" height="3.6" fill="#0c0a09"/><rect x="1861.3" y="1191.3" width="2.8" height="4.6" fill="#0c0a09"/><rect x="1864" y="1192.7" width="2.2" height="1.8" fill="#0c0a09"/><path d="M1848 1191.1 l2.2 1.6 l-2.2 0.6 z" fill="#8a8078"/><rect x="1852.6" y="1203.3" width="15.5" height="12.4" rx="2" fill="#655b52" stroke="#141110" stroke-width="1.3"/><path d="M1857.6 1204.9 h5 a2.5 2.3 0 0 1 -5 0 z" fill="#0c0a09"/><rect x="1854.8" y="1209.9" width="2.6" height="3.6" fill="#0c0a09"/><rect x="1861.3" y="1209.1" width="2.8" height="4.6" fill="#0c0a09"/><rect x="1864" y="1210.5" width="2.2" height="1.8" fill="#0c0a09"/><path d="M1848 1208.9 l2.2 1.6 l-2.2 0.6 z" fill="#8a8078"/><rect x="1852.6" y="1221.0" width="15.5" height="12.4" rx="2" fill="#655b52" stroke="#141110" stroke-width="1.3"/><path d="M1857.6 1222.6 h5 a2.5 2.3 0 0 1 -5 0 z" fill="#0c0a09"/><rect x="1854.8" y="1227.6" width="2.6" height="3.6" fill="#0c0a09"/><rect x="1861.3" y="1226.8" width="2.8" height="4.6" fill="#0c0a09"/><rect x="1864" y="1228.2" width="2.2" height="1.8" fill="#0c0a09"/><path d="M1848 1226.6 l2.2 1.6 l-2.2 0.6 z" fill="#8a8078"/><rect x="1852.6" y="1238.7" width="15.5" height="12.4" rx="2" fill="#655b52" stroke="#141110" stroke-width="1.3"/><path d="M1857.6 1240.3 h5 a2.5 2.3 0 0 1 -5 0 z" fill="#0c0a09"/><rect x="1854.8" y="1245.3" width="2.6" height="3.6" fill="#0c0a09"/><rect x="1861.3" y="1244.5" width="2.8" height="4.6" fill="#0c0a09"/><rect x="1864" y="1245.9" width="2.2" height="1.8" fill="#0c0a09"/><path d="M1848 1244.3 l2.2 1.6 l-2.2 0.6 z" fill="#8a8078"/><rect x="1852.6" y="1256.5" width="15.5" height="12.4" rx="2" fill="#655b52" stroke="#141110" stroke-width="1.3"/><path d="M1857.6 1258.1 h5 a2.5 2.3 0 0 1 -5 0 z" fill="#0c0a09"/><rect x="1854.8" y="1263.1" width="2.6" height="3.6" fill="#0c0a09"/><rect x="1861.3" y="1262.3" width="2.8" height="4.6" fill="#0c0a09"/><rect x="1864" y="1263.7" width="2.2" height="1.8" fill="#0c0a09"/><path d="M1848 1262.1 l2.2 1.6 l-2.2 0.6 z" fill="#8a8078"/><rect x="1852.6" y="1274.2" width="15.5" height="12.4" rx="2" fill="#655b52" stroke="#141110" stroke-width="1.3"/><path d="M1857.6 1275.8 h5 a2.5 2.3 0 0 1 -5 0 z" fill="#0c0a09"/><rect x="1854.8" y="1280.8" width="2.6" height="3.6" fill="#0c0a09"/><rect x="1861.3" y="1280.0" width="2.8" height="4.6" fill="#0c0a09"/><rect x="1864" y="1281.4" width="2.2" height="1.8" fill="#0c0a09"/><path d="M1848 1279.8 l2.2 1.6 l-2.2 0.6 z" fill="#8a8078"/><rect x="1852.6" y="1292.0" width="15.5" height="12.4" rx="2" fill="#655b52" stroke="#141110" stroke-width="1.3"/><path d="M1857.6 1293.6 h5 a2.5 2.3 0 0 1 -5 0 z" fill="#0c0a09"/><rect x="1854.8" y="1298.6" width="2.6" height="3.6" fill="#0c0a09"/><rect x="1861.3" y="1297.8" width="2.8" height="4.6" fill="#0c0a09"/><rect x="1864" y="1299.2" width="2.2" height="1.8" fill="#0c0a09"/><path d="M1848 1297.6 l2.2 1.6 l-2.2 0.6 z" fill="#8a8078"/><rect x="1852.6" y="1309.7" width="15.5" height="12.4" rx="2" fill="#655b52" stroke="#141110" stroke-width="1.3"/><path d="M1857.6 1311.3 h5 a2.5 2.3 0 0 1 -5 0 z" fill="#0c0a09"/><rect x="1854.8" y="1316.3" width="2.6" height="3.6" fill="#0c0a09"/><rect x="1861.3" y="1315.5" width="2.8" height="4.6" fill="#0c0a09"/><rect x="1864" y="1316.9" width="2.2" height="1.8" fill="#0c0a09"/><path d="M1848 1315.3 l2.2 1.6 l-2.2 0.6 z" fill="#8a8078"/><rect x="1852.6" y="1327.4" width="15.5" height="12.4" rx="2" fill="#655b52" stroke="#141110" stroke-width="1.3"/><path d="M1857.6 1329.0 h5 a2.5 2.3 0 0 1 -5 0 z" fill="#0c0a09"/><rect x="1854.8" y="1334.0" width="2.6" height="3.6" fill="#0c0a09"/><rect x="1861.3" y="1333.2" width="2.8" height="4.6" fill="#0c0a09"/><rect x="1864" y="1334.6" width="2.2" height="1.8" fill="#0c0a09"/><path d="M1848 1333.0 l2.2 1.6 l-2.2 0.6 z" fill="#8a8078"/><rect x="1852.6" y="1345.2" width="15.5" height="12.4" rx="2" fill="#655b52" stroke="#141110" stroke-width="1.3"/><path d="M1857.6 1346.8 h5 a2.5 2.3 0 0 1 -5 0 z" fill="#0c0a09"/><rect x="1854.8" y="1351.8" width="2.6" height="3.6" fill="#0c0a09"/><rect x="1861.3" y="1351.0" width="2.8" height="4.6" fill="#0c0a09"/><rect x="1864" y="1352.4" width="2.2" height="1.8" fill="#0c0a09"/><path d="M1848 1350.8 l2.2 1.6 l-2.2 0.6 z" fill="#8a8078"/><rect x="1852.6" y="1362.9" width="15.5" height="12.4" rx="2" fill="#655b52" stroke="#141110" stroke-width="1.3"/><path d="M1857.6 1364.5 h5 a2.5 2.3 0 0 1 -5 0 z" fill="#0c0a09"/><rect x="1854.8" y="1369.5" width="2.6" height="3.6" fill="#0c0a09"/><rect x="1861.3" y="1368.7" width="2.8" height="4.6" fill="#0c0a09"/><rect x="1864" y="1370.1" width="2.2" height="1.8" fill="#0c0a09"/><path d="M1848 1368.5 l2.2 1.6 l-2.2 0.6 z" fill="#8a8078"/><rect x="1852.6" y="1380.7" width="15.5" height="12.4" rx="2" fill="#655b52" stroke="#141110" stroke-width="1.3"/><path d="M1857.6 1382.3 h5 a2.5 2.3 0 0 1 -5 0 z" fill="#0c0a09"/><rect x="1854.8" y="1387.3" width="2.6" height="3.6" fill="#0c0a09"/><rect x="1861.3" y="1386.5" width="2.8" height="4.6" fill="#0c0a09"/><rect x="1864" y="1387.9" width="2.2" height="1.8" fill="#0c0a09"/><path d="M1848 1386.3 l2.2 1.6 l-2.2 0.6 z" fill="#8a8078"/><rect x="1852.6" y="1398.4" width="15.5" height="12.4" rx="2" fill="#655b52" stroke="#141110" stroke-width="1.3"/><path d="M1857.6 1400.0 h5 a2.5 2.3 0 0 1 -5 0 z" fill="#0c0a09"/><rect x="1854.8" y="1405.0" width="2.6" height="3.6" fill="#0c0a09"/><rect x="1861.3" y="1404.2" width="2.8" height="4.6" fill="#0c0a09"/><rect x="1864" y="1405.6" width="2.2" height="1.8" fill="#0c0a09"/><path d="M1848 1404.0 l2.2 1.6 l-2.2 0.6 z" fill="#8a8078"/><rect x="1852.6" y="1416.1" width="15.5" height="12.4" rx="2" fill="#655b52" stroke="#141110" stroke-width="1.3"/><path d="M1857.6 1417.7 h5 a2.5 2.3 0 0 1 -5 0 z" fill="#0c0a09"/><rect x="1854.8" y="1422.7" width="2.6" height="3.6" fill="#0c0a09"/><rect x="1861.3" y="1421.9" width="2.8" height="4.6" fill="#0c0a09"/><rect x="1864" y="1423.3" width="2.2" height="1.8" fill="#0c0a09"/><path d="M1848 1421.7 l2.2 1.6 l-2.2 0.6 z" fill="#8a8078"/><rect x="1852.6" y="1433.9" width="15.5" height="12.4" rx="2" fill="#655b52" stroke="#141110" stroke-width="1.3"/><path d="M1857.6 1435.5 h5 a2.5 2.3 0 0 1 -5 0 z" fill="#0c0a09"/><rect x="1854.8" y="1440.5" width="2.6" height="3.6" fill="#0c0a09"/><rect x="1861.3" y="1439.7" width="2.8" height="4.6" fill="#0c0a09"/><rect x="1864" y="1441.1" width="2.2" height="1.8" fill="#0c0a09"/><path d="M1848 1439.5 l2.2 1.6 l-2.2 0.6 z" fill="#8a8078"/><rect x="1852.6" y="1451.6" width="15.5" height="12.4" rx="2" fill="#655b52" stroke="#141110" stroke-width="1.3"/><path d="M1857.6 1453.2 h5 a2.5 2.3 0 0 1 -5 0 z" fill="#0c0a09"/><rect x="1854.8" y="1458.2" width="2.6" height="3.6" fill="#0c0a09"/><rect x="1861.3" y="1457.4" width="2.8" height="4.6" fill="#0c0a09"/><rect x="1864" y="1458.8" width="2.2" height="1.8" fill="#0c0a09"/><path d="M1848 1457.2 l2.2 1.6 l-2.2 0.6 z" fill="#8a8078"/><rect x="1852.6" y="1469.4" width="15.5" height="12.4" rx="2" fill="#655b52" stroke="#141110" stroke-width="1.3"/><path d="M1857.6 1471.0 h5 a2.5 2.3 0 0 1 -5 0 z" fill="#0c0a09"/><rect x="1854.8" y="1476.0" width="2.6" height="3.6" fill="#0c0a09"/><rect x="1861.3" y="1475.2" width="2.8" height="4.6" fill="#0c0a09"/><rect x="1864" y="1476.6" width="2.2" height="1.8" fill="#0c0a09"/><path d="M1848 1475.0 l2.2 1.6 l-2.2 0.6 z" fill="#8a8078"/><rect x="1852.6" y="1487.1" width="15.5" height="12.4" rx="2" fill="#655b52" stroke="#141110" stroke-width="1.3"/><path d="M1857.6 1488.7 h5 a2.5 2.3 0 0 1 -5 0 z" fill="#0c0a09"/><rect x="1854.8" y="1493.7" width="2.6" height="3.6" fill="#0c0a09"/><rect x="1861.3" y="1492.9" width="2.8" height="4.6" fill="#0c0a09"/><rect x="1864" y="1494.3" width="2.2" height="1.8" fill="#0c0a09"/><path d="M1848 1492.7 l2.2 1.6 l-2.2 0.6 z" fill="#8a8078"/><rect x="1852.6" y="1504.8" width="15.5" height="12.4" rx="2" fill="#655b52" stroke="#141110" stroke-width="1.3"/><path d="M1857.6 1506.4 h5 a2.5 2.3 0 0 1 -5 0 z" fill="#0c0a09"/><rect x="1854.8" y="1511.4" width="2.6" height="3.6" fill="#0c0a09"/><rect x="1861.3" y="1510.6" width="2.8" height="4.6" fill="#0c0a09"/><rect x="1864" y="1512.0" width="2.2" height="1.8" fill="#0c0a09"/><path d="M1848 1510.4 l2.2 1.6 l-2.2 0.6 z" fill="#8a8078"/><rect x="1852.6" y="1522.6" width="15.5" height="12.4" rx="2" fill="#655b52" stroke="#141110" stroke-width="1.3"/><path d="M1857.6 1524.2 h5 a2.5 2.3 0 0 1 -5 0 z" fill="#0c0a09"/><rect x="1854.8" y="1529.2" width="2.6" height="3.6" fill="#0c0a09"/><rect x="1861.3" y="1528.4" width="2.8" height="4.6" fill="#0c0a09"/><rect x="1864" y="1529.8" width="2.2" height="1.8" fill="#0c0a09"/><path d="M1848 1528.2 l2.2 1.6 l-2.2 0.6 z" fill="#8a8078"/><rect x="1852.6" y="1540.3" width="15.5" height="12.4" rx="2" fill="#655b52" stroke="#141110" stroke-width="1.3"/><path d="M1857.6 1541.9 h5 a2.5 2.3 0 0 1 -5 0 z" fill="#0c0a09"/><rect x="1854.8" y="1546.9" width="2.6" height="3.6" fill="#0c0a09"/><rect x="1861.3" y="1546.1" width="2.8" height="4.6" fill="#0c0a09"/><rect x="1864" y="1547.5" width="2.2" height="1.8" fill="#0c0a09"/><path d="M1848 1545.9 l2.2 1.6 l-2.2 0.6 z" fill="#8a8078"/><rect x="1852.6" y="1558.1" width="15.5" height="12.4" rx="2" fill="#655b52" stroke="#141110" stroke-width="1.3"/><path d="M1857.6 1559.7 h5 a2.5 2.3 0 0 1 -5 0 z" fill="#0c0a09"/><rect x="1854.8" y="1564.7" width="2.6" height="3.6" fill="#0c0a09"/><rect x="1861.3" y="1563.9" width="2.8" height="4.6" fill="#0c0a09"/><rect x="1864" y="1565.3" width="2.2" height="1.8" fill="#0c0a09"/><path d="M1848 1563.7 l2.2 1.6 l-2.2 0.6 z" fill="#8a8078"/><rect x="1852.6" y="1575.8" width="15.5" height="12.4" rx="2" fill="#655b52" stroke="#141110" stroke-width="1.3"/><path d="M1857.6 1577.4 h5 a2.5 2.3 0 0 1 -5 0 z" fill="#0c0a09"/><rect x="1854.8" y="1582.4" width="2.6" height="3.6" fill="#0c0a09"/><rect x="1861.3" y="1581.6" width="2.8" height="4.6" fill="#0c0a09"/><rect x="1864" y="1583.0" width="2.2" height="1.8" fill="#0c0a09"/><path d="M1848 1581.4 l2.2 1.6 l-2.2 0.6 z" fill="#8a8078"/><rect x="1852.6" y="1593.5" width="15.5" height="12.4" rx="2" fill="#655b52" stroke="#141110" stroke-width="1.3"/><path d="M1857.6 1595.1 h5 a2.5 2.3 0 0 1 -5 0 z" fill="#0c0a09"/><rect x="1854.8" y="1600.1" width="2.6" height="3.6" fill="#0c0a09"/><rect x="1861.3" y="1599.3" width="2.8" height="4.6" fill="#0c0a09"/><rect x="1864" y="1600.7" width="2.2" height="1.8" fill="#0c0a09"/><path d="M1848 1599.1 l2.2 1.6 l-2.2 0.6 z" fill="#8a8078"/><rect x="1852.6" y="1611.3" width="15.5" height="12.4" rx="2" fill="#655b52" stroke="#141110" stroke-width="1.3"/><path d="M1857.6 1612.9 h5 a2.5 2.3 0 0 1 -5 0 z" fill="#0c0a09"/><rect x="1854.8" y="1617.9" width="2.6" height="3.6" fill="#0c0a09"/><rect x="1861.3" y="1617.1" width="2.8" height="4.6" fill="#0c0a09"/><rect x="1864" y="1618.5" width="2.2" height="1.8" fill="#0c0a09"/><path d="M1848 1616.9 l2.2 1.6 l-2.2 0.6 z" fill="#8a8078"/><rect x="1852.6" y="1629.0" width="15.5" height="12.4" rx="2" fill="#655b52" stroke="#141110" stroke-width="1.3"/><path d="M1857.6 1630.6 h5 a2.5 2.3 0 0 1 -5 0 z" fill="#0c0a09"/><rect x="1854.8" y="1635.6" width="2.6" height="3.6" fill="#0c0a09"/><rect x="1861.3" y="1634.8" width="2.8" height="4.6" fill="#0c0a09"/><rect x="1864" y="1636.2" width="2.2" height="1.8" fill="#0c0a09"/><path d="M1848 1634.6 l2.2 1.6 l-2.2 0.6 z" fill="#8a8078"/><rect x="1852.6" y="1646.8" width="15.5" height="12.4" rx="2" fill="#655b52" stroke="#141110" stroke-width="1.3"/><path d="M1857.6 1648.4 h5 a2.5 2.3 0 0 1 -5 0 z" fill="#0c0a09"/><rect x="1854.8" y="1653.4" width="2.6" height="3.6" fill="#0c0a09"/><rect x="1861.3" y="1652.6" width="2.8" height="4.6" fill="#0c0a09"/><rect x="1864" y="1654.0" width="2.2" height="1.8" fill="#0c0a09"/><path d="M1848 1652.4 l2.2 1.6 l-2.2 0.6 z" fill="#8a8078"/><rect x="1852.6" y="1664.5" width="15.5" height="12.4" rx="2" fill="#655b52" stroke="#141110" stroke-width="1.3"/><path d="M1857.6 1666.1 h5 a2.5 2.3 0 0 1 -5 0 z" fill="#0c0a09"/><rect x="1854.8" y="1671.1" width="2.6" height="3.6" fill="#0c0a09"/><rect x="1861.3" y="1670.3" width="2.8" height="4.6" fill="#0c0a09"/><rect x="1864" y="1671.7" width="2.2" height="1.8" fill="#0c0a09"/><path d="M1848 1670.1 l2.2 1.6 l-2.2 0.6 z" fill="#8a8078"/><rect x="1852.6" y="1682.2" width="15.5" height="12.4" rx="2" fill="#655b52" stroke="#141110" stroke-width="1.3"/><path d="M1857.6 1683.8 h5 a2.5 2.3 0 0 1 -5 0 z" fill="#0c0a09"/><rect x="1854.8" y="1688.8" width="2.6" height="3.6" fill="#0c0a09"/><rect x="1861.3" y="1688.0" width="2.8" height="4.6" fill="#0c0a09"/><rect x="1864" y="1689.4" width="2.2" height="1.8" fill="#0c0a09"/><path d="M1848 1687.8 l2.2 1.6 l-2.2 0.6 z" fill="#8a8078"/><rect x="1847.2" y="926.4" width="23.3" height="367.8" fill="#7b8c99" stroke="#111" stroke-width="2"/><text transform="translate(1852.9,1110.3) rotate(90)" font-size="16.5" fill="#f2f2f2" text-anchor="middle" font-family="Liberation Sans">prod-vert-pdu-01 / ZA0737007687 / 10.42.10.5</text><rect x="1802.5" y="1737.7" width="16.5" height="1.6" fill="#4a5563"/><rect x="1802.5" y="1709.1" width="16.5" height="1.6" fill="#4a5563"/><rect x="1802.5" y="1680.5" width="16.5" height="1.6" fill="#4a5563"/><rect x="1802.5" y="1652.0" width="16.5" height="1.6" fill="#4a5563"/><rect x="1802.5" y="1623.4" width="16.5" height="1.6" fill="#4a5563"/><rect x="1802.5" y="1594.8" width="16.5" height="1.6" fill="#4a5563"/><rect x="1802.5" y="1566.2" width="16.5" height="1.6" fill="#4a5563"/><rect x="1802.5" y="1537.6" width="16.5" height="1.6" fill="#4a5563"/><rect x="1802.5" y="1509.1" width="16.5" height="1.6" fill="#4a5563"/><rect x="1802.5" y="1480.5" width="16.5" height="1.6" fill="#4a5563"/><rect x="1802.5" y="1451.9" width="16.5" height="1.6" fill="#4a5563"/><rect x="1802.5" y="1423.3" width="16.5" height="1.6" fill="#4a5563"/><rect x="1802.5" y="1394.7" width="16.5" height="1.6" fill="#4a5563"/><rect x="1802.5" y="1366.2" width="16.5" height="1.6" fill="#4a5563"/><rect x="1802.5" y="1337.6" width="16.5" height="1.6" fill="#4a5563"/><rect x="1802.5" y="1309.0" width="16.5" height="1.6" fill="#4a5563"/><rect x="1802.5" y="1280.4" width="16.5" height="1.6" fill="#4a5563"/><rect x="1802.5" y="1251.8" width="16.5" height="1.6" fill="#4a5563"/><rect x="1802.5" y="1223.3" width="16.5" height="1.6" fill="#4a5563"/><rect x="1802.5" y="1194.7" width="16.5" height="1.6" fill="#4a5563"/><rect x="1802.5" y="1166.1" width="16.5" height="1.6" fill="#4a5563"/><rect x="1802.5" y="1137.5" width="16.5" height="1.6" fill="#4a5563"/><rect x="1802.5" y="1108.9" width="16.5" height="1.6" fill="#4a5563"/><rect x="1802.5" y="1080.4" width="16.5" height="1.6" fill="#4a5563"/><rect x="1802.5" y="1051.8" width="16.5" height="1.6" fill="#4a5563"/><rect x="1802.5" y="1023.2" width="16.5" height="1.6" fill="#4a5563"/><rect x="1802.5" y="994.6" width="16.5" height="1.6" fill="#4a5563"/><rect x="1802.5" y="966.0" width="16.5" height="1.6" fill="#4a5563"/><rect x="1802.5" y="937.5" width="16.5" height="1.6" fill="#4a5563"/><rect x="1802.5" y="908.9" width="16.5" height="1.6" fill="#4a5563"/><rect x="1802.5" y="880.3" width="16.5" height="1.6" fill="#4a5563"/><rect x="1802.5" y="851.7" width="16.5" height="1.6" fill="#4a5563"/><rect x="1802.5" y="823.1" width="16.5" height="1.6" fill="#4a5563"/><rect x="1802.5" y="794.6" width="16.5" height="1.6" fill="#4a5563"/><rect x="1802.5" y="766.0" width="16.5" height="1.6" fill="#4a5563"/><rect x="1802.5" y="737.4" width="16.5" height="1.6" fill="#4a5563"/><rect x="1802.5" y="708.8" width="16.5" height="1.6" fill="#4a5563"/><rect x="1802.5" y="680.2" width="16.5" height="1.6" fill="#4a5563"/><rect x="1802.5" y="651.7" width="16.5" height="1.6" fill="#4a5563"/><rect x="1802.5" y="623.1" width="16.5" height="1.6" fill="#4a5563"/><rect x="1802.5" y="594.5" width="16.5" height="1.6" fill="#4a5563"/><rect x="1802.5" y="565.9" width="16.5" height="1.6" fill="#4a5563"/><rect x="1802.5" y="537.3" width="16.5" height="1.6" fill="#4a5563"/><text x="1831" y="1730.6" font-size="17.5" fill="#8d9cab" text-anchor="middle" font-family="Liberation Sans">0</text><text x="1831" y="1702.0" font-size="17.5" fill="#8d9cab" text-anchor="middle" font-family="Liberation Sans">1</text><text x="1831" y="1673.5" font-size="17.5" fill="#8d9cab" text-anchor="middle" font-family="Liberation Sans">2</text><text x="1831" y="1644.9" font-size="17.5" fill="#8d9cab" text-anchor="middle" font-family="Liberation Sans">3</text><text x="1831" y="1616.3" font-size="17.5" fill="#8d9cab" text-anchor="middle" font-family="Liberation Sans">4</text><text x="1831" y="1587.7" font-size="17.5" fill="#8d9cab" text-anchor="middle" font-family="Liberation Sans">5</text><text x="1831" y="1559.1" font-size="17.5" fill="#8d9cab" text-anchor="middle" font-family="Liberation Sans">6</text><text x="1831" y="1530.6" font-size="17.5" fill="#8d9cab" text-anchor="middle" font-family="Liberation Sans">7</text><text x="1831" y="1502.0" font-size="17.5" fill="#8d9cab" text-anchor="middle" font-family="Liberation Sans">8</text><text x="1831" y="1473.4" font-size="17.5" fill="#8d9cab" text-anchor="middle" font-family="Liberation Sans">9</text><text x="1831" y="1444.8" font-size="17.5" fill="#8d9cab" text-anchor="middle" font-family="Liberation Sans">10</text><text x="1831" y="1416.2" font-size="17.5" fill="#8d9cab" text-anchor="middle" font-family="Liberation Sans">11</text><text x="1831" y="1387.7" font-size="17.5" fill="#8d9cab" text-anchor="middle" font-family="Liberation Sans">12</text><text x="1831" y="1359.1" font-size="17.5" fill="#8d9cab" text-anchor="middle" font-family="Liberation Sans">13</text><text x="1831" y="1330.5" font-size="17.5" fill="#8d9cab" text-anchor="middle" font-family="Liberation Sans">14</text><text x="1831" y="1301.9" font-size="17.5" fill="#8d9cab" text-anchor="middle" font-family="Liberation Sans">15</text><text x="1831" y="1273.3" font-size="17.5" fill="#8d9cab" text-anchor="middle" font-family="Liberation Sans">16</text><text x="1831" y="1244.8" font-size="17.5" fill="#8d9cab" text-anchor="middle" font-family="Liberation Sans">17</text><text x="1831" y="1216.2" font-size="17.5" fill="#8d9cab" text-anchor="middle" font-family="Liberation Sans">18</text><text x="1831" y="1187.6" font-size="17.5" fill="#8d9cab" text-anchor="middle" font-family="Liberation Sans">19</text><text x="1831" y="1159.0" font-size="17.5" fill="#8d9cab" text-anchor="middle" font-family="Liberation Sans">20</text><text x="1831" y="1130.4" font-size="17.5" fill="#8d9cab" text-anchor="middle" font-family="Liberation Sans">21</text><text x="1831" y="1101.9" font-size="17.5" fill="#8d9cab" text-anchor="middle" font-family="Liberation Sans">22</text><text x="1831" y="1073.3" font-size="17.5" fill="#8d9cab" text-anchor="middle" font-family="Liberation Sans">23</text><text x="1831" y="1044.7" font-size="17.5" fill="#8d9cab" text-anchor="middle" font-family="Liberation Sans">24</text><text x="1831" y="1016.1" font-size="17.5" fill="#8d9cab" text-anchor="middle" font-family="Liberation Sans">25</text><text x="1831" y="987.5" font-size="17.5" fill="#8d9cab" text-anchor="middle" font-family="Liberation Sans">26</text><text x="1831" y="959.0" font-size="17.5" fill="#8d9cab" text-anchor="middle" font-family="Liberation Sans">27</text><text x="1831" y="930.4" font-size="17.5" fill="#8d9cab" text-anchor="middle" font-family="Liberation Sans">28</text><text x="1831" y="901.8" font-size="17.5" fill="#8d9cab" text-anchor="middle" font-family="Liberation Sans">29</text><text x="1831" y="873.2" font-size="17.5" fill="#8d9cab" text-anchor="middle" font-family="Liberation Sans">30</text><text x="1831" y="844.6" font-size="17.5" fill="#8d9cab" text-anchor="middle" font-family="Liberation Sans">31</text><text x="1831" y="816.1" font-size="17.5" fill="#8d9cab" text-anchor="middle" font-family="Liberation Sans">32</text><text x="1831" y="787.5" font-size="17.5" fill="#8d9cab" text-anchor="middle" font-family="Liberation Sans">33</text><text x="1831" y="758.9" font-size="17.5" fill="#8d9cab" text-anchor="middle" font-family="Liberation Sans">34</text><text x="1831" y="730.3" font-size="17.5" fill="#8d9cab" text-anchor="middle" font-family="Liberation Sans">35</text><text x="1831" y="701.7" font-size="17.5" fill="#8d9cab" text-anchor="middle" font-family="Liberation Sans">36</text><text x="1831" y="673.2" font-size="17.5" fill="#8d9cab" text-anchor="middle" font-family="Liberation Sans">37</text><text x="1831" y="644.6" font-size="17.5" fill="#8d9cab" text-anchor="middle" font-family="Liberation Sans">38</text><text x="1831" y="616.0" font-size="17.5" fill="#8d9cab" text-anchor="middle" font-family="Liberation Sans">39</text><text x="1831" y="587.4" font-size="17.5" fill="#8d9cab" text-anchor="middle" font-family="Liberation Sans">40</text><text x="1831" y="558.8" font-size="17.5" fill="#8d9cab" text-anchor="middle" font-family="Liberation Sans">41</text><rect x="1487.5" y="538.3" width="1.2" height="1200.4" fill="#3b4655"/><rect x="1802.0" y="538.3" width="1.2" height="1200.4" fill="#3b4655"/><rect x="1488.0" y="538.3" width="314.5" height="56.2" fill="#363636" /><rect x="1504.0" y="539.1" width="282.5" height="2.6" fill="#6e6e6e" /><rect x="1504.0" y="545.3" width="282.5" height="4.5" fill="#585858" /><rect x="1504.0" y="572.3" width="282.5" height="5.0" fill="#5c5c5c" /><rect x="1508" y="551.3400000000001" width="274.5" height="8" fill="url(#ppRow)"/><rect x="1508" y="581.3400000000001" width="274.5" height="8" fill="url(#ppRow)"/><rect x="1504.0" y="541.3" width="2.0" height="50.0" fill="#4a4a4a" /><rect x="1598.2" y="541.3" width="2.0" height="50.0" fill="#4a4a4a" /><rect x="1692.3" y="541.3" width="2.0" height="50.0" fill="#4a4a4a" /><rect x="1514.0" y="590.8" width="4.0" height="3.0" fill="#d5d5d5" /><rect x="1524.5" y="590.8" width="4.0" height="3.0" fill="#d5d5d5" /><rect x="1535.0" y="590.8" width="4.0" height="3.0" fill="#d5d5d5" /><rect x="1545.5" y="590.8" width="4.0" height="3.0" fill="#d5d5d5" /><rect x="1556.0" y="590.8" width="4.0" height="3.0" fill="#d5d5d5" /><rect x="1566.5" y="590.8" width="4.0" height="3.0" fill="#d5d5d5" /><rect x="1577.0" y="590.8" width="4.0" height="3.0" fill="#d5d5d5" /><rect x="1587.5" y="590.8" width="4.0" height="3.0" fill="#d5d5d5" /><rect x="1598.0" y="590.8" width="4.0" height="3.0" fill="#d5d5d5" /><rect x="1608.5" y="590.8" width="4.0" height="3.0" fill="#d5d5d5" /><rect x="1619.0" y="590.8" width="4.0" height="3.0" fill="#d5d5d5" /><rect x="1629.5" y="590.8" width="4.0" height="3.0" fill="#d5d5d5" /><rect x="1640.0" y="590.8" width="4.0" height="3.0" fill="#d5d5d5" /><rect x="1650.5" y="590.8" width="4.0" height="3.0" fill="#d5d5d5" /><rect x="1661.0" y="590.8" width="4.0" height="3.0" fill="#d5d5d5" /><rect x="1671.5" y="590.8" width="4.0" height="3.0" fill="#d5d5d5" /><rect x="1682.0" y="590.8" width="4.0" height="3.0" fill="#d5d5d5" /><rect x="1692.5" y="590.8" width="4.0" height="3.0" fill="#d5d5d5" /><rect x="1703.0" y="590.8" width="4.0" height="3.0" fill="#d5d5d5" /><rect x="1713.5" y="590.8" width="4.0" height="3.0" fill="#d5d5d5" /><rect x="1724.0" y="590.8" width="4.0" height="3.0" fill="#d5d5d5" /><rect x="1734.5" y="590.8" width="4.0" height="3.0" fill="#d5d5d5" /><rect x="1745.0" y="590.8" width="4.0" height="3.0" fill="#d5d5d5" /><rect x="1755.5" y="590.8" width="4.0" height="3.0" fill="#d5d5d5" /><rect x="1766.0" y="590.8" width="4.0" height="3.0" fill="#d5d5d5" /><rect x="1776.5" y="590.8" width="4.0" height="3.0" fill="#d5d5d5" /><rect x="1515.0" y="563.8" width="3.0" height="3.0" fill="#cfcfcf" /><rect x="1525.0" y="563.8" width="3.0" height="3.0" fill="#cfcfcf" /><rect x="1535.0" y="563.8" width="3.0" height="3.0" fill="#cfcfcf" /><rect x="1489" y="540.3400000000001" width="8" height="4" rx="2" fill="#e6e6e6"/><rect x="1793.5" y="540.3400000000001" width="8" height="4" rx="2" fill="#e6e6e6"/><rect x="1489" y="567.3400000000001" width="8" height="4" rx="2" fill="#e6e6e6"/><rect x="1793.5" y="567.3400000000001" width="8" height="4" rx="2" fill="#e6e6e6"/><rect x="1489" y="589.3400000000001" width="8" height="4" rx="2" fill="#e6e6e6"/><rect x="1793.5" y="589.3400000000001" width="8" height="4" rx="2" fill="#e6e6e6"/><rect x="1488.0" y="594.5" width="314.5" height="29.6" fill="#9a9791" /><rect x="1491" y="596.5000000000002" width="82" height="25.6" fill="url(#photo)"/><rect x="1491.0" y="610.8" width="80.0" height="2.5" fill="#1c1c1c" /><ellipse cx="1540" cy="603.4" rx="14" ry="3.5" fill="#d8d8d8"/><rect x="1581.0" y="598.5" width="20.0" height="22.6" fill="#2a2520" /><rect x="1608.0" y="598.5" width="20.0" height="21.6" fill="#36302a" /><rect x="1612.0" y="602.5" width="12.0" height="3.0" fill="#7a746a" /><rect x="1624.0" y="596.5" width="6.0" height="3.0" fill="#3fb7d4" /><rect x="1633.0" y="598.5" width="20.0" height="21.6" fill="#36302a" /><rect x="1637.0" y="602.5" width="12.0" height="3.0" fill="#7a746a" /><rect x="1649.0" y="596.5" width="6.0" height="3.0" fill="#3fb7d4" /><rect x="1658.0" y="598.5" width="20.0" height="21.6" fill="#36302a" /><rect x="1662.0" y="602.5" width="12.0" height="3.0" fill="#7a746a" /><rect x="1674.0" y="596.5" width="6.0" height="3.0" fill="#3fb7d4" /><rect x="1683.0" y="598.5" width="20.0" height="21.6" fill="#36302a" /><rect x="1687.0" y="602.5" width="12.0" height="3.0" fill="#7a746a" /><rect x="1699.0" y="596.5" width="6.0" height="3.0" fill="#3fb7d4" /><rect x="1710" y="596.5000000000002" width="90.5" height="25.6" fill="url(#photo)"/><rect x="1716.0" y="600.4" width="70.0" height="2.6" fill="#151515" /><rect x="1790.5" y="598.0" width="10.0" height="4.0" fill="#3fb7d4" /><rect x="1716.0" y="613.7" width="70.0" height="2.6" fill="#151515" /><rect x="1790.5" y="611.4" width="10.0" height="4.0" fill="#3fb7d4" /><rect x="1488.0" y="621.1" width="314.5" height="3.0" fill="#b5b5b5" /><rect x="1539.2" y="555.9" width="212.6" height="23.6" fill="#7b8c99" stroke="#111" stroke-width="2"/><text x="1645.5" y="573.6" font-size="16.5" fill="#f2f2f2" text-anchor="middle" font-family="Liberation Sans">DC1R1PP1 - Patch Panel</text><rect x="1488.0" y="652.7" width="314.5" height="285.8" fill="#3a3a3a" /><rect x="1488.0" y="652.7" width="11.0" height="285.8" fill="#2c2c2c" /><rect x="1489.0" y="672.7" width="9.0" height="27.0" fill="#c9c9c9" /><rect x="1491.0" y="707.7" width="3.0" height="100.0" fill="#bbb" /><rect x="1489.0" y="864.7" width="9.0" height="14.0" fill="#c9c9c9" /><rect x="1499.5" y="657.7" width="59.7" height="58.6" fill="url(#fanmod)" /><circle cx="1527.8" cy="687.0" r="26" fill="#000"/><circle cx="1527.8" cy="687.0" r="23.5" fill="none" stroke="#d8d8d8" stroke-width="1.6"/><line x1="1504.3" y1="687.0" x2="1551.3" y2="687.0" stroke="#bbb" stroke-width="1.3"/><circle cx="1533.8" cy="686.0" r="10" fill="#b9ac9a"/><circle cx="1530.8" cy="686.0" r="5" fill="#222"/><path d="M1523.8 663.0 Q1515.8 687.0 1520.8 711.0 L1528.8 711.0 Q1524.8 687.0 1532.8 663.0 Z" fill="#d95463"/><line x1="1529.8" y1="681.0" x2="1533.8" y2="699.0" stroke="#e8d43a" stroke-width="2"/><circle cx="1552.7" cy="710.7" r="2.6" fill="#eee" stroke="#111" stroke-width="1.2"/><rect x="1560.2" y="657.7" width="59.7" height="58.6" fill="url(#fanmod)" /><circle cx="1588.5" cy="687.0" r="26" fill="#000"/><circle cx="1588.5" cy="687.0" r="23.5" fill="none" stroke="#d8d8d8" stroke-width="1.6"/><line x1="1565.0" y1="687.0" x2="1612.0" y2="687.0" stroke="#bbb" stroke-width="1.3"/><circle cx="1594.5" cy="686.0" r="10" fill="#b9ac9a"/><circle cx="1591.5" cy="686.0" r="5" fill="#222"/><path d="M1584.5 663.0 Q1576.5 687.0 1581.5 711.0 L1589.5 711.0 Q1585.5 687.0 1593.5 663.0 Z" fill="#d95463"/><line x1="1590.5" y1="681.0" x2="1594.5" y2="699.0" stroke="#e8d43a" stroke-width="2"/><circle cx="1613.4" cy="710.7" r="2.6" fill="#eee" stroke="#111" stroke-width="1.2"/><rect x="1620.9" y="657.7" width="59.7" height="58.6" fill="url(#fanmod)" /><circle cx="1649.2" cy="687.0" r="26" fill="#000"/><circle cx="1649.2" cy="687.0" r="23.5" fill="none" stroke="#d8d8d8" stroke-width="1.6"/><line x1="1625.8" y1="687.0" x2="1672.8" y2="687.0" stroke="#bbb" stroke-width="1.3"/><circle cx="1655.2" cy="686.0" r="10" fill="#b9ac9a"/><circle cx="1652.2" cy="686.0" r="5" fill="#222"/><path d="M1645.2 663.0 Q1637.2 687.0 1642.2 711.0 L1650.2 711.0 Q1646.2 687.0 1654.2 663.0 Z" fill="#d95463"/><line x1="1651.2" y1="681.0" x2="1655.2" y2="699.0" stroke="#e8d43a" stroke-width="2"/><circle cx="1674.1" cy="710.7" r="2.6" fill="#eee" stroke="#111" stroke-width="1.2"/><rect x="1681.6" y="657.7" width="59.7" height="58.6" fill="url(#fanmod)" /><circle cx="1709.9" cy="687.0" r="26" fill="#000"/><circle cx="1709.9" cy="687.0" r="23.5" fill="none" stroke="#d8d8d8" stroke-width="1.6"/><line x1="1686.4" y1="687.0" x2="1733.4" y2="687.0" stroke="#bbb" stroke-width="1.3"/><circle cx="1715.9" cy="686.0" r="10" fill="#b9ac9a"/><circle cx="1712.9" cy="686.0" r="5" fill="#222"/><path d="M1705.9 663.0 Q1697.9 687.0 1702.9 711.0 L1710.9 711.0 Q1706.9 687.0 1714.9 663.0 Z" fill="#d95463"/><line x1="1711.9" y1="681.0" x2="1715.9" y2="699.0" stroke="#e8d43a" stroke-width="2"/><circle cx="1734.8" cy="710.7" r="2.6" fill="#eee" stroke="#111" stroke-width="1.2"/><rect x="1742.3" y="657.7" width="59.7" height="58.6" fill="url(#fanmod)" /><circle cx="1770.6" cy="687.0" r="26" fill="#000"/><circle cx="1770.6" cy="687.0" r="23.5" fill="none" stroke="#d8d8d8" stroke-width="1.6"/><line x1="1747.1" y1="687.0" x2="1794.1" y2="687.0" stroke="#bbb" stroke-width="1.3"/><circle cx="1776.6" cy="686.0" r="10" fill="#b9ac9a"/><circle cx="1773.6" cy="686.0" r="5" fill="#222"/><path d="M1766.6 663.0 Q1758.6 687.0 1763.6 711.0 L1771.6 711.0 Q1767.6 687.0 1775.6 663.0 Z" fill="#d95463"/><line x1="1772.6" y1="681.0" x2="1776.6" y2="699.0" stroke="#e8d43a" stroke-width="2"/><circle cx="1795.5" cy="710.7" r="2.6" fill="#eee" stroke="#111" stroke-width="1.2"/><rect x="1499.5" y="834.7" width="59.7" height="58.6" fill="url(#fanmod)" /><circle cx="1527.8" cy="864.0" r="26" fill="#000"/><circle cx="1527.8" cy="864.0" r="23.5" fill="none" stroke="#d8d8d8" stroke-width="1.6"/><line x1="1504.3" y1="864.0" x2="1551.3" y2="864.0" stroke="#bbb" stroke-width="1.3"/><circle cx="1533.8" cy="863.0" r="10" fill="#b9ac9a"/><circle cx="1530.8" cy="863.0" r="5" fill="#222"/><path d="M1523.8 840.0 Q1515.8 864.0 1520.8 888.0 L1528.8 888.0 Q1524.8 864.0 1532.8 840.0 Z" fill="#d95463"/><line x1="1529.8" y1="858.0" x2="1533.8" y2="876.0" stroke="#e8d43a" stroke-width="2"/><circle cx="1552.7" cy="887.7" r="2.6" fill="#eee" stroke="#111" stroke-width="1.2"/><rect x="1560.2" y="834.7" width="59.7" height="58.6" fill="url(#fanmod)" /><circle cx="1588.5" cy="864.0" r="26" fill="#000"/><circle cx="1588.5" cy="864.0" r="23.5" fill="none" stroke="#d8d8d8" stroke-width="1.6"/><line x1="1565.0" y1="864.0" x2="1612.0" y2="864.0" stroke="#bbb" stroke-width="1.3"/><circle cx="1594.5" cy="863.0" r="10" fill="#b9ac9a"/><circle cx="1591.5" cy="863.0" r="5" fill="#222"/><path d="M1584.5 840.0 Q1576.5 864.0 1581.5 888.0 L1589.5 888.0 Q1585.5 864.0 1593.5 840.0 Z" fill="#d95463"/><line x1="1590.5" y1="858.0" x2="1594.5" y2="876.0" stroke="#e8d43a" stroke-width="2"/><circle cx="1613.4" cy="887.7" r="2.6" fill="#eee" stroke="#111" stroke-width="1.2"/><rect x="1620.9" y="834.7" width="59.7" height="58.6" fill="url(#fanmod)" /><circle cx="1649.2" cy="864.0" r="26" fill="#000"/><circle cx="1649.2" cy="864.0" r="23.5" fill="none" stroke="#d8d8d8" stroke-width="1.6"/><line x1="1625.8" y1="864.0" x2="1672.8" y2="864.0" stroke="#bbb" stroke-width="1.3"/><circle cx="1655.2" cy="863.0" r="10" fill="#b9ac9a"/><circle cx="1652.2" cy="863.0" r="5" fill="#222"/><path d="M1645.2 840.0 Q1637.2 864.0 1642.2 888.0 L1650.2 888.0 Q1646.2 864.0 1654.2 840.0 Z" fill="#d95463"/><line x1="1651.2" y1="858.0" x2="1655.2" y2="876.0" stroke="#e8d43a" stroke-width="2"/><circle cx="1674.1" cy="887.7" r="2.6" fill="#eee" stroke="#111" stroke-width="1.2"/><rect x="1681.6" y="834.7" width="59.7" height="58.6" fill="url(#fanmod)" /><circle cx="1709.9" cy="864.0" r="26" fill="#000"/><circle cx="1709.9" cy="864.0" r="23.5" fill="none" stroke="#d8d8d8" stroke-width="1.6"/><line x1="1686.4" y1="864.0" x2="1733.4" y2="864.0" stroke="#bbb" stroke-width="1.3"/><circle cx="1715.9" cy="863.0" r="10" fill="#b9ac9a"/><circle cx="1712.9" cy="863.0" r="5" fill="#222"/><path d="M1705.9 840.0 Q1697.9 864.0 1702.9 888.0 L1710.9 888.0 Q1706.9 864.0 1714.9 840.0 Z" fill="#d95463"/><line x1="1711.9" y1="858.0" x2="1715.9" y2="876.0" stroke="#e8d43a" stroke-width="2"/><circle cx="1734.8" cy="887.7" r="2.6" fill="#eee" stroke="#111" stroke-width="1.2"/><rect x="1742.3" y="834.7" width="59.7" height="58.6" fill="url(#fanmod)" /><circle cx="1770.6" cy="864.0" r="26" fill="#000"/><circle cx="1770.6" cy="864.0" r="23.5" fill="none" stroke="#d8d8d8" stroke-width="1.6"/><line x1="1747.1" y1="864.0" x2="1794.1" y2="864.0" stroke="#bbb" stroke-width="1.3"/><circle cx="1776.6" cy="863.0" r="10" fill="#b9ac9a"/><circle cx="1773.6" cy="863.0" r="5" fill="#222"/><path d="M1766.6 840.0 Q1758.6 864.0 1763.6 888.0 L1771.6 888.0 Q1767.6 864.0 1775.6 840.0 Z" fill="#d95463"/><line x1="1772.6" y1="858.0" x2="1776.6" y2="876.0" stroke="#e8d43a" stroke-width="2"/><circle cx="1795.5" cy="887.7" r="2.6" fill="#eee" stroke="#111" stroke-width="1.2"/><rect x="1500.3" y="718.4" width="145" height="20" fill="#353535" stroke="#cfcfcf" stroke-width="1.6"/><rect x="1506.3" y="720.4" width="4.0" height="16.0" fill="#111" /><rect x="1510.3" y="720.4" width="6.0" height="7.0" fill="#ddd" /><rect x="1598.3" y="721.4" width="12.0" height="14.0" fill="#2a2a2a" /><rect x="1609.3" y="720.4" width="5.0" height="16.0" fill="#777" /><rect x="1641.3" y="720.3600000000001" width="3" height="3" fill="#ddd"/><rect x="1500.3" y="741.0" width="145" height="20" fill="#353535" stroke="#cfcfcf" stroke-width="1.6"/><rect x="1506.3" y="743.0" width="4.0" height="16.0" fill="#111" /><rect x="1510.3" y="743.0" width="6.0" height="7.0" fill="#ddd" /><rect x="1598.3" y="744.0" width="12.0" height="14.0" fill="#2a2a2a" /><rect x="1609.3" y="743.0" width="5.0" height="16.0" fill="#777" /><rect x="1641.3" y="742.9600000000002" width="3" height="3" fill="#ddd"/><rect x="1500.3" y="763.6" width="145" height="20" fill="#353535" stroke="#cfcfcf" stroke-width="1.6"/><rect x="1506.3" y="765.6" width="4.0" height="16.0" fill="#111" /><rect x="1510.3" y="765.6" width="6.0" height="7.0" fill="#ddd" /><rect x="1598.3" y="766.6" width="12.0" height="14.0" fill="#2a2a2a" /><rect x="1609.3" y="765.6" width="5.0" height="16.0" fill="#777" /><rect x="1641.3" y="765.5600000000002" width="3" height="3" fill="#ddd"/><rect x="1500.3" y="786.2" width="145" height="20" fill="#353535" stroke="#cfcfcf" stroke-width="1.6"/><rect x="1506.3" y="788.2" width="4.0" height="16.0" fill="#111" /><rect x="1510.3" y="788.2" width="6.0" height="7.0" fill="#ddd" /><rect x="1598.3" y="789.2" width="12.0" height="14.0" fill="#2a2a2a" /><rect x="1609.3" y="788.2" width="5.0" height="16.0" fill="#777" /><rect x="1641.3" y="788.1600000000001" width="3" height="3" fill="#ddd"/><rect x="1649.0" y="718.4" width="145" height="20" fill="#353535" stroke="#cfcfcf" stroke-width="1.6"/><rect x="1655.0" y="720.4" width="4.0" height="16.0" fill="#111" /><rect x="1659.0" y="720.4" width="6.0" height="7.0" fill="#ddd" /><rect x="1747.0" y="721.4" width="12.0" height="14.0" fill="#2a2a2a" /><rect x="1758.0" y="720.4" width="5.0" height="16.0" fill="#777" /><rect x="1790.0" y="720.3600000000001" width="3" height="3" fill="#ddd"/><rect x="1649.0" y="741.0" width="145" height="20" fill="#353535" stroke="#cfcfcf" stroke-width="1.6"/><rect x="1655.0" y="743.0" width="4.0" height="16.0" fill="#111" /><rect x="1659.0" y="743.0" width="6.0" height="7.0" fill="#ddd" /><rect x="1747.0" y="744.0" width="12.0" height="14.0" fill="#2a2a2a" /><rect x="1758.0" y="743.0" width="5.0" height="16.0" fill="#777" /><rect x="1790.0" y="742.9600000000002" width="3" height="3" fill="#ddd"/><rect x="1649.0" y="763.6" width="145" height="20" fill="#353535" stroke="#cfcfcf" stroke-width="1.6"/><rect x="1655.0" y="765.6" width="4.0" height="16.0" fill="#111" /><rect x="1659.0" y="765.6" width="6.0" height="7.0" fill="#ddd" /><rect x="1747.0" y="766.6" width="12.0" height="14.0" fill="#2a2a2a" /><rect x="1758.0" y="765.6" width="5.0" height="16.0" fill="#777" /><rect x="1790.0" y="765.5600000000002" width="3" height="3" fill="#ddd"/><rect x="1649.0" y="786.2" width="145" height="20" fill="#353535" stroke="#cfcfcf" stroke-width="1.6"/><rect x="1655.0" y="788.2" width="4.0" height="16.0" fill="#111" /><rect x="1659.0" y="788.2" width="6.0" height="7.0" fill="#ddd" /><rect x="1747.0" y="789.2" width="12.0" height="14.0" fill="#2a2a2a" /><rect x="1758.0" y="788.2" width="5.0" height="16.0" fill="#777" /><rect x="1790.0" y="788.1600000000001" width="3" height="3" fill="#ddd"/><rect x="1500" y="810.6600000000001" width="290.5" height="21.7" fill="#262626" stroke="#555" stroke-width="1"/><rect x="1508.0" y="817.7" width="5.0" height="5.0" fill="#ddd" /><rect x="1525.0" y="816.7" width="13.0" height="8.0" fill="#999" /><rect x="1550.0" y="816.7" width="12.0" height="5.0" fill="#555" /><rect x="1568.0" y="816.7" width="12.0" height="5.0" fill="#555" /><rect x="1595.0" y="816.7" width="12.0" height="5.0" fill="#555" /><rect x="1613.0" y="820.7" width="22.0" height="5.0" fill="#3a74d0" /><rect x="1640" y="814.6600000000001" width="12" height="13" fill="#444" stroke="#888" stroke-width="1"/><rect x="1656" y="814.6600000000001" width="12" height="13" fill="#444" stroke="#888" stroke-width="1"/><rect x="1672" y="814.6600000000001" width="12" height="13" fill="#444" stroke="#888" stroke-width="1"/><rect x="1726.0" y="819.7" width="22.0" height="5.0" fill="#888" /><rect x="1757.0" y="819.7" width="22.0" height="5.0" fill="#3a74d0" /><rect x="1500" y="896.6600000000001" width="294.5" height="21.4" fill="url(#grill)"/><rect x="1488.0" y="920.2" width="314.5" height="18.3" fill="#cfcfcf" /><rect x="1488.0" y="920.2" width="314.5" height="2.0" fill="#e8e8e8" /><rect x="1491.0" y="922.7" width="24.0" height="12.0" fill="#3b8de0" /><rect x="1496.0" y="929.2" width="5.0" height="2.0" fill="#cfe3f8" /><rect x="1504.0" y="929.2" width="5.0" height="2.0" fill="#cfe3f8" /><rect x="1518.0" y="924.2" width="2.5" height="9.0" fill="#777" /><rect x="1526.0" y="922.7" width="24.0" height="12.0" fill="#3b8de0" /><rect x="1531.0" y="929.2" width="5.0" height="2.0" fill="#cfe3f8" /><rect x="1539.0" y="929.2" width="5.0" height="2.0" fill="#cfe3f8" /><rect x="1553.0" y="924.2" width="2.5" height="9.0" fill="#777" /><rect x="1561.0" y="922.7" width="24.0" height="12.0" fill="#3b8de0" /><rect x="1566.0" y="929.2" width="5.0" height="2.0" fill="#cfe3f8" /><rect x="1574.0" y="929.2" width="5.0" height="2.0" fill="#cfe3f8" /><rect x="1588.0" y="924.2" width="2.5" height="9.0" fill="#777" /><rect x="1707.0" y="922.7" width="24.0" height="12.0" fill="#3b8de0" /><rect x="1712.0" y="929.2" width="5.0" height="2.0" fill="#cfe3f8" /><rect x="1720.0" y="929.2" width="5.0" height="2.0" fill="#cfe3f8" /><rect x="1734.0" y="924.2" width="2.5" height="9.0" fill="#777" /><rect x="1742.0" y="922.7" width="24.0" height="12.0" fill="#3b8de0" /><rect x="1747.0" y="929.2" width="5.0" height="2.0" fill="#cfe3f8" /><rect x="1755.0" y="929.2" width="5.0" height="2.0" fill="#cfe3f8" /><rect x="1769.0" y="924.2" width="2.5" height="9.0" fill="#777" /><rect x="1777.0" y="922.7" width="24.0" height="12.0" fill="#3b8de0" /><rect x="1782.0" y="929.2" width="5.0" height="2.0" fill="#cfe3f8" /><rect x="1790.0" y="929.2" width="5.0" height="2.0" fill="#cfe3f8" /><rect x="1804.0" y="924.2" width="2.5" height="9.0" fill="#777" /><rect x="1600" y="922.1600000000001" width="88" height="14" fill="#d9d9d9" stroke="#b5b5b5" stroke-width="1"/><rect x="1606.0" y="925.2" width="9.0" height="3.0" fill="#777" /><rect x="1619.0" y="925.2" width="9.0" height="3.0" fill="#777" /><rect x="1632.0" y="925.2" width="9.0" height="3.0" fill="#777" /><rect x="1645.0" y="925.2" width="9.0" height="3.0" fill="#777" /><rect x="1658.0" y="925.2" width="9.0" height="3.0" fill="#777" /><rect x="1671.0" y="925.2" width="9.0" height="3.0" fill="#777" /><rect x="1488.0" y="938.5" width="314.5" height="57.2" fill="#b3bdc9" /><rect x="1507" y="941.46" width="20" height="23" fill="url(#hexmesh)"/><rect x="1533.0" y="941.5" width="49.0" height="10.5" fill="#1a1a1a" /><rect x="1533.0" y="941.5" width="3.0" height="10.5" fill="#e0602a" /><rect x="1572.0" y="942.5" width="8.0" height="8.5" fill="#c8c8c8" /><rect x="1583.0" y="941.5" width="49.0" height="10.5" fill="#1a1a1a" /><rect x="1583.0" y="941.5" width="3.0" height="10.5" fill="#e0602a" /><rect x="1622.0" y="942.5" width="8.0" height="8.5" fill="#c8c8c8" /><rect x="1533.0" y="953.3" width="49.0" height="10.5" fill="#1a1a1a" /><rect x="1533.0" y="953.3" width="3.0" height="10.5" fill="#e0602a" /><rect x="1572.0" y="954.3" width="8.0" height="8.5" fill="#c8c8c8" /><rect x="1583.0" y="953.3" width="49.0" height="10.5" fill="#1a1a1a" /><rect x="1583.0" y="953.3" width="3.0" height="10.5" fill="#e0602a" /><rect x="1622.0" y="954.3" width="8.0" height="8.5" fill="#c8c8c8" /><rect x="1635" y="941.46" width="24" height="23" fill="url(#hexmesh)"/><rect x="1659" y="947.46" width="31" height="31" fill="url(#hexmesh)"/><rect x="1503.0" y="968.5" width="33.0" height="23.0" fill="#6d7580" /><rect x="1509.0" y="969.5" width="22.0" height="14.0" fill="#0f0f0f" /><rect x="1521.0" y="985.5" width="5.0" height="6.0" fill="#e85b2a" /><rect x="1543.0" y="968.5" width="33.0" height="23.0" fill="#6d7580" /><rect x="1549.0" y="969.5" width="22.0" height="14.0" fill="#0f0f0f" /><rect x="1561.0" y="985.5" width="5.0" height="6.0" fill="#e85b2a" /><rect x="1586" y="968.46" width="95" height="15" fill="url(#hexmesh)"/><rect x="1601.0" y="984.5" width="12.0" height="4.0" fill="#3a8ee0" /><rect x="1621.0" y="984.5" width="12.0" height="4.0" fill="#3a8ee0" /><rect x="1648.0" y="982.5" width="10.0" height="8.0" fill="#222" /><rect x="1663.0" y="982.5" width="10.0" height="8.0" fill="#222" /><rect x="1678.0" y="982.5" width="10.0" height="8.0" fill="#222" /><rect x="1700.0" y="941.5" width="95.0" height="43.0" fill="#a3adb8" /><rect x="1705.0" y="945.5" width="72.0" height="6.0" fill="#222" /><rect x="1708.0" y="956.5" width="70.0" height="3.0" fill="#666" /><rect x="1708.0" y="969.5" width="70.0" height="3.0" fill="#666" /><rect x="1779.0" y="941.5" width="7.0" height="41.0" fill="#1e1e1e" /><rect x="1698" y="983.46" width="100" height="8" fill="url(#hexmesh)"/><rect x="1488.0" y="995.6" width="314.5" height="28.6" fill="#9a9791" /><rect x="1491" y="997.6200000000001" width="82" height="24.6" fill="url(#photo)"/><rect x="1491.0" y="1011.3" width="80.0" height="2.5" fill="#1c1c1c" /><ellipse cx="1540" cy="1004.2" rx="14" ry="3.5" fill="#d8d8d8"/><rect x="1581.0" y="999.6" width="20.0" height="21.6" fill="#2a2520" /><rect x="1608.0" y="999.6" width="20.0" height="20.6" fill="#36302a" /><rect x="1612.0" y="1003.6" width="12.0" height="3.0" fill="#7a746a" /><rect x="1624.0" y="997.6" width="6.0" height="3.0" fill="#3fb7d4" /><rect x="1633.0" y="999.6" width="20.0" height="20.6" fill="#36302a" /><rect x="1637.0" y="1003.6" width="12.0" height="3.0" fill="#7a746a" /><rect x="1649.0" y="997.6" width="6.0" height="3.0" fill="#3fb7d4" /><rect x="1658.0" y="999.6" width="20.0" height="20.6" fill="#36302a" /><rect x="1662.0" y="1003.6" width="12.0" height="3.0" fill="#7a746a" /><rect x="1674.0" y="997.6" width="6.0" height="3.0" fill="#3fb7d4" /><rect x="1683.0" y="999.6" width="20.0" height="20.6" fill="#36302a" /><rect x="1687.0" y="1003.6" width="12.0" height="3.0" fill="#7a746a" /><rect x="1699.0" y="997.6" width="6.0" height="3.0" fill="#3fb7d4" /><rect x="1710" y="997.6200000000001" width="90.5" height="24.6" fill="url(#photo)"/><rect x="1716.0" y="1001.3" width="70.0" height="2.6" fill="#151515" /><rect x="1790.5" y="999.0" width="10.0" height="4.0" fill="#3fb7d4" /><rect x="1716.0" y="1014.2" width="70.0" height="2.6" fill="#151515" /><rect x="1790.5" y="1011.9" width="10.0" height="4.0" fill="#3fb7d4" /><rect x="1488.0" y="1021.2" width="314.5" height="3.0" fill="#b5b5b5" /><rect x="1488.0" y="1024.2" width="314.5" height="57.2" fill="#9a9791" /><rect x="1491" y="1026.2" width="82" height="53.2" fill="url(#photo)"/><rect x="1491.0" y="1055.6" width="80.0" height="2.5" fill="#1c1c1c" /><ellipse cx="1540" cy="1041.3" rx="14" ry="3.5" fill="#d8d8d8"/><rect x="1581.0" y="1028.2" width="20.0" height="50.2" fill="#2a2520" /><rect x="1608.0" y="1028.2" width="20.0" height="49.2" fill="#36302a" /><rect x="1612.0" y="1032.2" width="12.0" height="3.0" fill="#7a746a" /><rect x="1624.0" y="1026.2" width="6.0" height="3.0" fill="#3fb7d4" /><rect x="1633.0" y="1028.2" width="20.0" height="49.2" fill="#36302a" /><rect x="1637.0" y="1032.2" width="12.0" height="3.0" fill="#7a746a" /><rect x="1649.0" y="1026.2" width="6.0" height="3.0" fill="#3fb7d4" /><rect x="1658.0" y="1028.2" width="20.0" height="49.2" fill="#36302a" /><rect x="1662.0" y="1032.2" width="12.0" height="3.0" fill="#7a746a" /><rect x="1674.0" y="1026.2" width="6.0" height="3.0" fill="#3fb7d4" /><rect x="1683.0" y="1028.2" width="20.0" height="49.2" fill="#36302a" /><rect x="1687.0" y="1032.2" width="12.0" height="3.0" fill="#7a746a" /><rect x="1699.0" y="1026.2" width="6.0" height="3.0" fill="#3fb7d4" /><rect x="1710" y="1026.2" width="90.5" height="53.2" fill="url(#photo)"/><rect x="1716.0" y="1035.6" width="70.0" height="2.6" fill="#151515" /><rect x="1790.5" y="1031.1" width="10.0" height="4.0" fill="#3fb7d4" /><rect x="1716.0" y="1061.4" width="70.0" height="2.6" fill="#151515" /><rect x="1790.5" y="1056.8" width="10.0" height="4.0" fill="#3fb7d4" /><rect x="1488.0" y="1078.4" width="314.5" height="3.0" fill="#b5b5b5" /><rect x="1488.0" y="1109.9" width="314.5" height="371.5" fill="url(#tealR)" /><rect x="1488" y="1476.5" width="314.5" height="5" fill="#2c4e5c"/><rect x="1506.6" y="1126.4" width="280" height="102" fill="url(#mesh)"/><circle cx="1494.6" cy="1116" r="4" fill="url(#bolt)"/><circle cx="1555.4" cy="1116" r="4" fill="url(#bolt)"/><circle cx="1616.7" cy="1116" r="4" fill="url(#bolt)"/><circle cx="1676.5" cy="1116" r="4" fill="url(#bolt)"/><circle cx="1737.8" cy="1116" r="4" fill="url(#bolt)"/><circle cx="1796.2" cy="1116" r="4" fill="url(#bolt)"/><circle cx="1494.6" cy="1459" r="4" fill="url(#bolt)"/><circle cx="1555.4" cy="1459" r="4" fill="url(#bolt)"/><circle cx="1616.7" cy="1459" r="4" fill="url(#bolt)"/><circle cx="1676.5" cy="1459" r="4" fill="url(#bolt)"/><circle cx="1737.8" cy="1459" r="4" fill="url(#bolt)"/><circle cx="1796.2" cy="1459" r="4" fill="url(#bolt)"/><circle cx="1494.4" cy="1223.6" r="4" fill="url(#bolt)"/><circle cx="1494.4" cy="1299" r="4" fill="url(#bolt)"/><circle cx="1494.4" cy="1377" r="4" fill="url(#bolt)"/><circle cx="1796" cy="1223.6" r="4" fill="url(#bolt)"/><circle cx="1796" cy="1299" r="4" fill="url(#bolt)"/><circle cx="1796" cy="1377" r="4" fill="url(#bolt)"/><rect x="1623.5" y="1248.5" width="44" height="8.5" fill="url(#handleG)"/><rect x="1519.6" y="1391.3" width="250.2" height="44.7" rx="3" fill="#41717f"/><rect x="1519.6" y="1391.3" width="60" height="44.7" rx="3" fill="#396574" opacity="0.8"/><rect x="1540.4" y="1415" width="44" height="17.7" fill="#0f8fa8"/><path d="M1545 1431 l8 -11 l8 11 z M1563 1431 l8 -11 l8 11 z" fill="#75b8d2"/><text x="1540" y="1411" font-size="8" fill="#d9534f" font-family="Liberation Serif" textLength="45" lengthAdjust="spacingAndGlyphs">Cisco Systems</text><text x="1663.3" y="1423.4" font-size="13.5" fill="#e8eef0" font-family="Liberation Serif" font-weight="bold" textLength="79" lengthAdjust="spacingAndGlyphs">Catalyst 6500...</text><rect x="1488.0" y="1481.5" width="314.5" height="28.6" fill="#9a9791" /><rect x="1491" y="1483.48" width="82" height="24.6" fill="url(#photo)"/><rect x="1491.0" y="1497.2" width="80.0" height="2.5" fill="#1c1c1c" /><ellipse cx="1540" cy="1490.1" rx="14" ry="3.5" fill="#d8d8d8"/><rect x="1581.0" y="1485.5" width="20.0" height="21.6" fill="#2a2520" /><rect x="1608.0" y="1485.5" width="20.0" height="20.6" fill="#36302a" /><rect x="1612.0" y="1489.5" width="12.0" height="3.0" fill="#7a746a" /><rect x="1624.0" y="1483.5" width="6.0" height="3.0" fill="#3fb7d4" /><rect x="1633.0" y="1485.5" width="20.0" height="20.6" fill="#36302a" /><rect x="1637.0" y="1489.5" width="12.0" height="3.0" fill="#7a746a" /><rect x="1649.0" y="1483.5" width="6.0" height="3.0" fill="#3fb7d4" /><rect x="1658.0" y="1485.5" width="20.0" height="20.6" fill="#36302a" /><rect x="1662.0" y="1489.5" width="12.0" height="3.0" fill="#7a746a" /><rect x="1674.0" y="1483.5" width="6.0" height="3.0" fill="#3fb7d4" /><rect x="1683.0" y="1485.5" width="20.0" height="20.6" fill="#36302a" /><rect x="1687.0" y="1489.5" width="12.0" height="3.0" fill="#7a746a" /><rect x="1699.0" y="1483.5" width="6.0" height="3.0" fill="#3fb7d4" /><rect x="1710" y="1483.48" width="90.5" height="24.6" fill="url(#photo)"/><rect x="1716.0" y="1487.2" width="70.0" height="2.6" fill="#151515" /><rect x="1790.5" y="1484.9" width="10.0" height="4.0" fill="#3fb7d4" /><rect x="1716.0" y="1500.1" width="70.0" height="2.6" fill="#151515" /><rect x="1790.5" y="1497.8" width="10.0" height="4.0" fill="#3fb7d4" /><rect x="1488.0" y="1507.1" width="314.5" height="3.0" fill="#b5b5b5" /><rect x="1491.0" y="1512.0" width="309.0" height="223.7" fill="#d0d0d0" /><rect x="1491" y="1512" width="34" height="172" fill="#c4c4c4"/><rect x="1495" y="1516" width="22" height="18" fill="url(#darkmesh)"/><rect x="1503.0" y="1546.0" width="8.0" height="52.0" fill="#111" /><rect x="1503.0" y="1603.0" width="8.0" height="52.0" fill="#111" /><circle cx="1515" cy="1540" r="4" fill="none" stroke="#888" stroke-width="1.5"/><circle cx="1515" cy="1665" r="5" fill="none" stroke="#888" stroke-width="1.5"/><rect x="1645.7" y="1512" width="34" height="172" fill="#c4c4c4"/><rect x="1649.7" y="1516" width="22" height="18" fill="url(#darkmesh)"/><rect x="1657.7" y="1546.0" width="8.0" height="52.0" fill="#111" /><rect x="1657.7" y="1603.0" width="8.0" height="52.0" fill="#111" /><circle cx="1669.7" cy="1540" r="4" fill="none" stroke="#888" stroke-width="1.5"/><circle cx="1669.7" cy="1665" r="5" fill="none" stroke="#888" stroke-width="1.5"/><rect x="1525.0" y="1513.8" width="58.4" height="12.0" fill="#dedede" /><rect x="1527" y="1525.7" width="54.4" height="66.8" fill="url(#darkmesh)"/><circle cx="1554.2" cy="1559.1" r="13" fill="none" stroke="#5a5a5a" stroke-width="2"/><rect x="1549.7" y="1515.7" width="9.0" height="78.8" fill="#456878" /><rect x="1548.2" y="1514.7" width="12.0" height="4.0" fill="#2e4f5c" /><rect x="1525.0" y="1604.0" width="58.4" height="12.0" fill="#dedede" /><rect x="1527" y="1616.3" width="54.4" height="67.7" fill="url(#darkmesh)"/><circle cx="1554.2" cy="1650.2" r="13" fill="none" stroke="#5a5a5a" stroke-width="2"/><rect x="1549.7" y="1606.3" width="9.0" height="79.7" fill="#456878" /><rect x="1548.2" y="1605.3" width="12.0" height="4.0" fill="#2e4f5c" /><rect x="1582.4" y="1513.0" width="3.0" height="172.0" fill="#9a9a9a" /><rect x="1586.2" y="1513.8" width="58.6" height="12.0" fill="#dedede" /><rect x="1588.2" y="1525.7" width="54.6" height="66.8" fill="url(#darkmesh)"/><circle cx="1615.5" cy="1559.1" r="13" fill="none" stroke="#5a5a5a" stroke-width="2"/><rect x="1611.0" y="1515.7" width="9.0" height="78.8" fill="#456878" /><rect x="1609.5" y="1514.7" width="12.0" height="4.0" fill="#2e4f5c" /><rect x="1586.2" y="1604.0" width="58.6" height="12.0" fill="#dedede" /><rect x="1588.2" y="1616.3" width="54.6" height="67.7" fill="url(#darkmesh)"/><circle cx="1615.5" cy="1650.2" r="13" fill="none" stroke="#5a5a5a" stroke-width="2"/><rect x="1611.0" y="1606.3" width="9.0" height="79.7" fill="#456878" /><rect x="1609.5" y="1605.3" width="12.0" height="4.0" fill="#2e4f5c" /><rect x="1643.8" y="1513.0" width="3.0" height="172.0" fill="#9a9a9a" /><rect x="1675.0" y="1513.8" width="59.5" height="12.0" fill="#dedede" /><rect x="1677" y="1525.7" width="55.5" height="66.8" fill="url(#darkmesh)"/><circle cx="1704.8" cy="1559.1" r="13" fill="none" stroke="#5a5a5a" stroke-width="2"/><rect x="1700.2" y="1515.7" width="9.0" height="78.8" fill="#456878" /><rect x="1698.8" y="1514.7" width="12.0" height="4.0" fill="#2e4f5c" /><rect x="1675.0" y="1604.0" width="59.5" height="12.0" fill="#dedede" /><rect x="1677" y="1616.3" width="55.5" height="67.7" fill="url(#darkmesh)"/><circle cx="1704.8" cy="1650.2" r="13" fill="none" stroke="#5a5a5a" stroke-width="2"/><rect x="1700.2" y="1606.3" width="9.0" height="79.7" fill="#456878" /><rect x="1698.8" y="1605.3" width="12.0" height="4.0" fill="#2e4f5c" /><rect x="1733.5" y="1513.0" width="3.0" height="172.0" fill="#9a9a9a" /><rect x="1736.3" y="1513.8" width="59.5" height="12.0" fill="#dedede" /><rect x="1738.3" y="1525.7" width="55.5" height="66.8" fill="url(#darkmesh)"/><circle cx="1766.0" cy="1559.1" r="13" fill="none" stroke="#5a5a5a" stroke-width="2"/><rect x="1761.5" y="1515.7" width="9.0" height="78.8" fill="#456878" /><rect x="1760.0" y="1514.7" width="12.0" height="4.0" fill="#2e4f5c" /><rect x="1736.3" y="1604.0" width="59.5" height="12.0" fill="#dedede" /><rect x="1738.3" y="1616.3" width="55.5" height="67.7" fill="url(#darkmesh)"/><circle cx="1766.0" cy="1650.2" r="13" fill="none" stroke="#5a5a5a" stroke-width="2"/><rect x="1761.5" y="1606.3" width="9.0" height="79.7" fill="#456878" /><rect x="1760.0" y="1605.3" width="12.0" height="4.0" fill="#2e4f5c" /><rect x="1794.8" y="1513.0" width="3.0" height="172.0" fill="#9a9a9a" /><rect x="1491.0" y="1684.0" width="309.0" height="12.0" fill="#d6d6d6" /><rect x="1498" y="1696" width="295" height="38" fill="#c2c2c2" stroke="#999" stroke-width="1"/><rect x="1502" y="1700" width="287" height="30" fill="url(#hexmesh)"/><rect x="1516.6" y="1702.4" width="40.4" height="24" rx="3" fill="#242424"/><rect x="1511.6" y="1710.0" width="4.0" height="8.0" fill="#eee" /><rect x="1558.0" y="1710.0" width="4.0" height="8.0" fill="#eee" /><rect x="1591.7" y="1702.4" width="36.6" height="24" rx="3" fill="#242424"/><rect x="1586.7" y="1710.0" width="4.0" height="8.0" fill="#eee" /><rect x="1629.3" y="1710.0" width="4.0" height="8.0" fill="#eee" /><rect x="1663" y="1702.4" width="36.7" height="24" rx="3" fill="#242424"/><rect x="1658.0" y="1710.0" width="4.0" height="8.0" fill="#eee" /><rect x="1700.7" y="1710.0" width="4.0" height="8.0" fill="#eee" /><rect x="1734.5" y="1702.4" width="36.5" height="24" rx="3" fill="#242424"/><rect x="1729.5" y="1710.0" width="4.0" height="8.0" fill="#eee" /><rect x="1772.0" y="1710.0" width="4.0" height="8.0" fill="#eee" /><rect x="1488.5" y="1509.5" width="314" height="228.8" fill="none" stroke="#ffff00" stroke-width="5.2"/></svg><svg class="abs" style="left:2698px;top:308px" width="20" height="28" viewBox="0 0 20 28"><path d="M16 3 L4 14 L16 25 Z" fill="#c9ced6"/></svg><div class="t" style="transform:scaleX(0.9558);left:2754.4px;top:307.9px;font-size:34px;line-height:34px;color:#8b97a4;font-weight:normal;white-space:nowrap">Only physical devices where</div>
<div class="t" style="transform:scaleX(0.9644);left:2701px;top:355.1px;font-size:34px;line-height:34px;color:#8b97a4;font-weight:normal;white-space:nowrap">subtype attribute 'Rack' is true and</div>
<div class="t" style="transform:scaleX(0.9693);left:2701px;top:401.7px;font-size:34px;line-height:34px;color:#8b97a4;font-weight:normal;white-space:nowrap">have hardware model with defined</div>
<div class="t" style="transform:scaleX(0.9363);left:2701px;top:447.9px;font-size:34px;line-height:34px;color:#8b97a4;font-weight:normal;white-space:nowrap">size can be Rack Mounted.</div>
<div class="abs hr" style="left:2690px;top:527.5px;width:528px"></div><div class="t" style="transform:scaleX(0.9166);left:2690px;top:570.5px;font-size:45px;line-height:45px;color:#4a5665;font-weight:bold;white-space:nowrap;-webkit-text-stroke:0">Device</div>
<div class="abs" style="left:3218px;top:650px;width:14.5px;height:1098px;border-radius:7px;background:#6c6f78"></div><div class="t" style="transform:scaleX(0.9613);left:2690px;top:660.2px;font-size:33px;line-height:33px;color:#eeeeee;font-weight:normal;white-space:nowrap"><b>Name:</b> NHCTCC01</div>
<div class="t" style="transform:scaleX(0.9862);left:2690px;top:714.6px;font-size:33px;line-height:33px;color:#eeeeee;font-weight:normal;white-space:nowrap"><b>Type:</b> physical</div>
<div class="t" style="transform:scaleX(0.9447);left:2690px;top:768.2px;font-size:33px;line-height:33px;color:#eeeeee;font-weight:normal;white-space:nowrap"><b>Subtype:</b> Rackable</div>
<div class="t" style="transform:scaleX(0.9200);left:2690px;top:822.6px;font-size:33px;line-height:33px;color:#eeeeee;font-weight:normal;white-space:nowrap"><b>In Service:</b> Yes</div>
<div class="t" style="transform:scaleX(0.9430);left:2690px;top:875.9px;font-size:33px;line-height:33px;color:#eeeeee;font-weight:normal;white-space:nowrap"><b>Service Level:</b> Retire</div>
<div class="t" style="transform:scaleX(0.9585);left:2690px;top:930.0px;font-size:33px;line-height:33px;color:#eeeeee;font-weight:normal;white-space:nowrap"><b>Serial Number:</b> 13985610-37592</div>
<div class="t" style="transform:scaleX(0.8892);left:2690px;top:984.5px;font-size:33px;line-height:33px;color:#eeeeee;font-weight:normal;white-space:nowrap"><b>Asset Number:</b> 0011</div>
<div class="t" style="transform:scaleX(0.9578);left:2690px;top:1038.7px;font-size:33px;line-height:33px;color:#eeeeee;font-weight:normal;white-space:nowrap"><b>Hardware Model:</b> Cisco UCS</div>
<div class="t" style="transform:scaleX(0.9696);left:2690px;top:1134.7px;font-size:33px;line-height:33px;color:#eeeeee;font-weight:normal;white-space:nowrap"><b>Application Owner:</b> Jack</div>
<div class="t" style="transform:scaleX(0.9167);left:2690px;top:1187.8px;font-size:33px;line-height:33px;color:#eeeeee;font-weight:normal;white-space:nowrap"><b>Blades In Chassis:</b> </div>
<div class="t" style="transform:scaleX(0.9542);left:2690px;top:1080.5px;font-size:33px;line-height:33px;color:#eeeeee;font-weight:normal;white-space:nowrap">Chassis</div>
<div class="t" style="transform:scaleX(0.9798);left:2786.4px;top:1252.8px;font-size:33px;line-height:33px;color:#0b95dc;font-weight:normal;white-space:nowrap;text-decoration:underline;text-decoration-thickness:2.5px;text-underline-offset:5px">USNHCTVH003</div>
<div class="t" style="transform:scaleX(0.9798);left:2786.4px;top:1314.7px;font-size:33px;line-height:33px;color:#0b95dc;font-weight:normal;white-space:nowrap;text-decoration:underline;text-decoration-thickness:2.5px;text-underline-offset:5px">USNHCTVH005</div>
<div class="t" style="transform:scaleX(0.9798);left:2786.4px;top:1376.7px;font-size:33px;line-height:33px;color:#0b95dc;font-weight:normal;white-space:nowrap;text-decoration:underline;text-decoration-thickness:2.5px;text-underline-offset:5px">USNHCTVH006</div>
<div class="t" style="transform:scaleX(0.9798);left:2786.4px;top:1438.6px;font-size:33px;line-height:33px;color:#0b95dc;font-weight:normal;white-space:nowrap;text-decoration:underline;text-decoration-thickness:2.5px;text-underline-offset:5px">USNHCTVH007</div>
<div class="t" style="transform:scaleX(0.9798);left:2786.4px;top:1500.5px;font-size:33px;line-height:33px;color:#0b95dc;font-weight:normal;white-space:nowrap;text-decoration:underline;text-decoration-thickness:2.5px;text-underline-offset:5px">USNHCTVH008</div>
<div class="t" style="transform:scaleX(0.9683);left:2690.5px;top:1566.0px;font-size:33px;line-height:33px;color:#0b95dc;font-weight:normal;white-space:nowrap;text-decoration:underline;text-decoration-thickness:2.5px;text-underline-offset:5px">View NHCTCC01</div>
<div class="t" style="transform:scaleX(0.9806);left:2690px;top:1621.5px;font-size:33px;line-height:33px;color:#0b95dc;font-weight:normal;white-space:nowrap;text-decoration:underline;text-decoration-thickness:2.5px;text-underline-offset:5px">View Device Layout</div>
<div class="t" style="transform:scaleX(0.9924);left:2690px;top:1675.5px;font-size:33px;line-height:33px;color:#0b95dc;font-weight:normal;white-space:nowrap;text-decoration:underline;text-decoration-thickness:2.5px;text-underline-offset:5px">View Topology</div>
<div class="abs" style="left:2682px;top:1657px;width:230px;height:69px;box-sizing:border-box;border:4.5px solid #ee3340;border-radius:4px"></div></body></html>
